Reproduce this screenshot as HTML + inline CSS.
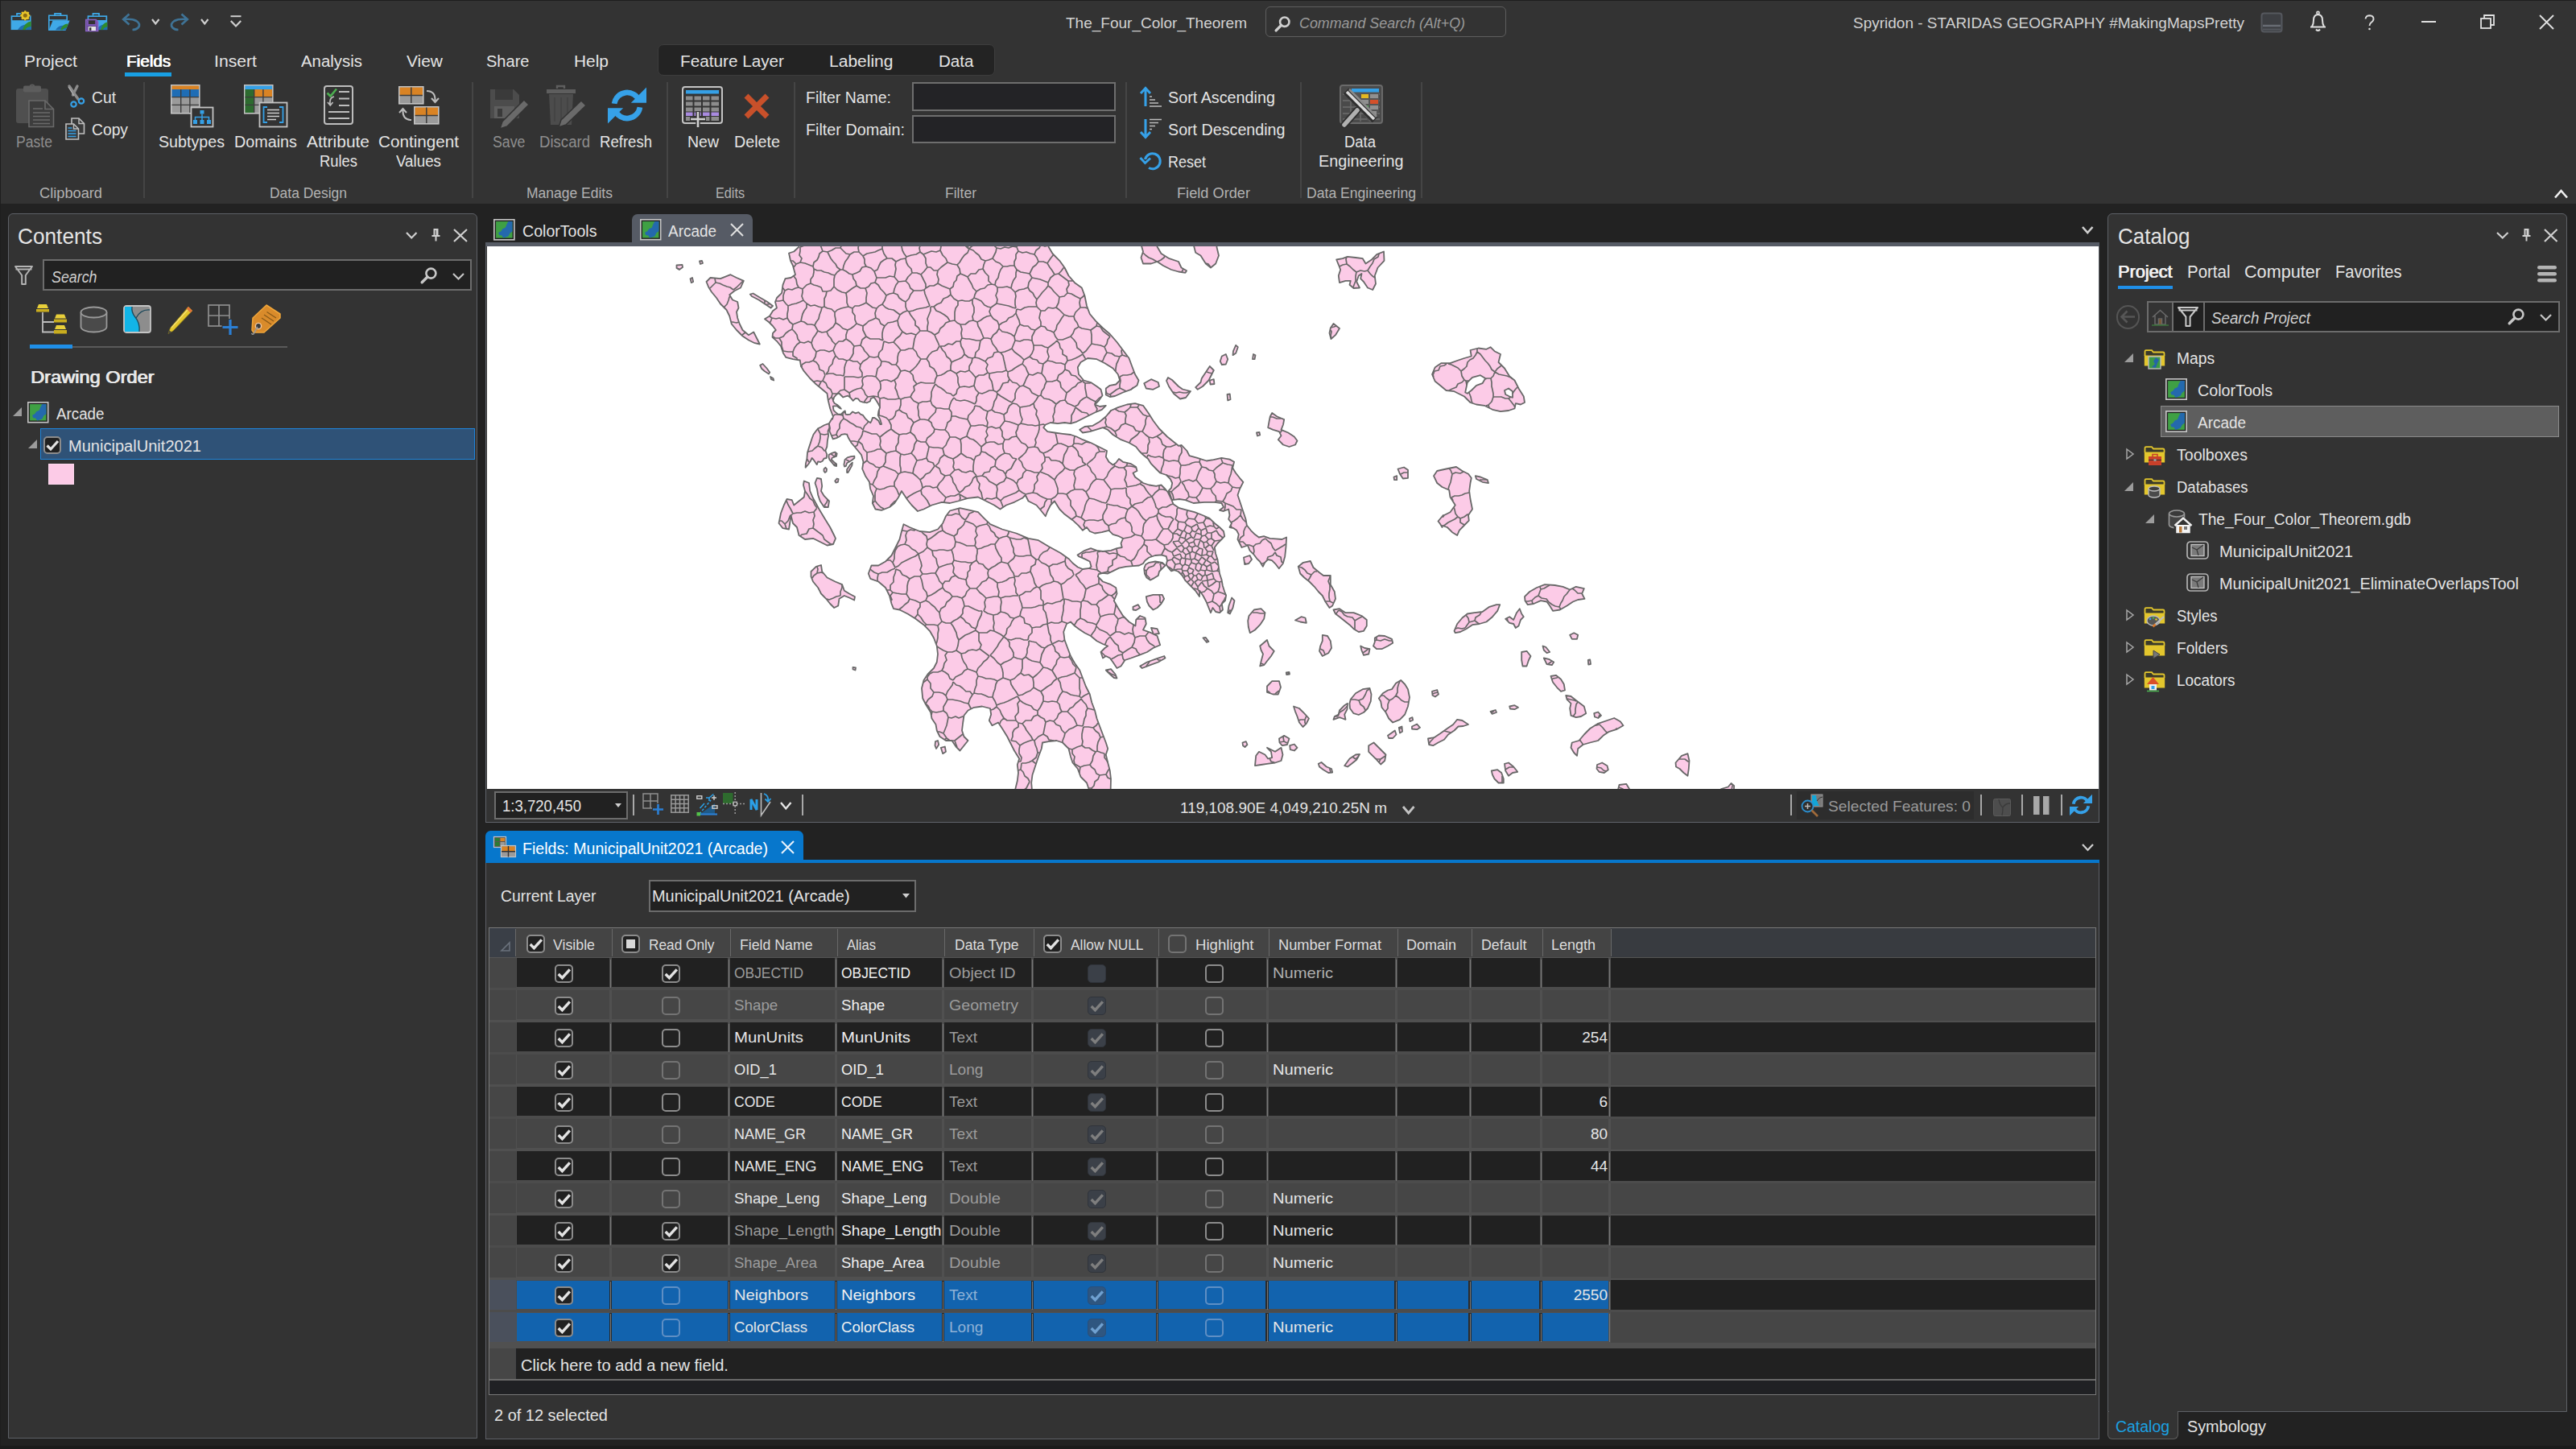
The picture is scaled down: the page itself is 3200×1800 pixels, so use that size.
<!DOCTYPE html>
<html><head><meta charset="utf-8"><title>The_Four_Color_Theorem</title>
<style>

html,body{margin:0;padding:0}
body{width:3200px;height:1800px;background:#222222;position:relative;overflow:hidden;font-family:'Liberation Sans',sans-serif}
body div{position:absolute;box-sizing:border-box}
svg{position:absolute;overflow:visible}
.cb{border:2px solid #8c8c8c;border-radius:5px;background:#212121}
.cbl{border:2px solid #737373;border-radius:5px;background:transparent}
.cbd{border:1px solid #30343a;border-radius:5px;background:#3b4048}
.cbs{border:2px solid #5f8fc4;border-radius:5px;background:transparent}
.cbds{border:1px solid #2a4f7a;border-radius:5px;background:#2f5680}
.pan{background:#333333;border:1.3px solid #5d6066}
.inp{background:#212121;border:2px solid #6c6c6c}

.t{position:absolute;white-space:nowrap;line-height:1;transform-origin:0 50%;font-family:'Liberation Sans', sans-serif}
</style></head>
<body>
<div style="left:0px;top:0px;width:3200px;height:252.5px;background:#333333"></div>
<div style="left:0px;top:0px;width:3200px;height:1px;background:#1e1e1e"></div>
<div style="left:0px;top:0px;width:1px;height:1800px;background:#1e1e1e"></div>
<div style="left:0px;top:1796px;width:3200px;height:4px;background:#1b1b1b"></div>
<div style="left:1572px;top:7.5px;width:299px;height:38.5px;border:1px solid #5e5e5e;border-radius:6px"></div>
<div style="left:817px;top:54.5px;width:419px;height:39.5px;background:#232323;border:1px solid #3d3d3d;border-radius:7px"></div>
<div style="left:155px;top:90px;width:58px;height:5px;background:#189fe3"></div>
<div style="left:178px;top:102px;width:2px;height:144px;background:#454545"></div>
<div style="left:586px;top:102px;width:2px;height:144px;background:#454545"></div>
<div style="left:828px;top:102px;width:2px;height:144px;background:#454545"></div>
<div style="left:986px;top:102px;width:2px;height:144px;background:#454545"></div>
<div style="left:1398px;top:102px;width:2px;height:144px;background:#454545"></div>
<div style="left:1614.5px;top:102px;width:2px;height:144px;background:#454545"></div>
<div style="left:1764.5px;top:102px;width:2px;height:144px;background:#454545"></div>
<div style="left:1133px;top:102px;width:253px;height:35.5px;background:#232326;border:2px solid #6e6e6e"></div>
<div style="left:1133px;top:142.5px;width:253px;height:35.5px;background:#232326;border:2px solid #6e6e6e"></div>
<div class="pan" style="left:10px;top:265.3px;width:582.6px;height:1522.2px;border-radius:6px 6px 0 0"></div>
<div class="inp" style="left:53px;top:322px;width:533px;height:39px;"></div>
<div style="left:36.5px;top:427.5px;width:53.5px;height:5px;background:#1f8fe8"></div>
<div style="left:90px;top:430px;width:267px;height:2px;background:#5a5a5a"></div>
<div style="left:50px;top:532px;width:540px;height:39px;background:#2f5277;border:1px solid #1f86dd"></div>
<div class="cb" style="left:54px;top:542px;width:22px;height:22px;"><svg width="100%" height="100%" viewBox="0 0 22 22" style="left:-2px;top:-2px;width:22px;height:22px"><path d="M4.5 11.5 L9 16 L18 6" fill="none" stroke="#e2e2e2" stroke-width="3.2"/></svg></div>
<div style="left:60px;top:576px;width:32px;height:26px;background:#fccbe7;border:1px solid #fdd9ee"></div>
<div style="left:785px;top:265.5px;width:150px;height:36.5px;background:#565b65;border-radius:7px 7px 0 0"></div>
<div style="left:603.3px;top:301px;width:2004.9px;height:5.2px;background:#565b65"></div>
<div style="left:603.3px;top:306px;width:2004.9px;height:716px;background:#333333;border:1.3px solid #60636a;border-top:none"></div>
<div style="left:605px;top:306.2px;width:2002px;height:673.8px;background:#ffffff"></div>
<div class="inp" style="left:613.5px;top:982.5px;width:166.5px;height:35px;"></div>
<div style="left:786px;top:987px;width:2px;height:26px;background:#a8a8a8"></div>
<div style="left:996px;top:987px;width:2px;height:26px;background:#a8a8a8"></div>
<div style="left:2224px;top:987px;width:2px;height:26px;background:#a8a8a8"></div>
<div style="left:2460px;top:987px;width:2px;height:26px;background:#a8a8a8"></div>
<div style="left:2511px;top:987px;width:2px;height:26px;background:#a8a8a8"></div>
<div style="left:2559.7px;top:987px;width:2px;height:26px;background:#a8a8a8"></div>
<div style="left:2231.5px;top:983px;width:220.5px;height:35px;background:#2d2d2d"></div>
<div style="left:603.3px;top:1031.7px;width:395.2px;height:38.3px;background:#0777cc;border-radius:6.5px 6.5px 0 0"></div>
<div style="left:603.3px;top:1068px;width:2004.9px;height:4px;background:#0777cc"></div>
<div class="pan" style="left:603.3px;top:1072px;width:2004.9px;height:715.5px;border-top:none"></div>
<div class="inp" style="left:805.5px;top:1092.5px;width:332.5px;height:40px;"></div>
<div style="left:607px;top:1152px;width:1997px;height:581px;background:#202124;border:1px solid #787878"></div>
<div style="left:608px;top:1153px;width:1393px;height:36px;background:#444444"></div>
<div style="left:2001px;top:1153px;width:602px;height:36px;background:#383b40"></div>
<div style="left:608px;top:1153px;width:32.5px;height:36px;background:#3a3f47"></div>
<div style="left:608px;top:1188.5px;width:1995px;height:1.5px;background:#555"></div>
<div style="left:640px;top:1154px;width:1px;height:34px;background:#686868"></div>
<div style="left:760px;top:1154px;width:1px;height:34px;background:#686868"></div>
<div style="left:907px;top:1154px;width:1px;height:34px;background:#686868"></div>
<div style="left:1040px;top:1154px;width:1px;height:34px;background:#686868"></div>
<div style="left:1173px;top:1154px;width:1px;height:34px;background:#686868"></div>
<div style="left:1284px;top:1154px;width:1px;height:34px;background:#686868"></div>
<div style="left:1439px;top:1154px;width:1px;height:34px;background:#686868"></div>
<div style="left:1575.5px;top:1154px;width:1px;height:34px;background:#686868"></div>
<div style="left:1735.5px;top:1154px;width:1px;height:34px;background:#686868"></div>
<div style="left:1827.5px;top:1154px;width:1px;height:34px;background:#686868"></div>
<div style="left:1915.5px;top:1154px;width:1px;height:34px;background:#686868"></div>
<div style="left:2000.5px;top:1154px;width:1px;height:34px;background:#686868"></div>
<svg style="left:622px;top:1170px" width="12" height="12" viewBox="0 0 12 12"><path d="M1 11 L11 11 L11 1 Z" fill="none" stroke="#6a717c" stroke-width="1.6"/></svg>
<div style="left:608px;top:1190px;width:1995px;height:40px;background:#4c4c4c"></div>
<div style="left:608px;top:1190px;width:32.5px;height:37px;background:#464646"></div>
<div style="left:642px;top:1190px;width:115.1px;height:36px;background:#212121"></div>
<div style="left:760.1px;top:1190px;width:144px;height:36px;background:#212121"></div>
<div style="left:907.1px;top:1190px;width:130px;height:36px;background:#212121"></div>
<div style="left:1040.1px;top:1190px;width:130px;height:36px;background:#212121"></div>
<div style="left:1173.1px;top:1190px;width:108px;height:36px;background:#212121"></div>
<div style="left:1284.1px;top:1190px;width:152px;height:36px;background:#212121"></div>
<div style="left:1439.1px;top:1190px;width:133.5px;height:36px;background:#212121"></div>
<div style="left:1575.6px;top:1190px;width:157px;height:36px;background:#212121"></div>
<div style="left:1735.6px;top:1190px;width:89px;height:36px;background:#212121"></div>
<div style="left:1827.6px;top:1190px;width:85px;height:36px;background:#212121"></div>
<div style="left:1915.6px;top:1190px;width:82px;height:36px;background:#212121"></div>
<div style="left:2000.6px;top:1190px;width:602.4px;height:37px;background:#212121"></div>
<div style="left:758.1px;top:1192px;width:1px;height:35px;background:#777"></div>
<div style="left:905.1px;top:1192px;width:1px;height:35px;background:#777"></div>
<div style="left:1038.1px;top:1192px;width:1px;height:35px;background:#777"></div>
<div style="left:1171.1px;top:1192px;width:1px;height:35px;background:#777"></div>
<div style="left:1282.1px;top:1192px;width:1px;height:35px;background:#777"></div>
<div style="left:1437.1px;top:1192px;width:1px;height:35px;background:#777"></div>
<div style="left:1573.6px;top:1192px;width:1px;height:35px;background:#777"></div>
<div style="left:1733.6px;top:1192px;width:1px;height:35px;background:#777"></div>
<div style="left:1825.6px;top:1192px;width:1px;height:35px;background:#777"></div>
<div style="left:1913.6px;top:1192px;width:1px;height:35px;background:#777"></div>
<div style="left:1998.6px;top:1192px;width:1px;height:35px;background:#777"></div>
<div class="cb" style="left:689px;top:1198px;width:23px;height:23px;"><svg width="100%" height="100%" viewBox="0 0 22 22" style="left:-2px;top:-2px;width:23px;height:23px"><path d="M4.5 11.5 L9 16 L18 6" fill="none" stroke="#e2e2e2" stroke-width="3.2"/></svg></div>
<div class="cb" style="left:822px;top:1198px;width:23px;height:23px;"><svg width="100%" height="100%" viewBox="0 0 22 22" style="left:-2px;top:-2px;width:23px;height:23px"><path d="M4.5 11.5 L9 16 L18 6" fill="none" stroke="#e2e2e2" stroke-width="3.2"/></svg></div>
<div class="cbd" style="left:1351px;top:1198px;width:23px;height:23px;"></div>
<div class="cb" style="left:1497px;top:1198px;width:23px;height:23px;"></div>
<div style="left:608px;top:1230px;width:1995px;height:40px;background:#505050"></div>
<div style="left:608px;top:1230px;width:32.5px;height:37px;background:#464646"></div>
<div style="left:642px;top:1230px;width:115.1px;height:36px;background:#464646"></div>
<div style="left:760.1px;top:1230px;width:144px;height:36px;background:#464646"></div>
<div style="left:907.1px;top:1230px;width:130px;height:36px;background:#464646"></div>
<div style="left:1040.1px;top:1230px;width:130px;height:36px;background:#464646"></div>
<div style="left:1173.1px;top:1230px;width:108px;height:36px;background:#464646"></div>
<div style="left:1284.1px;top:1230px;width:152px;height:36px;background:#464646"></div>
<div style="left:1439.1px;top:1230px;width:133.5px;height:36px;background:#464646"></div>
<div style="left:1575.6px;top:1230px;width:157px;height:36px;background:#464646"></div>
<div style="left:1735.6px;top:1230px;width:89px;height:36px;background:#464646"></div>
<div style="left:1827.6px;top:1230px;width:85px;height:36px;background:#464646"></div>
<div style="left:1915.6px;top:1230px;width:82px;height:36px;background:#464646"></div>
<div style="left:2000.6px;top:1230px;width:602.4px;height:38px;background:#464646"></div>
<div class="cb" style="left:689px;top:1238px;width:23px;height:23px;"><svg width="100%" height="100%" viewBox="0 0 22 22" style="left:-2px;top:-2px;width:23px;height:23px"><path d="M4.5 11.5 L9 16 L18 6" fill="none" stroke="#e2e2e2" stroke-width="3.2"/></svg></div>
<div class="cbl" style="left:822px;top:1238px;width:23px;height:23px;"></div>
<div class="cbd" style="left:1351px;top:1238px;width:23px;height:23px;"><svg width="100%" height="100%" viewBox="0 0 22 22" style="left:-1px;top:-1px;width:23px;height:23px"><path d="M4.5 11.5 L9 16 L18 6" fill="none" stroke="#7e7e7e" stroke-width="3.2"/></svg></div>
<div class="cbl" style="left:1497px;top:1238px;width:23px;height:23px;"></div>
<div style="left:608px;top:1270px;width:1995px;height:40px;background:#4c4c4c"></div>
<div style="left:608px;top:1270px;width:32.5px;height:37px;background:#464646"></div>
<div style="left:642px;top:1270px;width:115.1px;height:36px;background:#212121"></div>
<div style="left:760.1px;top:1270px;width:144px;height:36px;background:#212121"></div>
<div style="left:907.1px;top:1270px;width:130px;height:36px;background:#212121"></div>
<div style="left:1040.1px;top:1270px;width:130px;height:36px;background:#212121"></div>
<div style="left:1173.1px;top:1270px;width:108px;height:36px;background:#212121"></div>
<div style="left:1284.1px;top:1270px;width:152px;height:36px;background:#212121"></div>
<div style="left:1439.1px;top:1270px;width:133.5px;height:36px;background:#212121"></div>
<div style="left:1575.6px;top:1270px;width:157px;height:36px;background:#212121"></div>
<div style="left:1735.6px;top:1270px;width:89px;height:36px;background:#212121"></div>
<div style="left:1827.6px;top:1270px;width:85px;height:36px;background:#212121"></div>
<div style="left:1915.6px;top:1270px;width:82px;height:36px;background:#212121"></div>
<div style="left:2000.6px;top:1270px;width:602.4px;height:37px;background:#212121"></div>
<div style="left:758.1px;top:1272px;width:1px;height:35px;background:#777"></div>
<div style="left:905.1px;top:1272px;width:1px;height:35px;background:#777"></div>
<div style="left:1038.1px;top:1272px;width:1px;height:35px;background:#777"></div>
<div style="left:1171.1px;top:1272px;width:1px;height:35px;background:#777"></div>
<div style="left:1282.1px;top:1272px;width:1px;height:35px;background:#777"></div>
<div style="left:1437.1px;top:1272px;width:1px;height:35px;background:#777"></div>
<div style="left:1573.6px;top:1272px;width:1px;height:35px;background:#777"></div>
<div style="left:1733.6px;top:1272px;width:1px;height:35px;background:#777"></div>
<div style="left:1825.6px;top:1272px;width:1px;height:35px;background:#777"></div>
<div style="left:1913.6px;top:1272px;width:1px;height:35px;background:#777"></div>
<div style="left:1998.6px;top:1272px;width:1px;height:35px;background:#777"></div>
<div class="cb" style="left:689px;top:1278px;width:23px;height:23px;"><svg width="100%" height="100%" viewBox="0 0 22 22" style="left:-2px;top:-2px;width:23px;height:23px"><path d="M4.5 11.5 L9 16 L18 6" fill="none" stroke="#e2e2e2" stroke-width="3.2"/></svg></div>
<div class="cb" style="left:822px;top:1278px;width:23px;height:23px;"></div>
<div class="cbd" style="left:1351px;top:1278px;width:23px;height:23px;"><svg width="100%" height="100%" viewBox="0 0 22 22" style="left:-1px;top:-1px;width:23px;height:23px"><path d="M4.5 11.5 L9 16 L18 6" fill="none" stroke="#7e7e7e" stroke-width="3.2"/></svg></div>
<div class="cb" style="left:1497px;top:1278px;width:23px;height:23px;"></div>
<div style="left:608px;top:1310px;width:1995px;height:40px;background:#505050"></div>
<div style="left:608px;top:1310px;width:32.5px;height:37px;background:#464646"></div>
<div style="left:642px;top:1310px;width:115.1px;height:36px;background:#464646"></div>
<div style="left:760.1px;top:1310px;width:144px;height:36px;background:#464646"></div>
<div style="left:907.1px;top:1310px;width:130px;height:36px;background:#464646"></div>
<div style="left:1040.1px;top:1310px;width:130px;height:36px;background:#464646"></div>
<div style="left:1173.1px;top:1310px;width:108px;height:36px;background:#464646"></div>
<div style="left:1284.1px;top:1310px;width:152px;height:36px;background:#464646"></div>
<div style="left:1439.1px;top:1310px;width:133.5px;height:36px;background:#464646"></div>
<div style="left:1575.6px;top:1310px;width:157px;height:36px;background:#464646"></div>
<div style="left:1735.6px;top:1310px;width:89px;height:36px;background:#464646"></div>
<div style="left:1827.6px;top:1310px;width:85px;height:36px;background:#464646"></div>
<div style="left:1915.6px;top:1310px;width:82px;height:36px;background:#464646"></div>
<div style="left:2000.6px;top:1310px;width:602.4px;height:38px;background:#464646"></div>
<div class="cb" style="left:689px;top:1318px;width:23px;height:23px;"><svg width="100%" height="100%" viewBox="0 0 22 22" style="left:-2px;top:-2px;width:23px;height:23px"><path d="M4.5 11.5 L9 16 L18 6" fill="none" stroke="#e2e2e2" stroke-width="3.2"/></svg></div>
<div class="cbl" style="left:822px;top:1318px;width:23px;height:23px;"></div>
<div class="cbd" style="left:1351px;top:1318px;width:23px;height:23px;"><svg width="100%" height="100%" viewBox="0 0 22 22" style="left:-1px;top:-1px;width:23px;height:23px"><path d="M4.5 11.5 L9 16 L18 6" fill="none" stroke="#7e7e7e" stroke-width="3.2"/></svg></div>
<div class="cbl" style="left:1497px;top:1318px;width:23px;height:23px;"></div>
<div style="left:608px;top:1350px;width:1995px;height:40px;background:#4c4c4c"></div>
<div style="left:608px;top:1350px;width:32.5px;height:37px;background:#464646"></div>
<div style="left:642px;top:1350px;width:115.1px;height:36px;background:#212121"></div>
<div style="left:760.1px;top:1350px;width:144px;height:36px;background:#212121"></div>
<div style="left:907.1px;top:1350px;width:130px;height:36px;background:#212121"></div>
<div style="left:1040.1px;top:1350px;width:130px;height:36px;background:#212121"></div>
<div style="left:1173.1px;top:1350px;width:108px;height:36px;background:#212121"></div>
<div style="left:1284.1px;top:1350px;width:152px;height:36px;background:#212121"></div>
<div style="left:1439.1px;top:1350px;width:133.5px;height:36px;background:#212121"></div>
<div style="left:1575.6px;top:1350px;width:157px;height:36px;background:#212121"></div>
<div style="left:1735.6px;top:1350px;width:89px;height:36px;background:#212121"></div>
<div style="left:1827.6px;top:1350px;width:85px;height:36px;background:#212121"></div>
<div style="left:1915.6px;top:1350px;width:82px;height:36px;background:#212121"></div>
<div style="left:2000.6px;top:1350px;width:602.4px;height:37px;background:#212121"></div>
<div style="left:758.1px;top:1352px;width:1px;height:35px;background:#777"></div>
<div style="left:905.1px;top:1352px;width:1px;height:35px;background:#777"></div>
<div style="left:1038.1px;top:1352px;width:1px;height:35px;background:#777"></div>
<div style="left:1171.1px;top:1352px;width:1px;height:35px;background:#777"></div>
<div style="left:1282.1px;top:1352px;width:1px;height:35px;background:#777"></div>
<div style="left:1437.1px;top:1352px;width:1px;height:35px;background:#777"></div>
<div style="left:1573.6px;top:1352px;width:1px;height:35px;background:#777"></div>
<div style="left:1733.6px;top:1352px;width:1px;height:35px;background:#777"></div>
<div style="left:1825.6px;top:1352px;width:1px;height:35px;background:#777"></div>
<div style="left:1913.6px;top:1352px;width:1px;height:35px;background:#777"></div>
<div style="left:1998.6px;top:1352px;width:1px;height:35px;background:#777"></div>
<div class="cb" style="left:689px;top:1358px;width:23px;height:23px;"><svg width="100%" height="100%" viewBox="0 0 22 22" style="left:-2px;top:-2px;width:23px;height:23px"><path d="M4.5 11.5 L9 16 L18 6" fill="none" stroke="#e2e2e2" stroke-width="3.2"/></svg></div>
<div class="cb" style="left:822px;top:1358px;width:23px;height:23px;"></div>
<div class="cbd" style="left:1351px;top:1358px;width:23px;height:23px;"><svg width="100%" height="100%" viewBox="0 0 22 22" style="left:-1px;top:-1px;width:23px;height:23px"><path d="M4.5 11.5 L9 16 L18 6" fill="none" stroke="#7e7e7e" stroke-width="3.2"/></svg></div>
<div class="cb" style="left:1497px;top:1358px;width:23px;height:23px;"></div>
<div style="left:608px;top:1390px;width:1995px;height:40px;background:#505050"></div>
<div style="left:608px;top:1390px;width:32.5px;height:37px;background:#464646"></div>
<div style="left:642px;top:1390px;width:115.1px;height:36px;background:#464646"></div>
<div style="left:760.1px;top:1390px;width:144px;height:36px;background:#464646"></div>
<div style="left:907.1px;top:1390px;width:130px;height:36px;background:#464646"></div>
<div style="left:1040.1px;top:1390px;width:130px;height:36px;background:#464646"></div>
<div style="left:1173.1px;top:1390px;width:108px;height:36px;background:#464646"></div>
<div style="left:1284.1px;top:1390px;width:152px;height:36px;background:#464646"></div>
<div style="left:1439.1px;top:1390px;width:133.5px;height:36px;background:#464646"></div>
<div style="left:1575.6px;top:1390px;width:157px;height:36px;background:#464646"></div>
<div style="left:1735.6px;top:1390px;width:89px;height:36px;background:#464646"></div>
<div style="left:1827.6px;top:1390px;width:85px;height:36px;background:#464646"></div>
<div style="left:1915.6px;top:1390px;width:82px;height:36px;background:#464646"></div>
<div style="left:2000.6px;top:1390px;width:602.4px;height:38px;background:#464646"></div>
<div class="cb" style="left:689px;top:1398px;width:23px;height:23px;"><svg width="100%" height="100%" viewBox="0 0 22 22" style="left:-2px;top:-2px;width:23px;height:23px"><path d="M4.5 11.5 L9 16 L18 6" fill="none" stroke="#e2e2e2" stroke-width="3.2"/></svg></div>
<div class="cbl" style="left:822px;top:1398px;width:23px;height:23px;"></div>
<div class="cbd" style="left:1351px;top:1398px;width:23px;height:23px;"><svg width="100%" height="100%" viewBox="0 0 22 22" style="left:-1px;top:-1px;width:23px;height:23px"><path d="M4.5 11.5 L9 16 L18 6" fill="none" stroke="#7e7e7e" stroke-width="3.2"/></svg></div>
<div class="cbl" style="left:1497px;top:1398px;width:23px;height:23px;"></div>
<div style="left:608px;top:1430px;width:1995px;height:40px;background:#4c4c4c"></div>
<div style="left:608px;top:1430px;width:32.5px;height:37px;background:#464646"></div>
<div style="left:642px;top:1430px;width:115.1px;height:36px;background:#212121"></div>
<div style="left:760.1px;top:1430px;width:144px;height:36px;background:#212121"></div>
<div style="left:907.1px;top:1430px;width:130px;height:36px;background:#212121"></div>
<div style="left:1040.1px;top:1430px;width:130px;height:36px;background:#212121"></div>
<div style="left:1173.1px;top:1430px;width:108px;height:36px;background:#212121"></div>
<div style="left:1284.1px;top:1430px;width:152px;height:36px;background:#212121"></div>
<div style="left:1439.1px;top:1430px;width:133.5px;height:36px;background:#212121"></div>
<div style="left:1575.6px;top:1430px;width:157px;height:36px;background:#212121"></div>
<div style="left:1735.6px;top:1430px;width:89px;height:36px;background:#212121"></div>
<div style="left:1827.6px;top:1430px;width:85px;height:36px;background:#212121"></div>
<div style="left:1915.6px;top:1430px;width:82px;height:36px;background:#212121"></div>
<div style="left:2000.6px;top:1430px;width:602.4px;height:37px;background:#212121"></div>
<div style="left:758.1px;top:1432px;width:1px;height:35px;background:#777"></div>
<div style="left:905.1px;top:1432px;width:1px;height:35px;background:#777"></div>
<div style="left:1038.1px;top:1432px;width:1px;height:35px;background:#777"></div>
<div style="left:1171.1px;top:1432px;width:1px;height:35px;background:#777"></div>
<div style="left:1282.1px;top:1432px;width:1px;height:35px;background:#777"></div>
<div style="left:1437.1px;top:1432px;width:1px;height:35px;background:#777"></div>
<div style="left:1573.6px;top:1432px;width:1px;height:35px;background:#777"></div>
<div style="left:1733.6px;top:1432px;width:1px;height:35px;background:#777"></div>
<div style="left:1825.6px;top:1432px;width:1px;height:35px;background:#777"></div>
<div style="left:1913.6px;top:1432px;width:1px;height:35px;background:#777"></div>
<div style="left:1998.6px;top:1432px;width:1px;height:35px;background:#777"></div>
<div class="cb" style="left:689px;top:1438px;width:23px;height:23px;"><svg width="100%" height="100%" viewBox="0 0 22 22" style="left:-2px;top:-2px;width:23px;height:23px"><path d="M4.5 11.5 L9 16 L18 6" fill="none" stroke="#e2e2e2" stroke-width="3.2"/></svg></div>
<div class="cb" style="left:822px;top:1438px;width:23px;height:23px;"></div>
<div class="cbd" style="left:1351px;top:1438px;width:23px;height:23px;"><svg width="100%" height="100%" viewBox="0 0 22 22" style="left:-1px;top:-1px;width:23px;height:23px"><path d="M4.5 11.5 L9 16 L18 6" fill="none" stroke="#7e7e7e" stroke-width="3.2"/></svg></div>
<div class="cb" style="left:1497px;top:1438px;width:23px;height:23px;"></div>
<div style="left:608px;top:1470px;width:1995px;height:40px;background:#505050"></div>
<div style="left:608px;top:1470px;width:32.5px;height:37px;background:#464646"></div>
<div style="left:642px;top:1470px;width:115.1px;height:36px;background:#464646"></div>
<div style="left:760.1px;top:1470px;width:144px;height:36px;background:#464646"></div>
<div style="left:907.1px;top:1470px;width:130px;height:36px;background:#464646"></div>
<div style="left:1040.1px;top:1470px;width:130px;height:36px;background:#464646"></div>
<div style="left:1173.1px;top:1470px;width:108px;height:36px;background:#464646"></div>
<div style="left:1284.1px;top:1470px;width:152px;height:36px;background:#464646"></div>
<div style="left:1439.1px;top:1470px;width:133.5px;height:36px;background:#464646"></div>
<div style="left:1575.6px;top:1470px;width:157px;height:36px;background:#464646"></div>
<div style="left:1735.6px;top:1470px;width:89px;height:36px;background:#464646"></div>
<div style="left:1827.6px;top:1470px;width:85px;height:36px;background:#464646"></div>
<div style="left:1915.6px;top:1470px;width:82px;height:36px;background:#464646"></div>
<div style="left:2000.6px;top:1470px;width:602.4px;height:38px;background:#464646"></div>
<div class="cb" style="left:689px;top:1478px;width:23px;height:23px;"><svg width="100%" height="100%" viewBox="0 0 22 22" style="left:-2px;top:-2px;width:23px;height:23px"><path d="M4.5 11.5 L9 16 L18 6" fill="none" stroke="#e2e2e2" stroke-width="3.2"/></svg></div>
<div class="cbl" style="left:822px;top:1478px;width:23px;height:23px;"></div>
<div class="cbd" style="left:1351px;top:1478px;width:23px;height:23px;"><svg width="100%" height="100%" viewBox="0 0 22 22" style="left:-1px;top:-1px;width:23px;height:23px"><path d="M4.5 11.5 L9 16 L18 6" fill="none" stroke="#7e7e7e" stroke-width="3.2"/></svg></div>
<div class="cbl" style="left:1497px;top:1478px;width:23px;height:23px;"></div>
<div style="left:608px;top:1510px;width:1995px;height:40px;background:#4c4c4c"></div>
<div style="left:608px;top:1510px;width:32.5px;height:37px;background:#464646"></div>
<div style="left:642px;top:1510px;width:115.1px;height:36px;background:#212121"></div>
<div style="left:760.1px;top:1510px;width:144px;height:36px;background:#212121"></div>
<div style="left:907.1px;top:1510px;width:130px;height:36px;background:#212121"></div>
<div style="left:1040.1px;top:1510px;width:130px;height:36px;background:#212121"></div>
<div style="left:1173.1px;top:1510px;width:108px;height:36px;background:#212121"></div>
<div style="left:1284.1px;top:1510px;width:152px;height:36px;background:#212121"></div>
<div style="left:1439.1px;top:1510px;width:133.5px;height:36px;background:#212121"></div>
<div style="left:1575.6px;top:1510px;width:157px;height:36px;background:#212121"></div>
<div style="left:1735.6px;top:1510px;width:89px;height:36px;background:#212121"></div>
<div style="left:1827.6px;top:1510px;width:85px;height:36px;background:#212121"></div>
<div style="left:1915.6px;top:1510px;width:82px;height:36px;background:#212121"></div>
<div style="left:2000.6px;top:1510px;width:602.4px;height:37px;background:#212121"></div>
<div style="left:758.1px;top:1512px;width:1px;height:35px;background:#777"></div>
<div style="left:905.1px;top:1512px;width:1px;height:35px;background:#777"></div>
<div style="left:1038.1px;top:1512px;width:1px;height:35px;background:#777"></div>
<div style="left:1171.1px;top:1512px;width:1px;height:35px;background:#777"></div>
<div style="left:1282.1px;top:1512px;width:1px;height:35px;background:#777"></div>
<div style="left:1437.1px;top:1512px;width:1px;height:35px;background:#777"></div>
<div style="left:1573.6px;top:1512px;width:1px;height:35px;background:#777"></div>
<div style="left:1733.6px;top:1512px;width:1px;height:35px;background:#777"></div>
<div style="left:1825.6px;top:1512px;width:1px;height:35px;background:#777"></div>
<div style="left:1913.6px;top:1512px;width:1px;height:35px;background:#777"></div>
<div style="left:1998.6px;top:1512px;width:1px;height:35px;background:#777"></div>
<div class="cb" style="left:689px;top:1518px;width:23px;height:23px;"><svg width="100%" height="100%" viewBox="0 0 22 22" style="left:-2px;top:-2px;width:23px;height:23px"><path d="M4.5 11.5 L9 16 L18 6" fill="none" stroke="#e2e2e2" stroke-width="3.2"/></svg></div>
<div class="cb" style="left:822px;top:1518px;width:23px;height:23px;"><svg width="100%" height="100%" viewBox="0 0 22 22" style="left:-2px;top:-2px;width:23px;height:23px"><path d="M4.5 11.5 L9 16 L18 6" fill="none" stroke="#e2e2e2" stroke-width="3.2"/></svg></div>
<div class="cbd" style="left:1351px;top:1518px;width:23px;height:23px;"><svg width="100%" height="100%" viewBox="0 0 22 22" style="left:-1px;top:-1px;width:23px;height:23px"><path d="M4.5 11.5 L9 16 L18 6" fill="none" stroke="#7e7e7e" stroke-width="3.2"/></svg></div>
<div class="cb" style="left:1497px;top:1518px;width:23px;height:23px;"></div>
<div style="left:608px;top:1550px;width:1995px;height:40px;background:#505050"></div>
<div style="left:608px;top:1550px;width:32.5px;height:37px;background:#464646"></div>
<div style="left:642px;top:1550px;width:115.1px;height:36px;background:#464646"></div>
<div style="left:760.1px;top:1550px;width:144px;height:36px;background:#464646"></div>
<div style="left:907.1px;top:1550px;width:130px;height:36px;background:#464646"></div>
<div style="left:1040.1px;top:1550px;width:130px;height:36px;background:#464646"></div>
<div style="left:1173.1px;top:1550px;width:108px;height:36px;background:#464646"></div>
<div style="left:1284.1px;top:1550px;width:152px;height:36px;background:#464646"></div>
<div style="left:1439.1px;top:1550px;width:133.5px;height:36px;background:#464646"></div>
<div style="left:1575.6px;top:1550px;width:157px;height:36px;background:#464646"></div>
<div style="left:1735.6px;top:1550px;width:89px;height:36px;background:#464646"></div>
<div style="left:1827.6px;top:1550px;width:85px;height:36px;background:#464646"></div>
<div style="left:1915.6px;top:1550px;width:82px;height:36px;background:#464646"></div>
<div style="left:2000.6px;top:1550px;width:602.4px;height:38px;background:#464646"></div>
<div class="cb" style="left:689px;top:1558px;width:23px;height:23px;"><svg width="100%" height="100%" viewBox="0 0 22 22" style="left:-2px;top:-2px;width:23px;height:23px"><path d="M4.5 11.5 L9 16 L18 6" fill="none" stroke="#e2e2e2" stroke-width="3.2"/></svg></div>
<div class="cb" style="left:822px;top:1558px;width:23px;height:23px;"><svg width="100%" height="100%" viewBox="0 0 22 22" style="left:-2px;top:-2px;width:23px;height:23px"><path d="M4.5 11.5 L9 16 L18 6" fill="none" stroke="#e2e2e2" stroke-width="3.2"/></svg></div>
<div class="cbd" style="left:1351px;top:1558px;width:23px;height:23px;"><svg width="100%" height="100%" viewBox="0 0 22 22" style="left:-1px;top:-1px;width:23px;height:23px"><path d="M4.5 11.5 L9 16 L18 6" fill="none" stroke="#7e7e7e" stroke-width="3.2"/></svg></div>
<div class="cbl" style="left:1497px;top:1558px;width:23px;height:23px;"></div>
<div style="left:608px;top:1590px;width:1995px;height:40px;background:#4c4c4c"></div>
<div style="left:608px;top:1590px;width:32.5px;height:37px;background:#4a505c"></div>
<div style="left:642px;top:1591px;width:115.1px;height:35px;background:#1263ae"></div>
<div style="left:756.6px;top:1591px;width:3.5px;height:35px;background:#2a2a2a"></div>
<div style="left:760.1px;top:1591px;width:144px;height:35px;background:#1263ae"></div>
<div style="left:903.6px;top:1591px;width:3.5px;height:35px;background:#2a2a2a"></div>
<div style="left:907.1px;top:1591px;width:130px;height:35px;background:#1263ae"></div>
<div style="left:1036.6px;top:1591px;width:3.5px;height:35px;background:#2a2a2a"></div>
<div style="left:1040.1px;top:1591px;width:130px;height:35px;background:#1263ae"></div>
<div style="left:1169.6px;top:1591px;width:3.5px;height:35px;background:#2a2a2a"></div>
<div style="left:1173.1px;top:1591px;width:108px;height:35px;background:#1263ae"></div>
<div style="left:1280.6px;top:1591px;width:3.5px;height:35px;background:#2a2a2a"></div>
<div style="left:1284.1px;top:1591px;width:152px;height:35px;background:#1263ae"></div>
<div style="left:1435.6px;top:1591px;width:3.5px;height:35px;background:#2a2a2a"></div>
<div style="left:1439.1px;top:1591px;width:133.5px;height:35px;background:#1263ae"></div>
<div style="left:1572.1px;top:1591px;width:3.5px;height:35px;background:#2a2a2a"></div>
<div style="left:1575.6px;top:1591px;width:157px;height:35px;background:#1263ae"></div>
<div style="left:1732.1px;top:1591px;width:3.5px;height:35px;background:#2a2a2a"></div>
<div style="left:1735.6px;top:1591px;width:89px;height:35px;background:#1263ae"></div>
<div style="left:1824.1px;top:1591px;width:3.5px;height:35px;background:#2a2a2a"></div>
<div style="left:1827.6px;top:1591px;width:85px;height:35px;background:#1263ae"></div>
<div style="left:1912.1px;top:1591px;width:3.5px;height:35px;background:#2a2a2a"></div>
<div style="left:1915.6px;top:1591px;width:82px;height:35px;background:#1263ae"></div>
<div style="left:2000.6px;top:1590px;width:602.4px;height:37px;background:#212121"></div>
<div style="left:758.1px;top:1592px;width:1px;height:35px;background:#777"></div>
<div style="left:905.1px;top:1592px;width:1px;height:35px;background:#777"></div>
<div style="left:1038.1px;top:1592px;width:1px;height:35px;background:#777"></div>
<div style="left:1171.1px;top:1592px;width:1px;height:35px;background:#777"></div>
<div style="left:1282.1px;top:1592px;width:1px;height:35px;background:#777"></div>
<div style="left:1437.1px;top:1592px;width:1px;height:35px;background:#777"></div>
<div style="left:1573.6px;top:1592px;width:1px;height:35px;background:#777"></div>
<div style="left:1733.6px;top:1592px;width:1px;height:35px;background:#777"></div>
<div style="left:1825.6px;top:1592px;width:1px;height:35px;background:#777"></div>
<div style="left:1913.6px;top:1592px;width:1px;height:35px;background:#777"></div>
<div style="left:1998.6px;top:1592px;width:1px;height:35px;background:#777"></div>
<div class="cb" style="left:689px;top:1598px;width:23px;height:23px;"><svg width="100%" height="100%" viewBox="0 0 22 22" style="left:-2px;top:-2px;width:23px;height:23px"><path d="M4.5 11.5 L9 16 L18 6" fill="none" stroke="#e2e2e2" stroke-width="3.2"/></svg></div>
<div class="cbs" style="left:822px;top:1598px;width:23px;height:23px;"></div>
<div class="cbds" style="left:1351px;top:1598px;width:23px;height:23px;"><svg width="100%" height="100%" viewBox="0 0 22 22" style="left:-1px;top:-1px;width:23px;height:23px"><path d="M4.5 11.5 L9 16 L18 6" fill="none" stroke="#6fa0d0" stroke-width="3.2"/></svg></div>
<div class="cbs" style="left:1497px;top:1598px;width:23px;height:23px;"></div>
<div style="left:608px;top:1630px;width:1995px;height:40px;background:#505050"></div>
<div style="left:608px;top:1630px;width:32.5px;height:37px;background:#4a505c"></div>
<div style="left:642px;top:1631px;width:115.1px;height:35px;background:#1263ae"></div>
<div style="left:756.6px;top:1631px;width:3.5px;height:35px;background:#2a2a2a"></div>
<div style="left:760.1px;top:1631px;width:144px;height:35px;background:#1263ae"></div>
<div style="left:903.6px;top:1631px;width:3.5px;height:35px;background:#2a2a2a"></div>
<div style="left:907.1px;top:1631px;width:130px;height:35px;background:#1263ae"></div>
<div style="left:1036.6px;top:1631px;width:3.5px;height:35px;background:#2a2a2a"></div>
<div style="left:1040.1px;top:1631px;width:130px;height:35px;background:#1263ae"></div>
<div style="left:1169.6px;top:1631px;width:3.5px;height:35px;background:#2a2a2a"></div>
<div style="left:1173.1px;top:1631px;width:108px;height:35px;background:#1263ae"></div>
<div style="left:1280.6px;top:1631px;width:3.5px;height:35px;background:#2a2a2a"></div>
<div style="left:1284.1px;top:1631px;width:152px;height:35px;background:#1263ae"></div>
<div style="left:1435.6px;top:1631px;width:3.5px;height:35px;background:#2a2a2a"></div>
<div style="left:1439.1px;top:1631px;width:133.5px;height:35px;background:#1263ae"></div>
<div style="left:1572.1px;top:1631px;width:3.5px;height:35px;background:#2a2a2a"></div>
<div style="left:1575.6px;top:1631px;width:157px;height:35px;background:#1263ae"></div>
<div style="left:1732.1px;top:1631px;width:3.5px;height:35px;background:#2a2a2a"></div>
<div style="left:1735.6px;top:1631px;width:89px;height:35px;background:#1263ae"></div>
<div style="left:1824.1px;top:1631px;width:3.5px;height:35px;background:#2a2a2a"></div>
<div style="left:1827.6px;top:1631px;width:85px;height:35px;background:#1263ae"></div>
<div style="left:1912.1px;top:1631px;width:3.5px;height:35px;background:#2a2a2a"></div>
<div style="left:1915.6px;top:1631px;width:82px;height:35px;background:#1263ae"></div>
<div style="left:2000.6px;top:1630px;width:602.4px;height:38px;background:#464646"></div>
<div style="left:758.1px;top:1632px;width:1px;height:35px;background:#777"></div>
<div style="left:905.1px;top:1632px;width:1px;height:35px;background:#777"></div>
<div style="left:1038.1px;top:1632px;width:1px;height:35px;background:#777"></div>
<div style="left:1171.1px;top:1632px;width:1px;height:35px;background:#777"></div>
<div style="left:1282.1px;top:1632px;width:1px;height:35px;background:#777"></div>
<div style="left:1437.1px;top:1632px;width:1px;height:35px;background:#777"></div>
<div style="left:1573.6px;top:1632px;width:1px;height:35px;background:#777"></div>
<div style="left:1733.6px;top:1632px;width:1px;height:35px;background:#777"></div>
<div style="left:1825.6px;top:1632px;width:1px;height:35px;background:#777"></div>
<div style="left:1913.6px;top:1632px;width:1px;height:35px;background:#777"></div>
<div style="left:1998.6px;top:1632px;width:1px;height:35px;background:#777"></div>
<div class="cb" style="left:689px;top:1638px;width:23px;height:23px;"><svg width="100%" height="100%" viewBox="0 0 22 22" style="left:-2px;top:-2px;width:23px;height:23px"><path d="M4.5 11.5 L9 16 L18 6" fill="none" stroke="#e2e2e2" stroke-width="3.2"/></svg></div>
<div class="cbs" style="left:822px;top:1638px;width:23px;height:23px;"></div>
<div class="cbds" style="left:1351px;top:1638px;width:23px;height:23px;"><svg width="100%" height="100%" viewBox="0 0 22 22" style="left:-1px;top:-1px;width:23px;height:23px"><path d="M4.5 11.5 L9 16 L18 6" fill="none" stroke="#6fa0d0" stroke-width="3.2"/></svg></div>
<div class="cbs" style="left:1497px;top:1638px;width:23px;height:23px;"></div>
<div class="cb" style="left:653.5px;top:1160.5px;width:23px;height:23px;"><svg width="100%" height="100%" viewBox="0 0 22 22" style="left:-2px;top:-2px;width:23px;height:23px"><path d="M4.5 11.5 L9 16 L18 6" fill="none" stroke="#e2e2e2" stroke-width="3.2"/></svg></div>
<div class="cb" style="left:772px;top:1160.5px;width:23px;height:23px;"></div>
<div style="left:778px;top:1166.5px;width:11px;height:11px;background:#d8d8d8"></div>
<div class="cb" style="left:1296px;top:1160.5px;width:23px;height:23px;"><svg width="100%" height="100%" viewBox="0 0 22 22" style="left:-2px;top:-2px;width:23px;height:23px"><path d="M4.5 11.5 L9 16 L18 6" fill="none" stroke="#e2e2e2" stroke-width="3.2"/></svg></div>
<div class="cbl" style="left:1451px;top:1160.5px;width:23px;height:23px;"></div>
<div style="left:608px;top:1670px;width:1995px;height:5px;background:#505050"></div>
<div style="left:608px;top:1675px;width:32.5px;height:38px;background:#464646"></div>
<div style="left:642px;top:1675px;width:1961px;height:38px;background:#212121"></div>
<div style="left:608px;top:1713px;width:1995px;height:2px;background:#6a6a6a"></div>
<div class="pan" style="left:2618.3px;top:265.3px;width:571.2px;height:1489.2px;border-radius:6px 6px 0 0"></div>
<div style="left:2618.3px;top:1753.5px;width:87.7px;height:34px;background:#333333;border:1px solid #5c5c5c;border-top:none;border-radius:0 0 6px 6px"></div>
<div style="left:2619.6px;top:1752.5px;width:85.1px;height:3.5px;background:#333333"></div>
<div style="left:2630.5px;top:355px;width:68.5px;height:3.5px;background:#1f8fe8"></div>
<div style="left:2628.5px;top:379px;width:29.5px;height:29.5px;border:2px solid #555;border-radius:50%"></div>
<div class="inp" style="left:2667px;top:374px;width:513px;height:39px;"></div>
<div style="left:2669px;top:376px;width:29px;height:35px;background:#333333"></div>
<div style="left:2697.5px;top:376px;width:2px;height:35px;background:#6c6c6c"></div>
<div style="left:2737px;top:376px;width:2px;height:35px;background:#6c6c6c"></div>
<div style="left:2683.5px;top:504px;width:495px;height:39px;background:#5e5e5e;border:1px solid #8a8a8a"></div>
<svg style="left:605px;top:306px;overflow:hidden" width="2002" height="674" viewBox="605 306 2002 674"><path d="M873.0,327.0 872.0,324.0 869.0,324.5 870.0,328.0ZM840.5,333.0 843.8,335.0 848.0,332.0 847.5,328.8 840.5,329.5ZM860.0,345.0 857.5,346.2 858.8,351.2 861.2,350.0ZM942.5,372.5 957.5,382.5 960.0,380.0 952.5,374.5 943.8,369.5 935.5,364.5 931.8,365.5 933.8,368.0ZM937.5,426.2 943.8,427.5 940.0,420.0 936.2,412.5 930.0,416.2 922.5,410.0 918.8,402.5 916.2,395.0 915.0,387.5 917.5,382.5 916.2,375.0 910.0,372.5 906.2,366.2 912.5,361.2 920.0,357.5 923.8,348.8 915.0,345.0 907.5,341.2 895.0,346.2 882.5,345.0 877.5,350.0 880.0,356.2 883.8,362.5 890.0,370.0 895.0,377.5 902.5,385.0 906.2,392.5 908.8,402.5 915.0,410.0 922.5,417.5 930.0,422.5ZM956.2,462.5 952.5,457.5 947.5,452.0 944.2,453.8 946.2,458.0 950.0,461.2 955.0,464.5ZM961.2,472.5 960.5,470.0 957.0,468.0 958.0,471.2ZM1430.0,471.2 1421.2,476.2 1423.8,482.5 1432.5,483.8 1440.0,480.0 1438.8,475.0ZM965.0,370.0 963.0,375.0 965.0,382.5 960.0,386.2 956.2,392.5 950.0,396.2 955.0,400.0 960.0,405.0 963.8,410.0 960.0,413.8 959.5,418.8 965.0,423.8 970.0,430.0 973.0,438.8 976.2,443.8 985.0,446.2 993.8,447.5 995.0,455.0 998.8,461.2 1006.2,470.0 1012.5,476.2 1020.0,482.5 1027.5,488.8 1028.8,497.5 1031.2,507.5 1035.0,517.5 1034.0,520.6 1033.5,520.0 1029.8,526.2 1031.0,531.8 1030.4,535.5 1032.9,541.1 1034.7,545.4 1039.1,544.2 1042.8,542.3 1045.3,539.8 1049.6,539.2 1052.1,539.8 1052.1,539.4 1053.8,543.8 1057.5,550.0 1063.8,557.5 1070.0,565.0 1072.5,573.8 1071.2,582.5 1075.0,591.2 1080.0,598.8 1081.2,607.5 1085.0,616.2 1083.8,625.0 1087.5,632.5 1095.0,633.8 1105.0,630.0 1111.2,625.0 1116.2,617.5 1120.0,610.0 1127.5,621.2 1132.5,627.5 1140.0,635.0 1147.5,632.5 1157.5,627.5 1170.0,623.8 1180.0,625.0 1190.0,622.5 1202.5,618.8 1215.0,617.5 1225.0,622.5 1235.0,627.5 1242.5,632.5 1250.0,627.5 1260.0,623.8 1270.0,618.8 1273.8,615.0 1277.5,622.5 1287.5,627.5 1293.8,635.0 1298.8,641.2 1301.2,635.0 1305.0,627.5 1310.0,622.5 1316.2,632.5 1322.5,638.8 1332.5,646.2 1340.0,653.1 1345.0,658.8 1350.0,655.0 1353.8,660.0 1360.0,662.5 1368.8,661.2 1377.5,658.8 1382.5,663.8 1390.0,666.2 1395.0,668.8 1392.5,675.0 1393.8,680.0 1387.5,681.2 1380.0,683.8 1370.0,685.0 1362.5,683.8 1355.0,681.2 1347.5,683.8 1340.0,688.5 1338.5,689.5 1340.0,691.2 1347.5,694.4 1353.8,697.5 1355.6,704.0 1353.5,705.8 1345.0,707.0 1338.8,704.5 1332.5,699.5 1328.0,694.5 1317.5,687.0 1302.5,678.8 1290.0,671.2 1277.5,668.8 1262.5,662.5 1245.0,657.5 1230.0,651.2 1222.5,643.8 1215.0,636.2 1205.0,633.8 1192.5,631.2 1180.0,634.5 1175.0,641.2 1171.2,650.0 1165.0,657.5 1155.0,661.2 1142.5,660.0 1130.0,655.0 1122.5,651.2 1120.0,660.0 1117.5,670.0 1112.5,680.0 1107.5,690.0 1100.0,697.5 1091.2,702.5 1082.5,702.5 1078.8,712.5 1081.2,718.8 1091.2,722.5 1100.0,730.0 1105.0,740.0 1107.5,750.0 1110.0,756.2 1117.5,757.5 1127.5,762.5 1137.5,768.8 1147.5,776.2 1155.0,783.8 1160.0,792.5 1163.8,802.5 1165.0,812.5 1163.8,822.5 1160.0,830.0 1152.5,837.5 1147.5,845.0 1145.0,855.0 1146.2,867.5 1150.0,875.0 1156.2,885.0 1157.5,892.5 1162.5,900.0 1163.8,907.5 1167.5,915.0 1175.0,920.0 1182.5,920.0 1187.5,927.5 1192.5,932.5 1197.5,926.2 1202.5,920.0 1197.5,915.0 1195.0,907.5 1196.2,897.5 1197.5,888.8 1202.5,882.5 1210.0,878.8 1220.0,877.5 1230.0,880.0 1231.2,887.5 1228.8,895.0 1232.5,901.2 1240.0,897.5 1245.0,905.0 1251.2,915.0 1256.2,925.0 1260.0,932.5 1266.2,942.5 1263.8,950.0 1265.0,960.0 1263.8,970.0 1260.6,983.0 1282.1,983.0 1281.2,972.5 1282.5,962.5 1285.0,955.0 1287.5,947.5 1290.0,940.0 1293.8,930.0 1295.0,922.5 1302.5,921.2 1312.5,920.0 1320.0,922.5 1327.5,930.0 1330.0,940.0 1332.5,947.5 1338.8,955.0 1342.5,965.0 1350.0,972.5 1353.5,983.0 1379.6,983.0 1380.0,967.5 1378.8,957.5 1376.2,947.5 1373.8,937.5 1376.2,930.0 1373.8,922.5 1370.0,912.5 1366.2,902.5 1362.5,892.5 1360.0,882.5 1356.2,872.5 1353.8,862.5 1348.8,852.5 1345.0,842.5 1341.2,832.5 1335.0,823.8 1330.0,815.0 1326.2,805.0 1322.5,795.0 1321.2,785.0 1325.0,775.0 1330.0,772.5 1335.0,777.5 1340.0,781.2 1347.5,786.2 1355.0,790.0 1362.5,796.2 1370.0,800.0 1376.2,802.5 1372.5,805.0 1367.5,810.0 1370.0,817.5 1373.8,815.0 1378.8,817.5 1382.5,822.5 1387.5,830.0 1392.5,827.5 1397.5,820.0 1405.0,817.5 1415.0,813.8 1425.0,810.0 1432.5,805.0 1441.2,801.2 1437.5,790.0 1433.4,787.9 1440.0,787.0 1437.5,781.2 1430.0,780.0 1432.9,787.7 1430.0,786.2 1420.0,782.5 1423.8,775.0 1422.5,767.5 1416.2,765.0 1411.2,770.0 1410.5,777.5 1402.5,772.5 1395.0,765.0 1388.8,755.0 1383.8,746.2 1387.5,737.5 1386.2,730.0 1380.0,726.2 1370.0,722.5 1363.8,716.2 1364.9,713.0 1365.0,713.1 1370.0,711.9 1376.2,712.5 1382.5,709.4 1390.0,705.6 1398.8,703.8 1407.5,703.1 1415.0,702.5 1420.0,700.0 1422.5,696.2 1427.5,692.5 1435.0,690.0 1442.5,689.4 1448.8,691.2 1450.0,696.2 1448.8,701.2 1451.2,705.0 1455.0,709.4 1458.8,708.1 1463.8,710.0 1468.8,715.0 1472.5,721.2 1478.8,727.5 1485.0,733.8 1490.0,741.0 1490.2,733.8 1494.5,740.0 1498.5,747.5 1501.5,755.0 1504.0,761.2 1506.5,755.0 1510.2,760.0 1515.2,761.2 1519.0,757.5 1517.8,750.0 1522.0,746.2 1523.1,739.6 1521.2,735.0 1518.8,727.5 1517.5,720.0 1515.0,712.5 1513.8,703.8 1512.5,695.0 1510.0,687.5 1508.8,680.0 1512.5,675.0 1517.5,670.0 1521.2,666.2 1520.0,660.0 1515.0,655.0 1508.8,650.0 1502.5,643.8 1493.8,640.0 1483.8,636.2 1475.0,633.8 1465.0,631.2 1457.5,626.2 1455.0,620.0 1450.6,611.2 1447.5,607.5 1442.5,602.5 1436.2,603.8 1427.5,602.5 1420.0,600.0 1415.0,596.2 1410.0,592.5 1407.5,587.5 1412.5,585.0 1411.2,580.0 1405.0,576.2 1395.0,573.8 1390.0,570.0 1386.2,575.0 1382.5,577.5 1377.5,573.8 1373.8,567.5 1375.0,560.0 1365.0,555.0 1355.0,550.0 1345.0,546.2 1337.5,542.5 1330.0,540.0 1320.0,538.8 1310.0,537.5 1301.2,536.2 1296.2,531.2 1298.8,527.5 1305.0,525.0 1313.8,526.2 1322.5,525.0 1330.0,526.2 1337.5,523.8 1345.0,520.0 1352.5,516.2 1360.0,512.5 1368.8,508.8 1373.8,503.8 1366.2,505.0 1360.0,502.5 1365.0,497.5 1369.5,491.2 1367.5,483.8 1362.5,480.0 1355.0,475.0 1346.2,472.5 1340.0,465.0 1338.8,456.2 1342.5,450.0 1351.2,445.0 1362.5,446.2 1372.5,451.2 1382.5,457.5 1388.8,465.0 1391.2,472.5 1386.2,477.5 1378.8,478.8 1373.8,482.5 1373.8,490.5 1378.8,493.0 1385.0,492.0 1395.0,487.5 1405.0,483.8 1412.5,478.8 1414.5,472.5 1410.0,465.0 1406.2,455.0 1402.5,445.0 1395.0,435.0 1387.5,425.0 1378.8,415.0 1370.0,407.5 1361.2,398.8 1353.8,390.0 1350.0,380.0 1347.5,367.5 1343.8,357.5 1335.0,351.2 1327.5,342.5 1322.5,332.5 1316.2,323.8 1307.5,315.0 1302.5,306.5 1302.5,303.0 992.5,303.0 992.5,306.5 986.2,312.5 980.0,314.5 982.0,323.8 985.0,330.0 988.0,341.2 982.5,345.0 975.5,346.2 972.5,353.8 971.2,363.8ZM1044.8,491.0 1047.3,493.5 1050.4,492.3 1053.5,491.6 1057.2,494.8 1059.7,497.9 1062.8,494.8 1065.9,495.4 1068.4,498.5 1072.1,499.7 1077.1,500.3 1080.8,498.5 1082.0,494.8 1085.8,493.5 1088.3,497.2 1090.7,501.0 1093.2,505.9 1091.4,510.9 1090.7,515.9 1093.2,520.8 1095.1,527.0 1093.2,527.0 1091.4,522.7 1088.9,520.8 1086.4,519.0 1083.9,519.0 1082.7,522.7 1081.4,525.2 1077.7,522.7 1074.6,519.6 1072.1,515.9 1069.0,514.6 1066.5,512.1 1062.8,513.4 1059.1,511.5 1056.0,514.6 1052.9,515.2 1050.4,514.6 1049.8,510.3 1047.3,512.1 1044.8,514.6 1041.1,514.6 1038.0,512.1 1035.5,509.7 1034.8,504.7 1039.2,504.1 1043.5,507.2 1044.8,507.8 1043.5,505.9 1039.8,502.8 1036.7,501.0 1034.8,497.9 1036.1,493.5 1039.2,489.8 1042.3,488.5ZM1006.8,572.8 1008.6,569.0 1010.5,570.9 1013.0,574.6 1014.8,577.1 1016.1,573.4 1019.2,574.0 1021.7,572.8 1023.5,569.7 1026.6,569.0 1027.3,564.7 1025.4,559.7 1027.3,554.8 1027.9,547.3 1029.1,541.1 1028.5,535.5 1030.4,531.1 1029.8,526.2 1024.2,528.0 1019.8,530.5 1016.1,532.4 1013.6,535.5 1010.5,539.8 1008.6,544.8 1006.8,550.4 1004.9,556.0 1003.0,562.2 1002.4,569.7 1000.9,575.9 1000.6,580.8 1004.3,576.5ZM1039.1,566.6 1039.7,563.4 1037.2,561.6 1033.5,562.8 1029.8,564.7 1029.4,567.8 1030.4,570.9 1033.5,574.6 1036.6,578.4 1039.1,579.0 1039.1,576.5 1036.0,574.0 1032.9,570.9 1033.5,569.0 1036.0,567.8ZM1052.7,568.4 1049.6,570.9 1048.4,577.1 1049.0,579.6 1050.9,579.0 1052.1,575.2 1055.2,573.4 1058.3,571.5 1061.4,569.0 1061.4,566.6 1057.1,567.2ZM1058.3,578.4 1058.9,574.6 1055.8,577.7 1052.1,583.3 1052.1,587.0 1053.4,587.0 1055.8,582.7ZM1025.4,580.8 1023.5,582.7 1023.5,585.2 1024.8,587.0 1026.6,585.8 1027.0,582.7ZM1037.2,597.6 1038.4,599.5 1040.9,598.9 1041.6,595.1 1039.7,594.5ZM1020.0,595.0 1015.0,593.8 1012.5,600.0 1015.0,607.5 1016.2,615.0 1018.8,622.5 1023.8,630.0 1028.8,630.0 1030.0,622.5 1023.8,616.2 1020.0,610.0 1021.2,603.8ZM972.5,656.2 980.0,657.5 981.2,650.0 982.5,640.0 985.0,650.0 990.0,655.0 992.5,665.0 1000.0,670.0 1010.0,668.8 1020.0,673.8 1027.5,677.5 1035.0,676.2 1038.0,668.8 1036.2,665.0 1031.2,655.0 1025.0,645.0 1017.5,632.5 1010.0,618.8 1006.2,610.0 1005.0,600.0 998.8,597.5 998.0,602.5 1000.0,610.0 998.8,617.5 992.5,622.5 986.2,627.5 983.8,621.2 977.5,620.0 973.8,627.5 970.0,637.5 967.5,650.0ZM1048.8,740.0 1055.0,742.5 1061.2,745.5 1062.0,741.2 1055.0,737.5 1048.8,733.8 1046.2,726.2 1037.5,722.5 1027.5,717.5 1021.2,710.0 1020.0,702.0 1013.8,703.8 1007.5,710.0 1007.5,716.2 1010.0,722.5 1016.2,730.0 1020.0,737.5 1026.2,743.8 1031.2,750.0 1036.2,755.0 1041.2,752.5 1042.5,743.8ZM1407.5,757.5 1411.2,758.0 1416.2,755.0 1413.8,751.2 1407.5,753.8ZM1062.5,832.5 1063.0,829.5 1059.5,828.8 1059.5,831.5ZM1380.0,831.2 1373.8,832.5 1378.8,837.5 1383.8,842.0 1387.5,842.5 1385.5,837.5ZM1161.5,926.2 1163.0,930.0 1166.2,925.0 1165.0,920.0 1162.0,921.2ZM1175.0,933.8 1173.8,927.5 1168.8,928.8 1171.2,936.2ZM1491.5,317.5 1497.8,327.5 1504.0,332.5 1510.2,327.5 1514.0,317.5 1511.5,307.0 1511.5,303.0 1482.4,303.0 1485.2,313.8ZM1467.5,332.5 1464.0,325.0 1452.5,321.2 1442.5,315.0 1437.5,306.5 1437.5,303.0 1417.3,303.0 1420.0,312.5 1417.5,320.0 1420.0,327.5 1430.0,327.5 1437.5,325.0 1445.0,330.0 1455.0,335.0 1464.0,337.5 1472.5,338.8 1474.0,336.2ZM1535.2,428.8 1532.0,436.2 1531.5,441.2 1535.2,438.8 1537.8,431.2ZM1559.5,441.2 1557.0,440.0 1556.0,446.2 1558.5,446.2ZM1522.8,440.0 1517.8,442.5 1515.8,448.8 1517.8,453.0 1522.8,452.5 1525.2,446.2ZM1497.8,462.5 1492.8,470.0 1491.5,475.0 1485.2,481.2 1487.8,483.8 1494.0,480.0 1501.5,472.5 1507.8,460.0 1502.8,455.0ZM1507.8,471.2 1502.8,472.5 1503.5,477.5 1508.5,477.0ZM1449.0,473.0 1452.0,480.0 1458.0,489.0 1466.0,495.5 1473.0,494.0 1479.0,486.0 1469.0,483.5 1464.0,480.0 1456.0,472.0 1451.0,469.0ZM1528.5,496.2 1527.8,489.5 1524.5,490.0 1525.2,497.5ZM1611.5,547.5 1607.8,542.5 1600.2,537.5 1591.5,533.8 1594.0,527.5 1595.2,521.2 1586.5,517.5 1580.2,513.0 1577.8,517.5 1576.5,523.8 1575.2,531.2 1581.5,533.8 1589.0,536.2 1591.5,541.2 1587.8,546.2 1594.0,552.5 1601.5,555.0 1609.0,552.5ZM1564.5,537.0 1561.0,537.5 1562.0,541.5 1565.2,540.5ZM1415.0,560.0 1420.0,565.0 1426.2,570.0 1430.0,576.2 1436.2,582.5 1441.2,587.5 1448.8,590.0 1453.8,595.0 1456.2,600.0 1455.0,606.2 1451.9,609.4 1455.0,618.8 1456.2,621.2 1465.0,620.0 1472.5,621.2 1482.5,625.0 1496.2,623.8 1508.8,623.8 1517.5,625.0 1520.0,630.0 1515.0,633.8 1520.0,635.0 1526.2,632.5 1527.5,640.0 1526.2,645.0 1530.0,650.0 1527.5,655.0 1532.5,656.2 1536.2,658.8 1538.8,663.8 1537.5,670.0 1540.0,675.0 1542.5,680.0 1550.0,677.5 1552.5,683.8 1557.5,688.8 1561.2,693.8 1565.0,697.5 1568.8,703.8 1571.2,698.8 1575.0,695.0 1580.0,696.2 1585.0,701.2 1588.8,706.2 1593.8,700.0 1596.2,691.2 1597.5,678.8 1598.1,667.5 1592.5,670.0 1585.0,669.4 1577.5,668.8 1570.0,666.2 1563.8,667.5 1558.8,663.8 1553.8,658.8 1548.8,652.5 1547.5,645.0 1545.0,637.5 1542.5,630.0 1540.0,622.5 1537.5,615.0 1540.0,607.5 1544.4,598.8 1540.0,593.8 1535.0,587.5 1531.2,581.2 1533.1,573.8 1527.5,570.6 1517.5,568.8 1507.5,571.2 1498.8,572.5 1487.5,568.8 1477.5,566.2 1474.4,560.0 1467.8,553.0 1464.0,553.8 1450.0,542.5 1440.0,532.5 1432.5,522.5 1426.2,512.5 1420.0,503.8 1410.0,501.2 1400.0,502.5 1388.8,506.2 1380.0,510.0 1373.8,517.5 1366.2,523.8 1357.5,528.8 1347.5,530.0 1341.2,533.8 1345.0,537.5 1353.8,536.2 1361.2,533.8 1370.0,531.2 1376.2,533.8 1382.5,540.0 1392.5,546.2 1402.5,550.0 1411.2,555.0ZM1546.2,701.2 1551.2,700.0 1555.0,695.0 1552.5,690.0 1545.0,692.5ZM1435.0,697.5 1427.5,698.8 1423.1,701.2 1421.2,706.2 1421.9,712.5 1424.4,717.5 1428.8,720.6 1433.8,718.1 1438.8,715.0 1440.0,710.0 1443.8,706.2 1447.5,702.5 1443.8,698.8ZM1425.0,747.5 1427.5,752.5 1432.5,757.5 1437.5,755.0 1442.5,750.0 1446.2,743.8 1443.8,738.8 1432.5,738.8 1423.8,741.2ZM1533.5,746.2 1530.2,742.5 1526.5,752.5 1525.2,761.2 1527.8,762.5 1531.5,755.0ZM1550.2,771.2 1550.8,778.8 1552.8,786.2 1559.0,782.5 1565.2,776.2 1570.2,768.8 1571.5,761.2 1566.5,756.2 1557.8,757.5 1551.5,765.0ZM1497.8,792.0 1494.5,792.5 1499.0,798.0 1501.5,797.0ZM1565.2,802.5 1566.5,807.5 1569.0,812.5 1567.0,820.0 1565.2,827.5 1570.2,826.2 1574.0,821.2 1579.0,815.0 1582.8,808.8 1576.5,802.5 1574.0,795.0ZM1438.8,822.5 1447.5,817.5 1446.2,815.0 1435.0,818.8 1425.0,822.5 1416.2,827.5 1418.8,830.0 1428.8,826.2ZM1591.0,853.8 1589.0,846.2 1580.2,846.2 1574.0,852.5 1574.0,860.0 1581.5,862.5 1587.8,862.5ZM1595.2,913.8 1589.0,917.5 1589.5,922.5 1592.8,926.2 1599.0,925.0 1601.5,917.5ZM1544.0,926.2 1546.5,928.0 1549.5,925.0 1547.8,921.2 1543.5,922.5ZM1574.0,928.8 1579.0,933.8 1580.2,941.2 1575.2,942.5 1571.5,937.5 1564.0,933.8 1560.2,938.8 1559.0,951.2 1566.5,950.0 1574.0,948.8 1584.0,947.5 1591.5,945.0 1593.5,937.5 1591.5,928.8 1584.0,933.8 1579.0,931.2ZM1687.8,342.5 1691.5,340.0 1690.2,346.2 1694.0,350.0 1699.0,357.5 1705.2,360.0 1709.0,352.5 1707.8,342.5 1711.5,332.5 1719.5,323.8 1719.0,312.5 1710.2,316.2 1704.0,322.5 1696.5,327.5 1692.8,321.2 1684.0,320.0 1674.0,318.8 1667.8,321.2 1660.2,322.5 1662.8,328.8 1665.2,335.0 1662.8,342.5 1664.0,351.2 1671.5,348.8 1677.8,348.8 1676.5,353.8 1681.5,358.0 1689.0,357.5 1685.2,350.0ZM1664.0,408.0 1656.5,402.0 1652.8,407.5 1651.5,413.8 1653.5,421.2 1659.0,416.2ZM1749.0,583.8 1744.0,580.5 1736.5,582.5 1739.0,588.8 1742.8,594.5 1749.0,593.8ZM1735.2,591.2 1731.5,592.5 1732.0,596.2 1735.2,596.2ZM1657.8,735.0 1652.8,726.2 1652.8,715.0 1644.0,715.0 1639.0,711.2 1631.5,705.0 1627.8,697.0 1619.0,698.8 1612.8,703.8 1615.2,712.5 1620.2,717.5 1626.5,722.5 1632.8,728.8 1637.8,735.0 1642.8,740.0 1646.5,747.5 1651.5,755.0 1655.2,752.5 1659.0,743.8ZM1609.0,770.5 1615.2,772.5 1622.8,773.8 1621.5,767.5 1616.5,766.2ZM1681.5,761.2 1671.5,761.2 1664.0,756.2 1656.5,757.5 1659.0,762.5 1664.0,766.2 1670.2,771.2 1676.5,776.2 1681.5,781.2 1687.8,785.0 1694.0,783.8 1697.8,777.5 1697.8,770.0 1691.5,765.0ZM1707.8,797.5 1706.0,802.5 1710.2,806.2 1716.5,806.2 1724.0,802.5 1730.2,798.8 1729.0,793.8 1720.2,790.0 1712.8,789.5 1707.8,792.5ZM1642.8,796.2 1640.2,802.5 1639.0,808.8 1642.8,815.0 1650.2,811.2 1654.0,805.0 1652.8,796.2 1649.0,790.0 1642.8,788.8ZM1695.2,805.0 1690.2,802.5 1691.5,808.0 1694.0,813.8 1700.2,812.5 1701.5,806.2ZM1601.5,835.0 1597.8,835.5 1598.2,838.0 1602.0,837.5ZM1779.0,858.8 1779.5,863.8 1782.8,865.5 1787.0,862.5 1785.2,857.0ZM1749.0,877.5 1751.0,866.2 1749.0,856.2 1745.2,850.0 1740.2,845.0 1734.0,848.8 1729.0,856.2 1724.0,857.5 1717.8,861.2 1712.8,867.5 1715.2,871.2 1716.5,878.8 1721.5,885.0 1725.2,892.5 1730.2,897.5 1739.0,893.8 1745.2,887.5ZM1684.0,861.2 1677.8,868.8 1676.5,873.8 1677.0,880.0 1681.5,886.2 1687.8,888.0 1694.0,885.0 1699.0,880.0 1702.8,871.2 1703.5,862.5 1701.5,855.0 1692.8,856.2ZM1670.2,876.2 1664.0,882.5 1662.8,887.5 1657.8,890.0 1656.5,893.8 1664.0,891.2 1667.8,892.5 1671.5,893.8 1670.2,887.5 1673.5,881.2 1674.0,873.8ZM1611.5,890.0 1614.0,897.5 1618.5,903.0 1622.8,898.8 1626.0,892.5 1620.2,886.2 1614.0,880.0 1607.0,877.5 1609.0,883.8ZM1754.5,891.2 1751.0,892.5 1751.5,896.2 1755.2,894.5ZM1754.0,902.5 1754.0,905.5 1760.2,906.2 1764.0,903.8 1760.2,899.5ZM1741.5,902.5 1737.8,903.8 1739.0,910.5 1742.0,908.8ZM1810.2,893.8 1805.2,900.0 1797.8,905.0 1789.0,911.2 1781.5,916.2 1774.0,917.5 1775.2,925.0 1780.2,926.2 1786.5,922.5 1794.0,918.8 1799.0,912.5 1806.5,907.5 1811.5,902.5 1817.8,902.0 1824.0,900.0 1816.5,895.0ZM1724.0,913.8 1725.2,917.0 1730.2,917.0 1734.5,912.5 1732.8,907.5ZM1602.8,931.2 1607.8,932.5 1611.5,928.8 1607.8,924.5 1602.2,926.2ZM1700.2,933.8 1705.2,938.8 1710.2,943.8 1715.2,949.5 1720.2,945.0 1721.5,937.5 1716.5,932.5 1711.5,927.5 1706.5,922.5 1700.2,926.2ZM1685.2,943.8 1689.0,937.0 1684.0,937.5 1676.5,942.5 1670.2,951.2 1674.0,952.5 1679.0,948.8ZM1650.2,960.0 1655.2,959.5 1654.0,955.0 1647.8,952.5 1641.5,947.0 1637.8,948.8 1639.0,952.5 1644.0,956.2ZM1864.0,511.2 1874.0,510.0 1881.5,507.5 1882.8,501.2 1889.0,502.5 1894.0,500.0 1892.8,492.5 1886.5,482.5 1881.5,472.5 1875.2,467.5 1869.0,457.5 1861.5,450.0 1864.0,440.0 1856.5,436.2 1851.5,431.2 1846.5,433.8 1836.5,432.5 1826.5,435.0 1827.8,442.5 1819.0,445.0 1811.5,447.5 1801.5,451.2 1790.2,451.2 1782.8,456.2 1779.0,465.0 1782.8,473.8 1789.0,478.8 1796.5,485.0 1806.5,486.2 1814.0,490.0 1819.0,492.5 1826.5,500.0 1834.0,502.5 1844.0,503.8 1854.0,508.8ZM1839.0,466.2 1845.2,470.0 1841.5,476.2 1834.0,478.8 1827.8,485.0 1822.8,488.8 1820.2,487.5 1822.8,475.0 1829.0,468.8ZM1879.0,486.2 1879.0,493.8 1875.2,492.5 1870.2,490.0 1869.0,485.0 1874.0,482.5ZM1847.8,596.2 1839.0,592.5 1832.8,591.2 1834.0,595.0 1841.5,598.8 1849.0,600.0ZM1789.0,650.8 1791.5,655.0 1791.7,653.0 1797.8,655.0 1804.0,661.2 1810.2,665.0 1812.8,658.8 1819.0,652.5 1824.8,646.7 1824.0,640.0 1829.0,632.5 1826.5,620.0 1825.2,610.0 1826.5,600.0 1827.8,593.8 1824.0,588.8 1816.5,585.0 1809.0,580.0 1796.5,582.5 1785.2,585.0 1781.0,591.2 1785.2,600.0 1791.5,605.0 1800.2,608.8 1801.5,617.5 1807.8,627.5 1801.5,636.2 1794.0,640.0 1792.6,642.0 1792.8,640.0 1786.5,647.5ZM1960.2,745.0 1968.5,743.8 1965.2,737.5 1967.8,731.2 1957.8,728.8 1950.2,732.5 1941.5,728.8 1931.5,727.0 1919.0,726.2 1909.0,730.0 1900.2,735.0 1894.0,741.2 1894.5,746.2 1897.8,751.2 1905.2,750.0 1914.0,746.2 1921.5,747.5 1925.2,752.5 1929.0,758.8 1937.8,757.5 1946.5,752.5 1954.0,747.5ZM1880.2,770.0 1875.2,766.2 1870.2,768.8 1875.2,773.8 1880.2,775.0 1882.8,780.0 1886.5,777.5 1889.0,770.0 1892.8,766.2 1890.2,762.5 1887.8,756.2 1884.0,761.2ZM1850.2,753.8 1841.5,760.0 1831.5,761.2 1822.8,762.5 1816.5,767.5 1810.2,775.0 1806.5,783.8 1807.8,786.2 1814.0,785.0 1821.5,781.2 1829.0,776.2 1837.8,775.0 1846.5,772.5 1854.0,766.2 1860.2,758.8 1863.2,751.2 1859.0,751.2ZM1952.8,793.8 1959.0,793.8 1960.2,788.8 1955.2,786.2 1950.2,788.8ZM1916.5,802.5 1917.8,807.5 1921.5,811.2 1925.2,810.0 1920.2,803.8ZM1899.0,820.0 1901.5,815.0 1896.5,808.8 1890.2,810.0 1890.2,820.0 1891.5,827.5 1896.5,827.5ZM1921.5,825.0 1927.8,826.2 1930.2,822.5 1924.0,818.8 1917.8,817.5ZM1976.0,825.0 1975.2,819.5 1972.8,820.0 1973.2,825.5ZM1939.0,858.8 1944.0,857.5 1942.8,850.0 1939.0,843.8 1932.8,838.8 1926.5,840.0 1929.0,847.5 1934.0,853.8ZM1951.5,865.0 1945.2,863.8 1946.5,868.8 1951.5,873.8 1950.2,880.0 1951.5,888.8 1957.8,891.2 1964.0,890.0 1970.2,886.2 1967.8,877.5 1962.8,873.8 1957.8,870.0ZM1875.2,877.5 1876.0,880.5 1881.5,881.2 1886.0,878.8 1881.5,876.2ZM1857.8,882.0 1851.5,883.8 1853.5,886.8 1859.0,885.0ZM1981.0,890.5 1985.2,892.0 1989.0,888.8 1985.2,884.5 1980.2,886.2ZM2007.8,906.2 2016.5,901.2 2012.8,896.2 2005.2,892.0 1996.5,895.0 1985.2,898.8 1975.2,905.0 1967.8,912.5 1961.5,920.0 1952.8,922.5 1951.5,928.8 1955.2,935.0 1959.0,938.8 1960.2,930.0 1966.5,925.0 1975.2,922.5 1985.2,920.0 1991.5,913.8 1999.0,908.8ZM2086.5,955.0 2091.5,960.0 2096.5,963.8 2097.8,955.0 2098.5,945.0 2096.5,936.2 2089.0,938.8 2081.5,947.5 2082.0,952.5ZM1997.8,956.2 1996.5,951.2 1990.2,947.5 1984.0,950.0 1983.5,955.0 1986.5,958.8 1992.8,960.0ZM1885.2,958.8 1880.2,952.5 1874.0,947.5 1869.0,948.8 1870.2,957.5 1874.0,963.8 1879.0,960.0ZM1861.5,972.5 1867.8,972.5 1867.8,967.5 1865.2,960.0 1860.2,956.2 1852.8,957.5 1854.0,962.5 1856.5,967.5ZM2138.0,980.0 2138.0,983.0 2153.8,983.0 2154.2,976.2 2150.5,973.0 2146.8,977.5ZM2011.5,975.0 2010.2,980.0 2010.2,983.0 2024.0,983.0 2024.0,980.0 2020.2,973.8Z" fill="#fccbe7" fill-rule="evenodd" stroke="none"/><path d="M1499,462 1502,463 1506,464M1716,864 1719,864 1722,867 1726,870M1701,856 1698,858 1696,863 1693,868 1688,870M1726,870 1724,875 1724,880 1721,884M1688,870 1690,875 1694,878 1696,882 1697,882M1688,870 1683,869 1678,869M1662,890 1664,885 1669,882 1673,878 1673,877M1739,589 1740,589 1744,587 1749,587M2153,975 2152,976 2151,982 2151,983M1709,942 1710,943 1715,943M1715,943 1721,939M1808,781 1811,780 1816,781 1820,780M1739,846 1739,846 1737,851 1736,855 1736,860 1734,864M1734,864 1738,867 1741,870 1745,872 1750,872M1786,860 1782,861 1780,862M1726,870 1730,868 1734,864M1741,905 1741,905 1738,905M1710,795 1710,792M1710,795 1715,796 1720,794 1726,796 1729,796M1601,835 1600,836 1601,837M1820,780 1825,773M1821,764 1824,768 1825,773M1692,766 1688,768 1683,771M1663,758 1667,760 1670,764 1674,766 1680,767 1683,771M968,647 971,647 975,651M975,651 977,657M975,651 979,647 981,642 982,640M983,640 985,638M985,638 982,632 979,627 977,622M1381,510 1380,510 1377,514M1380,492 1379,490M1361,499 1365,495 1368,493M1361,499 1360,502M1360,503 1360,503 1363,508 1362,511M1379,490 1375,489M1016,554 1018,549 1019,544 1019,539M1016,554 1012,557 1009,560 1004,561 1004,562M1016,533 1019,539M1037,578 1037,576M1005,574 1003,571 1003,570M1036,567 1034,565 1032,564M1025,560 1024,560 1021,556 1016,554M1093,495 1098,494 1103,496 1107,496 1112,496 1117,495M1093,495 1093,500 1093,505M1092,510 1092,511 1092,516M1092,516 1096,517 1101,519 1104,522M1104,522 1109,520 1112,516 1113,511 1117,509M1117,509 1119,503 1119,496M1119,496 1117,495M1051,571 1055,573M1652,747 1656,749M1652,747 1651,742 1651,737 1652,732 1652,727 1650,722 1652,717 1652,715M1531,578 1525,577 1519,575M1519,575 1517,570 1517,569M1531,578 1530,584 1529,589 1527,594 1526,600M1526,600 1531,605M1540,606 1536,606 1531,605M1498,327 1501,328 1504,332M1470,334 1468,338M1397,512 1399,516 1398,521 1398,526M1397,512 1401,509 1404,506M1404,506 1413,506M1413,506 1416,510 1420,515 1425,517M1398,526 1403,528 1408,530 1411,535 1416,536M1416,536 1419,536M1425,517 1423,522 1423,527 1421,532 1419,536M1415,503 1413,506M1425,517 1428,517M1171,730 1166,733 1162,736 1157,739 1152,741M1171,730 1174,734 1180,737 1183,741M1150,746 1152,741M1150,746 1154,748 1157,751 1161,754 1164,758 1167,761M1167,761 1169,756 1174,753 1176,748 1180,745 1183,741M1205,731 1213,731M1205,731 1201,735 1199,740 1195,743M1222,759 1224,754 1223,748 1225,743M1220,759 1216,759 1211,757 1207,755 1203,753 1198,753M1198,753 1197,748 1195,743M1225,743 1221,739 1217,736 1213,731M1684,943 1680,940M1653,959 1652,956 1652,954M1713,947 1715,943M1687,940 1684,943M1856,883 1853,885 1853,886M1947,868 1951,869 1956,870 1958,871M1954,890 1957,886 1957,881 1958,875 1960,872M1832,771 1825,773M1832,771 1833,767 1838,764 1840,761M1622,899 1621,898 1621,894M1621,894 1623,889M1662,890 1658,890M1652,747 1647,747M1663,758 1660,762 1660,763M1640,806 1644,808 1646,813M1928,844 1929,843 1934,842 1935,841M1020,474 1018,478 1017,480M1020,474 1015,473 1011,474M922,416 922,416 926,413M1404,506 1405,502M1405,484 1408,481 1408,481M1385,508 1390,511 1397,512M1379,490 1383,487 1387,484 1391,482M1399,486 1395,484 1391,482M1361,499 1355,496 1350,493M1375,489 1374,486M1350,493 1349,487 1348,482 1348,476M1355,475 1354,476 1348,476M1478,486 1474,488 1470,488 1465,487 1461,488 1457,487M1673,319 1672,322 1673,328M1699,336 1695,337 1690,336 1685,338M1699,336 1702,331 1705,327 1707,322 1712,319 1713,315M1673,328 1677,331 1681,335 1685,338M1037,567 1038,564 1038,563M1019,539 1024,540 1029,539M1033,541 1034,541 1039,540M1039,540 1041,543M1062,555 1065,553 1066,549M1057,548 1061,548 1066,549M1095,558 1090,558 1086,560 1082,561 1077,562M1095,558 1093,553 1094,548 1093,543M1093,543 1089,539 1083,539 1078,537 1072,535M1077,562 1073,558 1071,552 1066,548M1072,535 1071,540 1069,544 1066,548M1077,562 1077,567 1077,572M1077,572 1072,576M1117,540 1122,539 1126,539 1131,537M1117,540 1112,537 1107,533M1107,533 1107,528 1104,522M1117,509 1121,512 1126,514 1128,519 1132,521 1135,525M1135,525 1132,531 1131,537M1024,628 1026,630M1015,631 1011,636M1011,636 1012,641 1010,646 1011,651 1010,656M1010,656 1014,659 1018,662 1022,665 1024,670 1028,673 1032,676M1035,676 1032,676M1028,621 1027,624 1024,628M1000,610 1003,614 1006,619 1010,622 1012,627 1015,631M985,638 990,637 995,637 1000,635 1005,637 1011,636M994,666 996,664 1002,663 1005,657 1010,656M1850,507 1849,503M1846,504 1849,503M1636,710 1633,710 1629,714M1625,721 1627,718 1629,714M1571,762 1566,762 1561,761 1556,761 1556,761M1526,761 1528,758 1529,759M1531,605 1529,610 1524,613 1522,618 1519,623M1519,623 1522,625M1522,625 1527,627 1532,629 1536,633 1542,633M1699,336 1702,340 1705,343 1708,345M1685,338 1684,343 1684,349 1682,354 1681,357M1386,840 1385,839 1380,837 1377,835M1397,821 1395,818 1394,813M1394,813 1389,814 1384,817 1380,819M1376,832 1376,834M1353,861 1353,861 1347,864 1343,867M1343,868 1346,872 1349,875 1351,880M1351,880 1356,881 1359,882M1338,901 1336,896 1334,892 1330,888 1326,884M1338,901 1333,904 1328,906 1323,911M1323,911 1319,907 1317,902 1312,900 1309,896M1309,896 1313,892 1315,887 1319,884M1319,884 1326,884M1343,868 1340,871 1336,874 1333,878 1329,880 1326,884M1345,902 1346,898 1347,893 1349,889 1349,884 1351,880M1345,902 1338,901M1296,871 1296,865 1293,859M1296,871 1302,872 1307,871 1313,872M1293,859 1297,856 1301,853 1306,850 1309,846 1313,843M1313,872 1315,867 1317,863 1320,859M1320,859 1318,854 1317,848 1314,843M1341,865 1343,867M1341,865 1335,864 1330,863 1325,860 1320,859M1319,884 1317,880 1316,875 1313,872M1172,883 1168,884 1163,885 1158,884M1172,883 1176,886 1178,891M1165,909 1167,909 1172,911M1172,911 1174,906 1176,901 1177,896 1178,891M1157,888 1158,884M1158,884 1155,881 1153,877 1150,874M1023,712 1020,711 1015,712M1015,712 1016,707 1015,704M1015,712 1011,715 1009,718M1113,707 1112,712 1110,717 1110,723 1106,727 1106,733M1113,707 1118,709 1121,714 1126,716 1130,719M1130,719 1128,723 1127,728 1127,733 1126,738M1126,738 1120,738 1114,737 1109,736M1106,733 1109,736M1150,746 1143,749M1152,741 1151,736 1147,731 1146,726 1145,721 1143,716M1143,716 1136,716 1130,719M1143,749 1137,746 1130,744M1130,744 1126,738M1234,764 1234,769 1235,774 1234,779 1235,784M1234,764 1239,763 1243,760M1235,784 1239,786 1243,788 1247,791M1243,760 1248,761 1252,763 1255,767 1260,768M1260,768 1257,772 1255,777 1251,781 1250,787 1247,791M1130,744 1128,748 1124,751 1121,754 1117,757 1117,757M1109,736 1106,740 1108,745 1107,746M1500,795 1498,797M2086,943 2088,943 2093,943 2097,946 2098,946M1953,731 1956,733 1960,737 1965,737M1937,754 1939,749 1941,746 1943,741 1946,738 1949,734 1950,733M1937,754 1939,757M1937,754 1932,753 1928,751 1924,748 1921,744 1915,743 1911,740M1925,727 1923,728 1918,731 1914,732M1911,740 1914,732M1914,732 1913,729M1923,825 1927,822 1927,821M1832,771 1836,774 1838,775M1700,806 1696,809 1693,811M1683,771 1683,776 1683,782M1710,795 1708,796M1391,482 1391,478 1392,473 1391,468M1272,447 1270,452M1272,447 1279,443M1294,464 1295,458 1296,452M1294,464 1289,463 1283,466 1278,465M1279,443 1283,446 1288,447 1291,451 1296,452M1278,465 1276,461 1274,456 1270,452M1313,472 1315,466 1320,463 1323,459M1313,472 1317,475 1318,481 1321,484 1325,488M1323,459 1328,461 1331,466 1336,467 1340,471 1344,474M1325,488 1329,485 1332,482 1336,480 1339,476 1344,474M1323,453 1318,451 1312,451 1307,449 1301,448M1323,453 1323,459M1300,474 1307,474 1313,472M1300,474 1298,469 1294,464M1301,448 1296,452M1272,447 1268,443 1264,440 1260,437 1257,433M1270,452 1266,454 1261,457 1257,460 1252,462M1252,462 1250,460M1250,460 1249,456 1248,451 1247,447 1246,442 1243,438M1257,433 1253,435 1248,437 1243,438M1653,410 1654,412 1653,417 1654,420M1653,407 1657,406 1660,405M1673,328 1668,329 1664,331M1107,533 1102,536 1098,539 1093,543M1078,524 1078,525 1074,529 1072,534M1039,540 1040,536 1043,532 1043,527 1045,523 1048,520M1072,534 1069,531 1064,530 1060,527 1056,525 1052,522 1048,520M1035,517 1037,515 1042,515 1047,516M1048,520 1047,516M1029,497 1030,496 1033,493M1033,493 1035,497M1047,516 1047,513M1209,586 1213,591M1209,586 1205,585 1200,587 1195,586 1191,583 1186,584M1213,591 1209,594 1207,599 1204,603 1199,605 1196,609 1192,612M1192,612 1189,608 1187,603 1184,599 1183,594 1180,590M1186,584 1180,590M1164,605 1167,600 1171,596 1174,591M1164,605 1167,610 1171,614 1175,618M1175,618 1181,616 1186,616 1192,613M1174,591 1180,590M1236,579 1231,581 1229,586 1223,587 1220,591M1236,579 1237,572M1220,591 1213,592M1209,586 1209,579 1210,572M1237,572 1233,568 1228,565 1224,562 1219,561M1210,572 1212,567 1217,565 1219,561M1237,572 1240,568 1244,565 1248,563M1248,563 1246,557 1246,551M1246,551 1240,552 1235,549 1230,549 1225,550M1225,550 1219,555M1219,555 1219,561M1143,521 1148,521 1153,522M1143,521 1141,516 1141,511 1140,506 1141,501M1153,522 1156,518 1159,515 1162,512 1163,507M1141,501 1146,499 1151,499 1156,498M1163,507 1158,503 1156,498M1161,533 1160,537 1156,541 1152,544 1150,549M1161,533 1158,529 1157,525 1153,522M1135,525 1143,521M1131,537 1136,541 1139,547M1139,547 1144,549 1150,549M1119,496 1124,494 1131,493M1131,493 1135,498 1141,501M1394,813 1395,811M1395,811 1390,808 1389,802 1385,799 1382,795 1379,791M1373,815 1370,812 1368,810M1372,801 1373,800 1375,795 1379,791M1293,491 1297,495 1303,496 1307,498 1312,502M1293,491 1294,486 1297,482 1298,478 1300,474M1325,488 1323,497M1312,502 1317,498 1323,497M1350,493 1346,495 1342,498 1339,503 1335,505M1348,476 1345,474M1323,497 1326,501 1331,503 1335,505M1353,516 1350,513 1344,512 1340,509 1336,506M1121,658 1121,659 1127,660M1115,679 1119,677 1124,676M1124,676 1126,671 1125,665 1127,660M1127,660 1131,658 1136,659 1137,658M1291,528 1291,533 1290,537 1288,542 1286,546 1287,550 1285,555M1285,555 1277,556M1277,556 1274,552 1269,550 1266,546 1263,542M1291,528 1286,529 1282,528 1277,528 1273,527 1268,526M1268,526 1265,528M1263,542 1262,537 1264,533 1265,528M1020,474 1022,473M1033,493 1034,489M1034,489 1032,484 1028,481 1026,476 1022,473M1047,513 1050,512M1049,484 1044,485 1040,489 1034,489M1049,484 1055,488M1055,488 1056,493M1052,448 1050,453 1049,457 1049,462 1048,467M1052,448 1047,446 1042,446 1038,442M1048,467 1044,466 1039,466 1035,464 1030,464 1026,465M1038,442 1035,447 1034,452 1030,456 1029,461 1026,465M1049,484 1049,479 1049,473 1049,468M1022,473 1025,466M996,456 996,453M1025,466 1023,461 1018,459 1017,454 1014,450 1010,448M996,453 1001,450 1005,450 1010,448M1038,442 1035,435M1035,435 1030,437 1024,435 1019,435 1014,437M1010,448 1013,443 1014,437M1061,430 1060,434 1060,439 1058,443 1055,447M1061,430 1057,425 1051,421M1052,448 1055,447M1035,435 1038,428M1051,421 1047,424 1042,424 1038,428M1475,634 1474,639 1476,644M1476,644 1484,645M1488,638 1484,645M1477,617 1482,618 1486,618M1477,617 1474,620 1473,621M1486,618 1490,624M1507,585 1502,584 1498,581 1493,580M1507,585 1509,589 1509,593 1511,598M1493,580 1490,585 1488,590 1486,596M1486,596 1490,601 1494,606M1511,598 1508,603 1504,607M1504,607 1499,607 1494,606M1519,575 1515,578 1511,581 1507,585M1491,570 1490,574M1490,574 1493,580M1526,600 1521,599 1516,600 1511,598M1468,599 1473,597 1477,596 1482,598 1486,596M1468,599 1471,603 1473,608 1476,612 1477,617M1486,618 1490,614 1492,610 1494,606M1519,623 1511,622M1511,622 1510,616 1506,612 1504,607M1511,622 1509,624M1464,573 1467,578M1464,573 1458,572 1452,573 1446,571M1467,578 1466,583 1466,588 1465,593M1465,593 1460,594 1456,592 1451,591 1449,590M1446,571 1445,577 1443,582 1442,588M1490,574 1485,574 1481,575 1477,577 1472,578 1467,578M1467,598 1465,593M1578,518 1581,518 1586,520 1591,520M1590,538 1592,535 1593,535M1797,452 1794,454 1789,455 1787,460 1782,461M1815,461 1811,457 1807,455 1803,453 1799,452M1815,461 1819,458 1822,455 1823,450 1826,447 1830,445 1833,441 1835,437M1835,433 1835,437M1781,468 1780,466 1782,461M1829,501 1828,498 1827,493 1825,488 1825,487M1822,478 1821,473M1800,485 1800,485 1804,483 1809,481 1811,477 1816,475 1819,472M1819,472 1821,473M1815,461 1816,467 1819,472M1855,493 1855,489 1854,484 1853,480 1853,475 1852,470M1855,493 1860,493 1865,493 1870,495 1874,495M1874,495 1877,493M1879,489 1880,487 1883,483 1885,481M1879,471 1877,469 1872,467 1867,466 1862,465 1857,462M1852,470 1855,467 1857,462M1849,503 1853,499 1855,493M1821,473 1824,473M1845,471 1847,470 1852,470M1882,506 1881,504 1878,500 1874,495M1865,454 1864,455 1860,458 1857,462M1835,437 1839,440 1842,444 1845,448 1848,451 1851,455 1853,459 1857,462M1447,318 1446,320 1442,323 1438,325M1437,325 1432,322 1427,320 1423,317 1420,314M1419,536 1423,540 1427,543M1427,543 1432,544 1437,542M1437,542 1442,539 1444,537M1437,542 1442,546 1444,552 1449,555M1449,555 1454,555 1459,553 1461,552M1464,573 1465,567 1468,562 1468,556M1445,569 1445,564 1446,559 1449,555M1445,569 1446,571M1468,556 1466,554M1341,865 1342,860 1341,855 1341,851 1341,846 1341,842M1345,842 1341,842M1314,843 1319,841 1325,840 1330,838 1335,836M1341,842 1335,836M1284,854 1289,857 1293,859M1284,854 1280,858 1275,860 1270,863 1265,864M1264,865 1267,870M1296,871 1294,875 1292,879 1289,883M1289,883 1284,881 1281,877 1275,875 1271,873 1267,870M1299,897 1297,893 1293,891 1289,888M1299,897 1304,895 1309,896M1289,883 1289,888M1270,819 1274,816M1270,819 1270,824 1270,830 1268,836M1274,816 1278,819 1282,821 1287,822 1292,823M1268,836 1272,839 1278,838 1283,842M1283,842 1288,838 1292,834 1296,829M1296,829 1292,823M1255,845 1256,850 1259,855 1262,859 1265,864M1255,845 1260,843 1264,839 1268,836M1284,854 1284,848 1283,842M1313,843 1310,838 1307,833M1307,833 1301,830 1296,829M1274,816 1276,811 1276,806 1278,801 1278,796M1292,823 1293,818 1294,813 1296,809 1298,805M1298,805 1294,804 1290,801 1287,798 1282,797 1278,796M1251,794 1254,798 1254,803 1257,807 1259,811 1259,816M1251,794 1256,795 1262,793 1267,793 1272,795 1277,795M1259,816 1264,818 1270,819M1323,911 1322,915 1320,920 1320,922M1327,929 1328,930 1332,931M1332,931 1338,928 1344,926M1344,926 1345,921 1344,917 1344,912 1345,907 1346,903M1371,915 1367,916M1364,898 1362,901 1358,904M1367,916 1365,911 1361,908 1358,904M1346,903 1352,903 1358,904M1238,878 1242,882 1244,887 1247,892M1238,878 1238,876M1238,876 1243,874 1247,873 1252,871 1256,869 1260,867 1264,865M1267,870 1264,874 1265,880 1265,885 1261,890 1262,895M1262,895 1256,895 1251,895 1247,892M1176,917 1180,920M1183,920 1186,920M1176,917 1173,919M1186,920 1188,926 1189,928M1172,911 1176,917M1115,679 1112,684 1111,689 1111,694 1109,699M1102,696 1106,696 1109,699M1027,744 1030,745 1035,743 1039,741 1044,740M1046,726 1046,730 1044,735 1044,740M1171,730 1171,726M1205,731 1201,726 1200,720M1183,741 1189,741 1195,743M1200,720 1195,719 1191,718 1187,715M1171,726 1174,722 1179,722 1182,717 1187,715M1177,869 1175,864M1177,869 1183,869 1188,870 1193,871 1198,873 1203,874M1175,864 1177,859 1180,855 1183,851 1184,847M1184,847 1188,851 1192,852 1196,855 1200,859 1205,859 1208,863M1203,874 1205,868 1208,863M1172,883 1172,878 1175,873 1177,869M1150,874 1153,869 1158,865 1160,860M1160,860 1166,860 1171,861 1175,864M1229,815 1226,819 1222,822 1219,826 1215,830 1213,835M1230,814 1235,818 1239,823 1243,826M1213,835 1215,840M1215,840 1220,841 1225,843 1230,843 1235,844 1239,846M1243,826 1245,831 1246,836 1246,842M1246,842 1239,846M1235,784 1230,783 1226,786 1221,786 1216,786M1247,791 1244,795 1241,799 1239,803 1236,807 1233,811 1230,814M1217,806 1219,801 1216,796 1216,791 1216,786M1217,806 1221,809 1225,812 1229,815M1247,791 1251,794M1259,816 1256,819 1252,821 1247,823 1243,826M1233,866 1234,861 1236,856 1237,850 1239,846M1233,866 1228,866 1224,864 1219,862 1215,862 1210,861M1210,861 1211,856 1213,851 1213,845 1215,840M1255,845 1246,842M1238,876 1236,871 1233,866M1143,749 1143,754 1140,758 1140,763M1140,763 1137,767 1136,767M1802,910 1798,909 1794,908M1781,917 1780,918 1777,921 1775,924M1866,972 1866,971 1866,966 1866,964M2016,983 2016,980 2011,978M1800,582 1802,584 1804,589M1804,589 1803,594 1802,599 1800,604 1799,608M1804,589 1808,587 1814,588 1818,586M1847,596 1845,596 1840,596 1838,596M1903,746 1898,747 1895,747M1903,746 1904,750M1872,768 1873,771M1911,740 1907,742 1903,746M1589,858 1589,858 1585,861 1584,862M908,400 910,400 915,401 918,400M956,401 957,400 959,395M956,393 959,395M952,378 955,378 956,377M964,374 968,374 973,373M959,395 964,396 968,395 973,397 978,395M973,373 976,377 979,380M979,380 979,385 978,390 978,395M1088,395 1084,397 1079,399 1076,402 1072,405M1088,395 1092,397 1094,402 1099,405M1076,418 1081,421 1087,421 1092,421 1097,423M1076,418 1074,414 1072,410 1072,405M1099,405 1097,409 1096,414 1096,419 1097,423M1088,395 1087,389 1089,383M1089,383 1092,380 1096,378M1118,391 1114,388 1110,385 1104,384 1100,382 1096,378M1118,391 1115,398M1099,405 1103,401 1109,400 1115,398M1391,468 1395,466 1400,466 1405,465 1409,462M1345,474 1345,472M1326,448 1323,453M1326,448 1331,447 1336,445 1340,443 1345,440M1349,446 1348,445 1345,440M1252,462 1252,467 1254,471M1234,485 1233,479 1232,474 1229,469 1229,464M1234,485 1238,487M1250,460 1245,462 1239,462 1234,463 1229,464M1254,471 1252,475 1246,476 1244,480 1242,484 1238,487M900,382 900,381 903,378 905,373 906,369 907,368M923,349 919,353 915,357 911,360M950,373 950,374 950,377M1155,628 1154,626 1152,622 1149,618 1145,614 1144,609M1126,619 1130,616 1135,613 1139,611 1144,609M1164,605 1159,606 1155,604 1150,604 1146,606M1161,579 1158,583 1155,587 1150,589 1147,593 1143,596M1162,579 1167,582 1169,588 1174,591M1143,596 1145,601 1146,606M1172,624 1173,623 1175,618M1146,606 1144,609M1171,557 1173,565M1171,557 1175,553 1177,548 1180,543M1173,565 1178,568 1184,570M1180,543 1187,543 1193,546M1193,546 1194,552 1194,558 1194,563M1184,570 1189,567 1194,563M1154,555 1160,556 1165,556 1171,557M1154,555 1153,560 1152,564 1151,569M1151,569 1153,573 1159,575 1161,579M1162,579 1166,575 1168,569 1173,565M1154,555 1150,549M1174,534 1178,538 1180,543M1174,534 1168,534 1161,533M1186,584 1184,580 1185,575 1184,570M1201,542 1196,544 1193,546M1201,542 1205,545 1209,546 1213,549 1216,552 1219,555M1210,572 1206,569 1201,568 1198,566 1194,563M1131,493 1133,489 1136,485 1135,480 1139,477M1156,498 1157,492 1157,487 1159,482 1162,477M1161,476 1156,476 1150,476 1144,475 1139,477M1174,534 1176,529 1177,525 1181,522 1182,517M1206,529 1202,521M1206,529 1204,533 1202,538 1201,542M1202,521 1197,520 1192,519 1187,517 1182,517M1163,507 1168,507 1173,508 1179,508M1179,508 1182,512 1182,517M1213,696 1208,699M1213,696 1216,700 1221,701 1224,705 1228,708M1213,731 1217,727 1220,723 1225,721 1228,717M1200,720 1202,716 1202,711 1205,708 1205,703 1208,699M1228,708 1227,712 1228,717M1213,696 1213,691 1214,687 1214,682M1214,682 1219,681 1223,679 1227,678 1231,676 1236,676M1236,676 1237,681 1239,685 1241,689 1244,693 1244,698M1228,708 1232,705 1236,703 1240,700 1244,698M1236,676 1241,669M1241,669 1246,667 1251,666M1261,690 1259,694 1255,697 1252,700M1261,690 1259,686 1259,681 1257,677 1256,673 1254,668M1254,668 1251,666M1244,698 1252,700M1435,804 1433,802 1428,799 1425,795 1423,790M1423,790 1427,785 1427,785M1398,526 1393,528 1390,533 1385,536M1416,536 1413,540 1409,543 1405,546 1403,550M1386,542 1387,541 1385,536M1373,519 1374,521 1373,525 1375,530M1385,536 1380,532 1375,530M1375,530 1371,531M1351,530 1355,534 1356,535M1241,669 1237,666 1235,662 1231,659 1229,654 1226,651M1251,666 1253,662 1253,660M1227,648 1226,651M1223,621 1226,619 1232,620 1238,618M1246,630 1245,627 1243,622M1238,618 1243,622M1221,620 1220,617 1219,612 1216,607 1217,601 1214,597 1213,592M1220,591 1225,593 1229,598 1233,600 1238,603M1238,618 1238,613 1239,608 1238,603M1427,543 1428,549 1426,553 1426,558 1425,563M1419,563 1420,563 1425,563M1445,569 1440,567 1435,568 1430,567 1426,565M1361,553 1364,556 1366,561M1373,561 1366,561M1261,690 1266,691 1271,691 1276,690 1281,690M1254,668 1259,669 1263,670 1268,670 1272,668 1277,670M1277,670 1278,675 1279,680 1280,685 1281,690M1260,716 1259,712 1256,708 1254,704 1252,700M1260,716 1265,716 1269,712 1275,712 1280,710M1280,710 1281,704 1286,701 1287,695M1281,690 1287,695M1303,704 1304,709 1305,714 1308,718 1309,722M1303,704 1299,701 1294,699 1290,695M1280,710 1282,714 1284,719 1285,724 1288,729M1309,722 1305,724 1300,725 1295,727 1291,730M1291,730 1288,729M1290,695 1287,695M1296,752 1296,747 1293,744 1293,739 1293,734 1291,730M1296,752 1301,749 1307,750 1312,748 1317,747 1321,744M1309,722 1314,723 1318,726M1321,744 1320,738 1319,732 1318,726M1303,704 1308,701 1313,701 1318,699 1323,697M1323,697 1324,702 1327,706 1332,709 1334,714M1318,726 1322,724 1326,720 1330,718 1334,714M1260,768 1267,765M1277,795 1278,790 1282,786 1282,780M1267,765 1272,768 1273,774 1279,776 1282,780M1266,740 1267,745 1269,750 1270,755M1266,740 1270,738 1274,735 1280,735 1284,731 1288,729M1270,755 1276,755 1281,755 1286,754 1291,752 1296,752M1248,546 1253,546 1257,543 1263,542M1248,546 1245,542 1245,536 1242,531M1265,528 1260,526 1254,524 1248,523M1248,523 1245,527 1242,531M1206,529 1211,529 1216,528 1221,528 1226,530M1211,504 1210,508 1207,512 1203,516 1202,521M1211,504 1217,505 1222,509 1227,511M1227,511 1226,515 1225,520 1227,525 1226,530M1246,551 1248,546M1225,550 1224,545 1227,541 1225,536 1227,531M1242,531 1237,532 1232,530 1227,531M1227,531 1226,530M1055,447 1060,449 1065,449 1069,453M1049,468 1055,468 1060,468 1066,469 1071,468M1071,468 1071,463 1068,458 1069,453M1061,430 1069,429M1069,429 1072,432 1074,436 1077,439 1080,443M1069,453 1072,449 1077,446 1080,443M1069,429 1071,422 1076,418M1098,424 1097,429 1096,434 1092,438 1091,443M1080,443 1086,444 1091,443M1455,611 1452,610M1448,609 1445,608 1440,608M1455,611 1457,615 1458,620 1458,621M1457,626 1454,627 1449,630 1444,630 1439,633M1439,633 1436,630 1435,626 1433,621 1431,617M1440,608 1435,612 1431,617M1440,603 1440,608M1467,598 1464,603 1459,607 1455,611M1542,633 1541,640M1541,640 1544,645 1547,648 1548,648M1492,664 1486,662M1492,664 1492,659M1489,656 1485,661M1489,656 1492,659M1394,434 1393,436 1394,441M1379,418 1376,422 1375,427 1372,431M1391,443 1394,441M1391,443 1385,442 1381,439 1375,438M1375,438 1372,431M1367,406 1370,411 1375,415 1379,418M1400,443 1394,441M1355,410 1356,416 1356,422 1356,427M1355,410 1362,405M1362,405 1367,406M1356,427 1361,428 1367,429 1372,431M1386,461 1386,458 1387,452 1389,448 1391,443M1368,449 1370,448 1372,443 1375,438M1356,427 1352,432 1349,436 1345,439M1332,348 1332,349 1327,349M1327,349 1323,346 1319,343 1315,340M1322,332 1321,333 1318,337 1315,340M1362,405 1363,401M1355,410 1350,409 1344,408 1340,406M1345,439 1342,435 1338,432 1337,426 1334,422 1330,418M1330,418 1333,414 1335,409 1340,406M1327,349 1328,354 1325,359 1326,364M1347,366 1346,368 1342,371M1326,364 1331,365 1336,368 1342,371M1351,383 1348,382 1342,382M1340,406 1338,401 1335,397 1334,393M1334,393 1336,388 1339,385 1342,382M1342,382 1341,376 1342,371M1329,813 1328,816M1328,816 1331,820 1333,825 1337,829M1379,790 1375,786 1371,784 1366,782 1362,778M1362,778 1360,783 1357,787 1355,790M1335,836 1337,829M1307,833 1309,829 1312,825 1313,820 1317,816M1317,816 1322,817 1328,816M1309,920 1309,920 1303,919 1301,915 1296,912M1291,935 1289,935M1289,935 1288,930 1286,925 1285,920M1285,920 1290,915 1296,912M1299,897 1298,902 1297,907 1296,912M1358,983 1356,979M1356,979 1353,979M1283,919 1281,915 1278,911 1275,907 1273,903 1270,899M1283,919 1277,921 1272,923 1267,926M1267,926 1262,921 1256,920M1256,920 1258,915 1258,910 1260,906 1265,903 1265,898M1270,899 1265,898M1289,888 1284,890 1281,895 1274,895 1270,899M1285,920 1283,919M1268,946 1269,941 1266,936 1266,931 1267,926M1289,935 1287,941 1282,945M1269,948 1274,948 1278,947 1282,945M1268,946 1265,946M1262,895 1265,898M1247,892 1243,896 1242,899M1147,848 1148,847 1152,844M1152,841 1152,844M1160,860 1156,855 1156,849 1152,844M1081,707 1082,708 1086,711 1091,713M1091,713 1090,718 1090,722M1109,699 1112,705M1112,706 1107,708 1102,711 1096,711 1091,713M1106,733 1102,733M1192,614 1197,617 1201,619M1145,661 1147,663 1151,666 1152,671M1152,671 1157,668 1161,665 1166,661 1171,659M1171,659 1170,654 1170,652M1192,614 1193,619 1192,621M1191,632 1191,634 1192,639M1177,640 1177,640 1182,640 1187,638 1192,639M1209,635 1209,636 1204,638 1202,642 1199,646M1192,639 1195,643 1199,646M1143,716 1146,713M1171,726 1167,722 1165,717 1162,712M1146,713 1151,713 1157,712 1162,712M1112,705 1116,703 1120,699 1124,697 1128,695 1132,693 1137,691 1141,688M1146,713 1143,708 1145,703 1144,698 1142,693 1141,688M1124,676 1129,678 1133,682 1137,684 1141,688M1152,671 1151,676 1152,680M1152,680 1147,685 1141,688M1185,696 1183,700M1185,696 1184,689 1182,683M1183,700 1177,701 1171,703 1166,705M1182,683 1177,684 1172,683 1167,683 1163,684 1158,684M1158,684 1159,690 1163,694 1164,700 1166,705M1208,699 1203,699 1199,698 1194,698 1189,697 1185,696M1187,715 1184,711 1185,705 1183,700M1162,712 1166,705M1152,680 1158,684M1193,766 1189,769 1185,771 1181,774M1193,766 1197,769 1200,773 1204,775 1207,779 1212,781M1181,774 1184,778 1186,782 1188,786 1189,791 1191,795M1191,795 1195,792 1199,789 1204,787 1208,785 1212,783M1212,781 1212,783M1198,753 1196,757 1196,762 1193,766M1167,761 1168,767 1170,772M1170,772 1175,774 1181,774M1220,759 1219,764 1217,768 1215,772 1214,777 1212,781M1234,764 1227,762 1222,759M1216,786 1212,783M1140,763 1144,767 1147,772 1151,776M1151,776 1149,777M1170,772 1165,777M1151,776 1155,776 1160,776 1165,777M1210,861 1208,863M1213,835 1208,833 1202,831M1202,831 1198,833 1195,837 1191,839 1187,841 1184,845M1217,806 1213,808 1208,807 1203,808 1199,811 1194,812M1202,831 1200,826 1197,822 1195,817 1194,812M1191,795 1190,802 1188,808M1194,812 1188,808M1621,894 1616,894 1613,895M1599,923 1595,921M1595,921 1594,916 1595,914M1515,754 1518,750M1518,749 1521,745 1522,742M1515,754 1511,750 1506,747M1506,747 1507,743 1508,738M1508,738 1513,735M1513,735 1519,737 1523,739M1516,760 1516,760 1515,754M1506,747 1500,749M1870,956 1870,956 1875,953 1880,953 1880,953M1995,958 1992,957 1989,954 1984,953 1984,953M1966,925 1966,924 1963,920 1963,919M1803,618 1807,616 1812,616 1816,615 1820,613 1825,612M1803,618 1805,622M1806,630 1807,633 1808,638 1811,642M1814,644 1811,642M1814,644 1819,642 1823,639 1824,639M1793,653 1795,652 1799,649 1803,647 1807,645 1811,642M1819,652 1819,652 1814,649 1814,644M1000,303 999,305 994,307M1056,316 1053,321 1050,325 1048,330 1047,335M1056,316 1051,315 1048,312 1044,308M1028,313 1033,311 1038,308 1044,308M1028,313 1030,317 1032,321 1035,325 1038,328 1040,332 1044,335M1044,335 1047,335M1046,303 1046,303 1044,308M1022,312 1019,304M1022,312 1028,313M1067,303 1066,308 1067,313M1072,318 1067,313M1072,318 1077,315 1082,314 1087,313 1091,311 1096,309M1096,303 1096,305M1096,309 1096,305M1056,316 1061,313 1067,313M1047,335 1051,337 1055,340 1059,341M1076,331 1071,332 1068,337 1064,339 1059,341M1076,331 1074,327 1074,322 1072,318M1102,321 1098,315 1096,309M1102,321 1098,323 1094,326 1092,330 1090,335 1086,337M1076,331 1082,333 1086,337M1103,303 1101,305 1096,305M973,373 973,367 975,361M972,357 975,361M1014,437 1010,432 1008,426M1038,428 1034,424 1032,420 1029,417 1027,412M1027,412 1021,413 1016,411M1008,426 1010,420 1013,416 1016,411M1110,364 1105,365 1101,367M1110,364 1111,359 1113,354 1116,350M1101,367 1098,363 1094,359 1091,354 1087,351M1111,344 1105,343 1100,345 1094,345 1089,345M1111,344 1116,350M1089,345 1087,351M1125,375 1121,373 1117,370 1115,366 1110,364M1125,375 1125,381 1127,386M1118,391 1122,388 1127,386M1096,378 1099,373 1101,367M1125,375 1129,371 1131,366 1135,361M1135,361 1131,358 1129,353 1125,349M1125,349 1116,350M1102,321 1108,321 1113,325M1113,325 1112,329 1113,334 1112,339 1111,344M1086,337 1089,345M1143,313 1138,316 1132,317 1126,319M1143,313 1147,316M1147,316 1150,321 1150,327 1152,332M1125,321 1126,319M1125,321 1126,326 1128,330 1132,334 1133,339M1152,332 1148,337 1144,341M1133,339 1139,339 1144,341M1144,303 1142,308 1143,313M1120,303 1120,306 1121,311 1123,315 1126,319M1113,325 1119,322 1125,321M1125,349 1128,344 1133,339M1165,352 1160,355 1155,355 1150,358M1165,352 1166,347 1164,341 1165,336M1165,336 1160,336 1156,332 1152,332M1150,358 1150,353 1148,349 1146,345 1144,341M1135,361 1139,361 1144,361 1148,360M1148,360 1150,358M1115,398 1116,404 1118,408 1121,412M1098,424 1104,426 1110,425M1121,412 1118,417 1113,421 1110,425M1204,309 1202,314 1198,317 1195,321 1192,326 1189,329M1203,309 1199,305 1194,305 1192,303M1171,303 1169,306 1168,311M1168,311 1171,317 1175,321 1177,326M1177,326 1183,328 1189,329M1202,303 1202,304 1203,309M1214,303 1211,304 1207,306 1204,309M1147,316 1152,314 1157,312 1163,313 1168,311M1165,336 1169,332 1173,329 1177,326M1165,352 1170,355 1175,357 1180,359M1180,359 1184,356 1185,351 1188,348 1189,343 1193,340M1193,340 1192,334 1189,329M1235,303 1235,305 1238,308M1264,303 1263,307M1238,308 1243,309 1248,307 1253,308 1258,306 1263,307M1291,528 1291,524 1289,519 1287,515 1288,510 1285,506 1284,501M1268,526 1270,521 1268,516 1267,511 1267,506M1267,506 1273,505 1279,504 1284,501M1293,491 1290,492M1291,528 1296,527 1298,528M1308,525 1309,522 1308,517 1310,512 1310,507 1312,502M1290,492 1287,497 1284,501M1278,465 1275,470 1273,475 1271,479M1290,492 1286,490 1282,488 1279,483 1275,481 1271,479M1254,471 1258,475 1263,476 1267,480M1271,479 1267,480M889,351 885,355 882,358M889,351 888,346 888,346M911,360 907,357 903,356 898,354 894,352 889,351M1081,601 1084,602M1077,572 1080,575 1085,577 1088,580 1093,581M1084,602 1086,597 1089,592 1090,586 1093,581M1192,481 1189,484 1188,489 1184,492M1192,481 1198,480 1204,481 1210,479M1211,502 1207,500 1202,498 1198,497 1193,498 1188,497 1185,494M1211,502 1213,498 1213,493 1216,488M1216,488 1212,484 1210,479M1179,508 1180,503 1182,498 1185,494M1162,477 1165,480 1169,482 1173,485 1176,488 1181,489 1184,492M1234,485 1229,485 1225,487 1220,489 1216,488M1212,469 1211,474 1210,479M1212,469 1216,466 1222,466 1227,463M1227,463 1229,464M1265,740 1259,740 1254,741 1249,741 1243,743M1265,740 1262,736 1262,731 1260,726 1261,721 1260,717M1260,717 1254,718 1250,721 1245,723 1239,724M1239,724 1239,729 1241,735 1240,741M1240,741 1243,743M1243,760 1243,754 1244,748 1243,743M1267,765 1268,760 1270,755M1228,717 1234,720 1239,724M1225,743 1230,742 1235,741 1240,741M1354,550 1354,550 1349,549 1344,552 1339,551 1334,551M1334,551 1334,547 1335,542M1336,506 1334,511 1331,516 1331,522 1330,526M1236,579 1240,583 1246,585 1249,589M1238,603 1242,600 1247,598 1250,593M1249,589 1250,593M1248,563 1254,564 1258,569 1263,570M1249,589 1251,585 1256,582 1258,578 1260,574 1263,570M1277,556 1274,562 1270,566 1265,570M1285,555 1289,556 1292,561 1296,563M1311,538 1312,541 1313,546 1314,551M1296,563 1301,561 1306,558 1309,554 1314,551M1400,605 1405,604 1411,603 1416,601M1400,605 1399,600 1397,596 1399,590 1399,585 1396,581M1396,581 1399,579M1399,579 1404,579 1409,580 1411,581M1416,601 1418,599M1401,575 1399,579M1385,579 1384,577M1385,579 1390,581 1396,581M1426,565 1425,568M1431,617 1427,613 1424,609 1421,604 1416,601M1385,579 1380,583 1377,587 1375,592 1371,596M1366,561 1362,563 1360,568 1357,571 1353,574 1350,577M1371,596 1362,595M1350,577 1354,581 1356,586 1360,590 1362,595M1371,596 1374,600 1377,604 1380,608M1399,606 1394,607 1390,607 1385,607 1380,608M1336,714 1339,718 1342,723 1346,727 1349,732M1349,732 1348,737 1347,742 1345,746M1345,746 1343,748M1322,744 1327,745 1332,747 1338,747 1343,748M1367,766 1365,771 1362,776M1367,766 1365,761 1365,755 1362,751M1362,776 1357,774 1351,773 1347,770 1342,768M1345,746 1351,747 1356,751 1362,751M1343,748 1343,753 1342,758 1342,763 1342,768M1232,509 1236,512 1242,513 1247,515M1232,509 1234,504 1235,499 1238,494 1239,489M1247,515 1251,512 1252,508 1254,504 1258,501M1239,489 1243,492 1248,495 1253,498 1257,500M1248,523 1247,515M1227,511 1232,509M1238,487 1239,489M1267,506 1263,502 1258,501M1267,480 1263,484 1261,489 1261,495 1257,500M1055,488 1060,485 1065,483 1070,482M1072,469 1071,473 1072,478 1070,482M1073,500 1075,497 1078,493M1070,482 1073,485 1075,490 1078,493M1093,495 1091,493M1091,493 1085,492 1078,493M1095,449 1094,454 1090,458 1089,463 1088,468M1095,449 1099,449 1104,450 1108,453 1113,453M1111,472 1107,474 1102,472 1098,472 1093,474M1111,472 1115,469 1117,465 1119,461M1093,474 1088,468M1119,461 1116,456 1113,453M1091,443 1095,449M1072,469 1077,467 1083,467 1088,468M1119,435 1115,430 1110,425M1119,435 1116,439 1115,444 1115,449 1113,453M1117,495 1115,490 1114,486 1112,482 1113,477 1111,472M1091,493 1091,488 1094,483 1094,478 1093,474M1130,462 1134,466 1135,472 1139,477M1130,462 1124,460 1119,461M973,436 979,437 985,437M973,436 971,430 971,425 968,420M985,437 987,432 990,428 994,425M994,425 991,421 990,416 987,412 984,409M968,420 973,418 976,414 980,411 984,409M990,447 990,445 985,442 985,437M960,418 963,420 968,420M1008,426 1004,424 999,426 994,425M978,395 981,400 985,403M985,403 984,409M1002,377 1002,382 999,386 997,390 996,394 995,399M1002,377 1007,380 1012,379 1017,381 1021,382M1021,382 1020,386 1018,391 1017,396 1014,400 1012,404M995,399 999,400 1003,403 1008,403 1012,404M998,373 1002,377M998,373 994,375 989,377 984,378 979,380M985,403 990,401 995,399M1016,411 1012,404M1439,633 1439,637M1431,617 1426,618 1422,621 1419,624 1414,625 1410,626 1406,629M1439,637 1437,640M1437,640 1433,642 1428,643 1424,647M1424,647 1420,644 1417,640 1414,635 1411,632 1406,629M1399,606 1399,611 1400,616 1404,620 1404,625 1406,629M1539,673 1544,673 1548,677 1552,677 1557,679M1557,679 1558,685 1557,688M1546,699 1547,700 1548,700M1567,700 1569,700M1513,735 1515,729 1515,723M1515,723 1518,722M1539,673 1541,668 1545,665 1545,660 1547,655 1549,653M1541,640 1537,644 1533,647 1529,649M1530,655 1530,655 1529,653M1474,652 1471,659M1474,652 1480,655M1480,655 1481,659M1481,659 1478,663M1478,663 1474,662M1474,662 1471,659M1476,644 1472,649M1487,651 1480,655M1488,650 1484,645M1472,649 1474,652M1487,651 1489,656M1485,661 1481,659M1486,662 1483,669M1483,669 1480,667M1480,667 1478,663M1509,672 1505,678M1509,672 1505,669M1505,669 1501,670M1502,677 1505,678M1502,677 1499,673M1499,673 1501,670M1496,681 1495,674M1495,674 1499,673M1497,681 1502,677M1516,671 1509,672M1505,678 1508,684M1330,418 1325,420 1320,422 1314,422M1322,391 1328,393 1334,393M1322,391 1319,395 1316,400 1313,404 1312,409 1309,413M1309,413 1311,418 1314,422M1279,443 1282,439 1284,434 1284,429M1301,448 1303,443 1301,437 1302,432M1302,432 1298,431 1294,429 1289,429 1284,429M1326,448 1325,443 1320,440 1320,435 1317,432 1316,427 1313,423M1302,432 1306,429 1310,426 1313,423M1257,433 1259,428 1261,423M1261,423 1267,424 1272,422 1277,422 1282,423M1284,429 1282,423M1266,983 1265,982 1261,981M1270,983 1271,982 1275,979 1277,975 1279,971M1279,971 1277,967 1273,964 1271,959 1268,956M1265,957 1268,956M1269,948 1268,956M1282,945 1286,948 1287,949M1335,949 1342,953M1342,953 1341,958 1341,960M1332,931 1332,936 1335,940 1334,945 1335,949M1354,950 1356,953 1360,956 1362,961 1366,963M1354,950 1357,945 1358,939 1361,934M1372,936 1372,941 1375,945 1376,947M1372,936 1368,935 1363,933M1378,955 1376,958 1374,962M1363,933 1361,934M1374,962 1366,963M1342,953 1347,951 1354,950M1356,979 1359,976 1360,971 1364,968 1366,963M1344,926 1348,929 1353,929 1357,932 1361,934M1367,916 1364,922 1363,927 1363,933M1380,968 1376,966 1374,962M1238,878 1234,881 1231,882M1186,920 1191,916 1196,912M1178,891 1182,892 1187,890 1191,892 1196,890 1197,891M1203,874 1206,880 1206,881M1213,655 1209,651 1204,649 1199,647M1213,655 1212,660 1214,665 1211,669 1212,674 1211,678M1199,647 1197,652 1194,655 1190,658 1189,663 1185,666M1211,678 1206,678 1201,678 1197,676 1192,674 1187,673M1187,673 1185,666M1226,651 1221,652 1217,653 1213,655M1214,682 1211,678M1171,659 1175,662 1180,664 1185,666M1182,683 1186,679 1187,673M1177,810 1174,814 1176,820 1173,824 1172,829 1170,833M1177,810 1172,808 1167,805 1164,803M1155,837 1159,835 1165,835 1170,833M1184,845 1180,843 1178,838 1174,835 1170,833M1188,808 1183,810 1177,810M1165,777 1166,782 1165,787 1165,792 1164,797 1163,800M1152,841 1155,837M1595,921 1590,922 1590,922M1583,947 1579,946 1577,942M1987,900 1991,904 1995,909M1986,891 1986,891 1987,888M1995,909 1997,910M2007,906 2008,905 2009,905M1982,901 1983,901 1987,900M1566,824 1569,825 1570,826M1578,861 1577,860 1574,858M997,359 1002,354 1007,352M997,359 992,357M992,357 990,353 989,347 986,343 985,343M1007,352 1007,347 1010,343 1011,338 1011,334M1011,334 1010,331M1010,331 1005,329 1000,327 994,326M986,332 989,328M989,328 994,326M998,373 996,368 997,363 997,359M1024,381 1024,376 1024,371 1026,367 1027,362M1024,381 1021,382M1027,362 1022,362 1020,357 1015,355 1011,354 1007,352M975,361 979,359 984,360 988,358 992,357M1037,342 1036,347 1036,352 1036,356M1037,342 1033,341 1029,339 1024,338 1020,336 1015,336 1011,334M1036,356 1032,361 1027,362M1037,342 1040,338 1044,335M1022,312 1018,315 1017,319 1015,323 1011,326 1010,331M994,307 994,312 993,317 996,321 994,326M982,324 985,324 989,328M1212,469 1208,464 1204,460M1192,481 1190,475 1190,469 1188,464M1204,460 1199,462 1193,461 1188,464M1240,437 1237,432 1233,427 1231,421M1240,437 1235,438 1233,443 1227,445 1224,449M1224,449 1220,447 1216,445 1211,444M1211,444 1212,438 1216,434 1217,428 1218,423M1231,421 1227,420 1222,420M1222,420 1218,423M1227,463 1225,458 1227,453 1224,449M1243,438 1240,437M1204,460 1204,455 1207,450 1208,445M1208,445 1211,444M1127,386 1129,387M1148,360 1149,365 1151,370 1153,375 1155,380M1129,387 1134,386 1139,384 1144,383 1150,382 1155,380M1195,420 1193,424M1195,420 1200,421 1204,421 1209,422 1213,423 1218,423M1208,445 1203,444 1198,440M1193,424 1194,430 1197,435 1198,440M1193,424 1188,424 1183,428 1178,427 1173,430 1168,430M1198,440 1195,444 1191,446 1186,448 1182,450M1168,430 1171,435 1174,438 1176,443 1180,446 1182,450M1161,476 1162,471 1164,467M1188,464 1181,460M1164,467 1169,466 1173,464 1177,461 1181,460M1181,460 1181,455 1182,450M1309,413 1305,411 1301,410 1298,406 1293,405M1282,423 1282,418 1284,414 1286,410M1293,405 1286,410M1193,340 1198,342 1202,344M1202,344 1206,340 1212,340 1216,335 1221,334M1204,309 1209,311 1212,314 1216,317 1219,322 1224,324M1224,324 1222,329 1221,334M1238,308 1237,313 1235,317 1233,321M1224,324 1228,323 1233,321M1213,362 1209,358 1207,353 1204,348 1202,344M1213,362 1218,359 1223,358 1227,354 1232,353M1221,334 1224,339 1228,343 1228,349 1232,353M844,334 843,334 841,333M1087,622 1090,626 1094,630 1098,632M1087,622 1087,617 1087,612 1089,607M1089,607 1093,608 1098,607 1102,605 1106,604 1111,604M1106,629 1107,627 1111,623 1113,622M1117,615 1116,613 1114,608 1111,604M1084,625 1087,622M1084,602 1089,607M1093,581 1097,579M1111,604 1111,599 1114,594 1116,589M1097,579 1102,581 1107,583 1112,585 1116,589M1095,558 1101,563M1097,579 1100,574 1100,568 1101,563M1117,540 1116,545 1116,550 1113,555 1113,560M1101,563 1107,561 1113,560M1408,776 1408,777 1407,782 1408,788M1397,767 1394,767 1389,769M1408,788 1402,786 1397,788 1391,785 1386,785M1386,785 1386,779 1388,774 1389,769M1410,792 1408,788M1410,792 1416,790 1423,790M1422,769 1421,769 1417,769 1413,769M1406,804 1401,807 1395,811M1406,804 1409,798 1410,792M1379,790 1386,785M1367,766 1373,764 1378,763 1384,763M1362,778 1362,776M1384,763 1389,769M1334,551 1332,554M1314,551 1318,551 1323,553 1327,555M1332,554 1327,555M1332,554 1336,557 1339,561 1340,566 1344,569 1345,574 1349,577M1296,563 1298,568M1298,568 1303,568 1306,572 1311,572 1316,573 1320,576M1327,555 1325,560 1322,565 1321,570 1320,576M1275,584 1271,588 1270,593 1265,596 1263,601M1275,584 1280,585 1285,587 1291,587M1291,587 1288,592 1289,597 1285,602 1285,607 1283,612M1266,609 1263,601M1266,609 1270,612 1274,614M1274,614 1278,613 1283,612M1250,593 1255,595 1259,597 1263,601M1265,570 1269,574 1271,580 1275,584M1298,568 1298,573 1294,577 1295,582 1292,586M1292,586 1291,587M1243,622 1247,618 1252,616 1257,614 1262,612 1266,609M1301,620 1298,624 1297,629 1293,632 1293,633M1301,620 1296,618 1292,616 1288,613 1283,612M1323,697 1324,692M1344,693 1344,692 1344,688M1345,707 1341,711 1336,714M1290,695 1292,690 1296,686 1301,684 1304,680M1301,620 1306,620M1306,620 1306,625 1307,625M1322,795 1320,797 1315,796 1311,798 1307,800M1325,775 1325,774 1319,772M1319,772 1315,774 1310,774 1306,773 1301,775M1307,800 1305,795 1305,790 1303,786 1302,780 1301,775M1342,768 1338,771 1335,776 1334,776M1317,816 1315,812 1311,809 1310,804 1307,800M1322,744 1322,749 1321,753 1321,758 1320,763 1319,767 1319,772M1296,752 1296,757 1299,761 1300,766 1301,770 1301,775M1298,805 1302,802 1307,800M1282,780 1287,779 1292,779 1296,776 1301,775M1059,341 1060,346 1063,350 1064,355M1036,356 1040,360 1046,363 1051,364M1051,364 1055,361 1059,358 1064,355M1089,383 1084,382 1080,379 1076,376M1087,351 1082,352 1079,356 1075,358M1076,376 1076,370 1077,364 1075,358M1064,355 1069,358 1075,358M1038,401 1038,397 1037,392 1037,388M1038,401 1043,404 1047,408 1053,410M1037,388 1040,385 1045,383 1049,382 1054,381M1064,402 1062,397 1062,392 1059,388 1059,383M1064,402 1061,405 1057,408 1053,410M1059,383 1054,381M1027,412 1031,409 1035,406 1038,401M1024,381 1028,383 1033,384 1037,388M1051,421 1051,416 1053,410M1051,364 1052,370 1052,376 1054,381M1072,405 1064,402M1076,376 1072,378 1067,380 1062,380 1059,383M1349,732 1354,729 1360,727 1365,725M1362,751 1365,747 1369,745 1373,742 1377,739M1377,739 1373,736 1370,732 1369,728 1365,725M1442,820 1439,820 1437,818M1424,828 1425,826 1428,822M1406,804 1411,806 1413,810 1416,813M1557,679 1560,676 1565,675 1568,671 1572,669M1522,625 1522,630 1521,634M1508,738 1505,734 1500,731M1492,736 1496,735 1500,731M1475,723 1479,720M1480,720 1483,723M1483,723 1480,728M1490,735 1488,732M1488,732 1483,731 1483,731M1492,664 1493,666M1493,666 1491,670M1484,670 1491,670M1493,666 1497,665M1495,674 1491,671M1497,665 1501,670M1490,681 1494,682M1490,681 1488,679M1491,671 1488,679M1497,681 1500,685M1500,685 1507,685M1494,682 1493,690M1493,690 1499,689M1500,685 1499,689M1293,304 1291,308 1287,311 1285,316M1293,304 1298,306 1302,305M1309,316 1305,321 1301,327M1301,327 1296,325 1290,325M1285,316 1288,320 1290,325M1263,307 1265,312M1265,312 1270,314 1275,313 1280,315 1285,316M1315,340 1310,341M1310,341 1307,336 1304,332 1301,327M1326,364 1322,368 1316,369M1322,391 1319,388 1316,385 1312,382M1316,369 1315,376 1312,382M1293,405 1293,400 1291,395 1292,390 1293,386M1312,382 1308,383 1302,382 1298,386 1293,386M1260,418 1262,413 1264,407 1267,403M1260,418 1256,415 1251,413 1245,412 1241,408M1241,408 1241,404M1241,404 1245,401 1250,399 1253,395 1258,393 1262,389M1267,403 1266,398 1264,394 1262,389M1261,423 1260,418M1286,410 1281,409 1277,405 1272,405 1267,403M1231,421 1234,416 1238,413 1241,408M1263,384 1262,389M1263,384 1268,385 1273,382 1278,381 1283,381 1288,381M1293,386 1288,381M1214,400 1209,398M1214,400 1218,398 1222,395 1226,393 1231,392M1209,398 1208,393 1210,388 1210,382 1208,377 1208,372M1231,382 1229,387 1231,392M1231,382 1227,381 1223,379 1219,374 1215,372 1210,370M1210,370 1208,372M1195,420 1194,414 1195,409 1193,403M1222,420 1220,415 1218,410 1215,405 1214,400M1193,403 1199,403 1204,399 1209,398M1241,404 1239,399 1234,396 1231,392M1193,403 1189,401 1186,398M1186,398 1186,393 1186,388 1187,383 1190,379 1190,374M1190,374 1195,373 1199,374 1204,374 1208,372M1213,362 1211,366 1210,370M1180,359 1181,366M1181,366 1185,371 1190,374M1130,462 1134,459 1138,455 1141,451 1144,446M1164,467 1163,463 1160,458 1155,455 1154,450 1151,446M1144,446 1151,446M1119,435 1124,435 1129,433 1134,433M1144,446 1140,442 1138,437 1134,433M1151,446 1154,441 1158,437 1164,435 1167,430M1121,412 1126,415 1132,414 1138,416M1134,433 1135,427 1136,421 1138,416M1129,387 1131,391 1134,395 1137,399 1137,404 1141,407 1143,411M1138,416 1143,411M1134,588 1129,587 1124,586 1119,587M1134,588 1135,582 1137,577 1139,572M1119,587 1119,582 1118,578 1118,573 1118,569 1119,564M1139,572 1136,567 1132,563M1132,563 1128,564 1123,565 1119,564M1143,596 1139,592 1134,588M1116,589 1119,587M1151,569 1145,571 1139,572M1113,560 1119,564M1139,547 1136,552 1135,558 1132,563M1477,705 1483,708M1477,705 1475,709M1481,712 1483,708M1481,712 1477,713M1475,709 1477,713M1479,720 1476,715M1480,720 1483,715M1481,712 1483,715M1477,713 1476,715M1323,581 1329,584 1335,584M1323,581 1320,585 1316,588 1313,591 1310,596M1335,584 1334,589 1336,594 1335,599 1334,603 1335,608M1310,596 1312,601 1314,607 1314,613M1335,608 1330,610 1325,614M1314,613 1320,613 1325,614M1349,577 1344,579 1339,581 1335,584M1320,576 1323,581M1292,586 1297,588 1302,590 1306,593 1310,596M1362,595 1358,598 1355,602 1353,607 1349,611M1349,611 1345,608 1340,608 1335,608M1306,620 1311,617 1314,613M1337,641 1336,636 1333,632 1330,628 1330,622 1327,618 1325,614M1337,641 1333,644 1331,645M1348,647 1353,646 1359,646 1364,647 1370,645M1348,647 1343,643M1343,643 1345,638 1347,633 1348,628 1350,623 1353,619M1370,645 1370,640 1372,636 1375,631 1375,626M1353,619 1359,620 1364,622 1369,624 1374,625M1337,641 1343,643M1348,656 1346,652 1348,647M1349,611 1351,615 1353,619M1401,633 1399,638 1398,643M1401,633 1397,631 1392,630 1388,628 1384,628 1379,627 1375,626M1377,653 1381,651 1386,650 1389,646 1393,644 1398,643M1377,653 1373,650 1370,645M1380,608 1379,614 1377,620 1374,625M1401,633 1406,629M1439,637 1443,640 1448,642 1454,642 1458,645M1437,640 1438,645 1440,649 1442,653 1445,657M1445,657 1451,657M1451,657 1453,653 1455,649 1458,645M1463,631 1462,633 1462,639 1460,645M1472,649 1464,648M1464,648 1460,645M1377,653 1378,659M1344,688 1349,686 1353,686 1358,685 1362,684M1384,763 1385,758 1386,753 1386,751M1377,739 1381,740M1384,744 1381,740M1398,643 1399,647 1404,650 1406,655 1406,660 1410,664M1395,669 1400,668 1405,667 1410,664M1424,647 1421,651 1420,656 1420,661 1418,666M1410,664 1418,666M1584,686 1586,690 1591,692 1592,698 1594,699M1584,684 1589,681 1594,678 1597,676M1569,700 1571,699M1574,695 1575,692 1581,690 1584,686M1572,669 1575,672 1579,675 1581,680 1584,684M1629,714 1624,712 1621,708 1617,705 1613,704M1514,710 1512,709M1514,705 1512,709M1499,704 1499,708M1499,704 1504,701M1499,708 1506,710M1504,701 1505,706 1506,710M1519,668 1514,664 1511,659M1514,655 1511,657M1505,669 1505,662M1511,659 1505,662M1497,665 1500,662M1505,662 1500,662M1492,659 1498,656M1500,662 1498,656M1515,723 1511,722M1511,722 1506,726 1501,729M1485,707 1489,710M1483,715 1486,715M1489,712 1486,715M1483,673 1485,678M1483,673 1477,675M1477,678 1477,675M1477,678 1481,680M1481,680 1485,678M1484,670 1483,673M1488,679 1485,678M1491,708 1493,702M1491,708 1497,709M1497,709 1499,708M1499,704 1495,701M1495,701 1493,702M1477,705 1477,703M1477,703 1480,699M1485,707 1486,701M1486,701 1480,699M1491,708 1489,710M1493,702 1489,699M1486,701 1489,699M1498,696 1493,692M1498,696 1495,701M1493,692 1489,697M1489,699 1489,697M1485,687 1481,685M1486,687 1484,694M1481,685 1478,687M1484,694 1480,695M1478,687 1479,695M1490,681 1485,687M1493,691 1486,687M1481,680 1481,685M1489,697 1484,694M1474,681 1477,678M1474,681 1478,687M1480,699 1480,695M1277,357 1278,351 1282,345M1277,357 1279,361 1283,364 1285,368 1288,372M1282,345 1287,346 1292,347 1297,349 1302,351M1288,372 1292,367 1295,363 1299,359 1302,355M1302,351 1302,355M1310,341 1305,345 1302,351M1290,325 1287,329 1283,332 1281,336 1279,340M1279,340 1282,345M1316,369 1313,366 1309,362 1306,358 1302,355M1288,381 1287,376 1288,372M1233,321 1237,325 1242,327 1246,331M1232,353 1236,354M1236,354 1237,349 1240,345 1241,340 1243,335 1246,331M1265,312 1262,316 1262,321 1260,325 1260,330M1246,331 1251,331 1255,330 1260,330M1279,340 1274,339 1268,338 1263,335M1260,330 1263,335M1180,399 1177,394 1173,391 1168,388 1163,386 1160,381M1180,399 1175,401 1172,405 1168,408 1166,413 1161,416M1161,416 1157,413 1152,411M1152,411 1152,406 1153,401 1152,396 1154,391 1156,386 1156,381M1156,381 1160,381M1186,398 1180,399M1181,366 1177,369 1172,371 1169,376 1164,378 1160,381M1167,430 1165,425 1163,421 1161,416M1143,411 1152,411M1474,681 1471,681M1471,681 1469,685M1478,687 1473,689M1473,689 1469,685M1471,681 1468,677M1477,675 1473,671M1468,676 1473,671M1480,667 1473,671M1474,662 1472,669M1472,669 1473,671M1363,686 1367,685M1372,685 1373,685 1378,688 1383,687 1388,688M1363,686 1364,691 1363,697 1362,702 1363,708M1376,710 1368,712M1376,710 1377,705 1382,702 1382,696 1387,693 1388,688M1363,708 1368,712M1387,682 1387,682 1388,688M1352,706 1357,707 1363,708M1365,725 1365,718 1365,718M1381,740 1385,737 1387,734M1379,711 1376,710M1427,719 1428,718 1424,714 1424,709M1424,709 1422,708M1443,749 1441,748 1441,742 1440,739M1405,697 1400,695 1397,692 1392,691 1388,688M1405,697 1407,703M1505,700 1509,698M1505,700 1499,696M1499,696 1502,691M1509,696 1505,691M1502,691 1505,691M1513,702 1509,698M1512,709 1506,710M1499,689 1502,691M1512,694 1509,696M1507,685 1505,691M1507,649 1508,654M1504,645 1498,644M1508,654 1503,653 1498,655M1498,655 1495,649M1495,649 1498,644M1511,657 1508,654M1497,642 1498,644M1488,650 1495,649M1511,722 1508,719M1506,712 1508,719M1501,729 1500,721M1508,719 1500,721M1500,731 1496,728 1493,723M1488,732 1488,729M1493,723 1488,729M1486,715 1488,720M1488,720 1484,723M1484,723 1488,729M1238,377 1243,378 1248,379 1253,380 1258,382 1262,383M1238,377 1239,372 1237,367 1239,362 1239,357M1239,357 1245,357 1251,356 1256,358M1262,383 1261,378 1261,373 1262,368 1261,363M1261,363 1256,358M1231,382 1238,377M1236,354 1239,357M1263,335 1262,339 1262,344 1259,348 1257,353 1256,358M1277,357 1272,359 1266,360 1261,363M1468,676 1464,672M1472,669 1466,667M1464,672 1466,667M1468,677 1462,680M1462,680 1457,673M1464,672 1457,673M1500,721 1499,715M1500,721 1493,722M1492,721 1494,716M1494,716 1497,714M1497,714 1499,715M1506,712 1499,715M1488,720 1492,721M1489,712 1494,716M1497,709 1497,714M1457,663 1463,657M1457,663 1462,663 1466,666M1463,657 1469,660M1469,660 1466,666M1451,657 1457,663M1464,648 1463,652 1463,657M1455,672 1457,668 1457,663M1471,659 1469,660M1476,715 1472,716M1471,718 1472,716M1477,703 1472,701M1479,695 1473,694M1472,701 1473,694M1473,689 1472,694M1436,699 1440,699M1431,691 1428,688 1425,685 1425,679 1421,676M1443,689 1445,685 1447,681M1436,670 1441,674 1446,677M1436,670 1431,671 1427,671 1422,671M1446,677 1447,681M1422,671 1421,676M1405,697 1409,694 1412,689 1414,684 1418,680 1421,676M1424,709 1427,705 1433,703 1436,699M1445,657 1442,661 1439,666 1436,670M1455,672 1451,676 1446,677M1418,666 1422,671M1469,685 1467,686M1467,686 1462,681M1447,681 1451,684 1456,686M1462,681 1456,686M1442,708 1442,704 1441,700M1458,692 1466,696M1458,691 1466,688M1466,688 1468,693M1468,693 1466,696M1456,686 1458,691M1472,694 1468,693M1472,701 1469,703M1469,703 1466,700M1466,700 1466,696M1472,716 1469,711M1467,713 1469,711M1475,709 1469,709M1469,711 1469,709M1469,703 1468,707M1469,709 1468,707M1460,701 1458,708M1460,701 1456,695M1456,695 1452,696 1450,697M1444,700 1446,701M1451,704 1453,705 1457,708M1466,700 1460,701M1468,707 1463,707 1459,708M1458,692 1456,695M1441,700 1444,700" fill="none" stroke="#686868" stroke-width="1.7" stroke-linejoin="round"/><path d="M873.0,327.0 872.0,324.0 869.0,324.5 870.0,328.0ZM840.5,333.0 843.8,335.0 848.0,332.0 847.5,328.8 840.5,329.5ZM860.0,345.0 857.5,346.2 858.8,351.2 861.2,350.0ZM942.5,372.5 957.5,382.5 960.0,380.0 952.5,374.5 943.8,369.5 935.5,364.5 931.8,365.5 933.8,368.0ZM937.5,426.2 943.8,427.5 940.0,420.0 936.2,412.5 930.0,416.2 922.5,410.0 918.8,402.5 916.2,395.0 915.0,387.5 917.5,382.5 916.2,375.0 910.0,372.5 906.2,366.2 912.5,361.2 920.0,357.5 923.8,348.8 915.0,345.0 907.5,341.2 895.0,346.2 882.5,345.0 877.5,350.0 880.0,356.2 883.8,362.5 890.0,370.0 895.0,377.5 902.5,385.0 906.2,392.5 908.8,402.5 915.0,410.0 922.5,417.5 930.0,422.5ZM956.2,462.5 952.5,457.5 947.5,452.0 944.2,453.8 946.2,458.0 950.0,461.2 955.0,464.5ZM961.2,472.5 960.5,470.0 957.0,468.0 958.0,471.2ZM1430.0,471.2 1421.2,476.2 1423.8,482.5 1432.5,483.8 1440.0,480.0 1438.8,475.0ZM965.0,370.0 963.0,375.0 965.0,382.5 960.0,386.2 956.2,392.5 950.0,396.2 955.0,400.0 960.0,405.0 963.8,410.0 960.0,413.8 959.5,418.8 965.0,423.8 970.0,430.0 973.0,438.8 976.2,443.8 985.0,446.2 993.8,447.5 995.0,455.0 998.8,461.2 1006.2,470.0 1012.5,476.2 1020.0,482.5 1027.5,488.8 1028.8,497.5 1031.2,507.5 1035.0,517.5 1034.0,520.6 1033.5,520.0 1029.8,526.2 1031.0,531.8 1030.4,535.5 1032.9,541.1 1034.7,545.4 1039.1,544.2 1042.8,542.3 1045.3,539.8 1049.6,539.2 1052.1,539.8 1052.1,539.4 1053.8,543.8 1057.5,550.0 1063.8,557.5 1070.0,565.0 1072.5,573.8 1071.2,582.5 1075.0,591.2 1080.0,598.8 1081.2,607.5 1085.0,616.2 1083.8,625.0 1087.5,632.5 1095.0,633.8 1105.0,630.0 1111.2,625.0 1116.2,617.5 1120.0,610.0 1127.5,621.2 1132.5,627.5 1140.0,635.0 1147.5,632.5 1157.5,627.5 1170.0,623.8 1180.0,625.0 1190.0,622.5 1202.5,618.8 1215.0,617.5 1225.0,622.5 1235.0,627.5 1242.5,632.5 1250.0,627.5 1260.0,623.8 1270.0,618.8 1273.8,615.0 1277.5,622.5 1287.5,627.5 1293.8,635.0 1298.8,641.2 1301.2,635.0 1305.0,627.5 1310.0,622.5 1316.2,632.5 1322.5,638.8 1332.5,646.2 1340.0,653.1 1345.0,658.8 1350.0,655.0 1353.8,660.0 1360.0,662.5 1368.8,661.2 1377.5,658.8 1382.5,663.8 1390.0,666.2 1395.0,668.8 1392.5,675.0 1393.8,680.0 1387.5,681.2 1380.0,683.8 1370.0,685.0 1362.5,683.8 1355.0,681.2 1347.5,683.8 1340.0,688.5 1338.5,689.5 1340.0,691.2 1347.5,694.4 1353.8,697.5 1355.6,704.0 1353.5,705.8 1345.0,707.0 1338.8,704.5 1332.5,699.5 1328.0,694.5 1317.5,687.0 1302.5,678.8 1290.0,671.2 1277.5,668.8 1262.5,662.5 1245.0,657.5 1230.0,651.2 1222.5,643.8 1215.0,636.2 1205.0,633.8 1192.5,631.2 1180.0,634.5 1175.0,641.2 1171.2,650.0 1165.0,657.5 1155.0,661.2 1142.5,660.0 1130.0,655.0 1122.5,651.2 1120.0,660.0 1117.5,670.0 1112.5,680.0 1107.5,690.0 1100.0,697.5 1091.2,702.5 1082.5,702.5 1078.8,712.5 1081.2,718.8 1091.2,722.5 1100.0,730.0 1105.0,740.0 1107.5,750.0 1110.0,756.2 1117.5,757.5 1127.5,762.5 1137.5,768.8 1147.5,776.2 1155.0,783.8 1160.0,792.5 1163.8,802.5 1165.0,812.5 1163.8,822.5 1160.0,830.0 1152.5,837.5 1147.5,845.0 1145.0,855.0 1146.2,867.5 1150.0,875.0 1156.2,885.0 1157.5,892.5 1162.5,900.0 1163.8,907.5 1167.5,915.0 1175.0,920.0 1182.5,920.0 1187.5,927.5 1192.5,932.5 1197.5,926.2 1202.5,920.0 1197.5,915.0 1195.0,907.5 1196.2,897.5 1197.5,888.8 1202.5,882.5 1210.0,878.8 1220.0,877.5 1230.0,880.0 1231.2,887.5 1228.8,895.0 1232.5,901.2 1240.0,897.5 1245.0,905.0 1251.2,915.0 1256.2,925.0 1260.0,932.5 1266.2,942.5 1263.8,950.0 1265.0,960.0 1263.8,970.0 1260.6,983.0 1282.1,983.0 1281.2,972.5 1282.5,962.5 1285.0,955.0 1287.5,947.5 1290.0,940.0 1293.8,930.0 1295.0,922.5 1302.5,921.2 1312.5,920.0 1320.0,922.5 1327.5,930.0 1330.0,940.0 1332.5,947.5 1338.8,955.0 1342.5,965.0 1350.0,972.5 1353.5,983.0 1379.6,983.0 1380.0,967.5 1378.8,957.5 1376.2,947.5 1373.8,937.5 1376.2,930.0 1373.8,922.5 1370.0,912.5 1366.2,902.5 1362.5,892.5 1360.0,882.5 1356.2,872.5 1353.8,862.5 1348.8,852.5 1345.0,842.5 1341.2,832.5 1335.0,823.8 1330.0,815.0 1326.2,805.0 1322.5,795.0 1321.2,785.0 1325.0,775.0 1330.0,772.5 1335.0,777.5 1340.0,781.2 1347.5,786.2 1355.0,790.0 1362.5,796.2 1370.0,800.0 1376.2,802.5 1372.5,805.0 1367.5,810.0 1370.0,817.5 1373.8,815.0 1378.8,817.5 1382.5,822.5 1387.5,830.0 1392.5,827.5 1397.5,820.0 1405.0,817.5 1415.0,813.8 1425.0,810.0 1432.5,805.0 1441.2,801.2 1437.5,790.0 1433.4,787.9 1440.0,787.0 1437.5,781.2 1430.0,780.0 1432.9,787.7 1430.0,786.2 1420.0,782.5 1423.8,775.0 1422.5,767.5 1416.2,765.0 1411.2,770.0 1410.5,777.5 1402.5,772.5 1395.0,765.0 1388.8,755.0 1383.8,746.2 1387.5,737.5 1386.2,730.0 1380.0,726.2 1370.0,722.5 1363.8,716.2 1364.9,713.0 1365.0,713.1 1370.0,711.9 1376.2,712.5 1382.5,709.4 1390.0,705.6 1398.8,703.8 1407.5,703.1 1415.0,702.5 1420.0,700.0 1422.5,696.2 1427.5,692.5 1435.0,690.0 1442.5,689.4 1448.8,691.2 1450.0,696.2 1448.8,701.2 1451.2,705.0 1455.0,709.4 1458.8,708.1 1463.8,710.0 1468.8,715.0 1472.5,721.2 1478.8,727.5 1485.0,733.8 1490.0,741.0 1490.2,733.8 1494.5,740.0 1498.5,747.5 1501.5,755.0 1504.0,761.2 1506.5,755.0 1510.2,760.0 1515.2,761.2 1519.0,757.5 1517.8,750.0 1522.0,746.2 1523.1,739.6 1521.2,735.0 1518.8,727.5 1517.5,720.0 1515.0,712.5 1513.8,703.8 1512.5,695.0 1510.0,687.5 1508.8,680.0 1512.5,675.0 1517.5,670.0 1521.2,666.2 1520.0,660.0 1515.0,655.0 1508.8,650.0 1502.5,643.8 1493.8,640.0 1483.8,636.2 1475.0,633.8 1465.0,631.2 1457.5,626.2 1455.0,620.0 1450.6,611.2 1447.5,607.5 1442.5,602.5 1436.2,603.8 1427.5,602.5 1420.0,600.0 1415.0,596.2 1410.0,592.5 1407.5,587.5 1412.5,585.0 1411.2,580.0 1405.0,576.2 1395.0,573.8 1390.0,570.0 1386.2,575.0 1382.5,577.5 1377.5,573.8 1373.8,567.5 1375.0,560.0 1365.0,555.0 1355.0,550.0 1345.0,546.2 1337.5,542.5 1330.0,540.0 1320.0,538.8 1310.0,537.5 1301.2,536.2 1296.2,531.2 1298.8,527.5 1305.0,525.0 1313.8,526.2 1322.5,525.0 1330.0,526.2 1337.5,523.8 1345.0,520.0 1352.5,516.2 1360.0,512.5 1368.8,508.8 1373.8,503.8 1366.2,505.0 1360.0,502.5 1365.0,497.5 1369.5,491.2 1367.5,483.8 1362.5,480.0 1355.0,475.0 1346.2,472.5 1340.0,465.0 1338.8,456.2 1342.5,450.0 1351.2,445.0 1362.5,446.2 1372.5,451.2 1382.5,457.5 1388.8,465.0 1391.2,472.5 1386.2,477.5 1378.8,478.8 1373.8,482.5 1373.8,490.5 1378.8,493.0 1385.0,492.0 1395.0,487.5 1405.0,483.8 1412.5,478.8 1414.5,472.5 1410.0,465.0 1406.2,455.0 1402.5,445.0 1395.0,435.0 1387.5,425.0 1378.8,415.0 1370.0,407.5 1361.2,398.8 1353.8,390.0 1350.0,380.0 1347.5,367.5 1343.8,357.5 1335.0,351.2 1327.5,342.5 1322.5,332.5 1316.2,323.8 1307.5,315.0 1302.5,306.5 1302.5,303.0 992.5,303.0 992.5,306.5 986.2,312.5 980.0,314.5 982.0,323.8 985.0,330.0 988.0,341.2 982.5,345.0 975.5,346.2 972.5,353.8 971.2,363.8ZM1044.8,491.0 1047.3,493.5 1050.4,492.3 1053.5,491.6 1057.2,494.8 1059.7,497.9 1062.8,494.8 1065.9,495.4 1068.4,498.5 1072.1,499.7 1077.1,500.3 1080.8,498.5 1082.0,494.8 1085.8,493.5 1088.3,497.2 1090.7,501.0 1093.2,505.9 1091.4,510.9 1090.7,515.9 1093.2,520.8 1095.1,527.0 1093.2,527.0 1091.4,522.7 1088.9,520.8 1086.4,519.0 1083.9,519.0 1082.7,522.7 1081.4,525.2 1077.7,522.7 1074.6,519.6 1072.1,515.9 1069.0,514.6 1066.5,512.1 1062.8,513.4 1059.1,511.5 1056.0,514.6 1052.9,515.2 1050.4,514.6 1049.8,510.3 1047.3,512.1 1044.8,514.6 1041.1,514.6 1038.0,512.1 1035.5,509.7 1034.8,504.7 1039.2,504.1 1043.5,507.2 1044.8,507.8 1043.5,505.9 1039.8,502.8 1036.7,501.0 1034.8,497.9 1036.1,493.5 1039.2,489.8 1042.3,488.5ZM1006.8,572.8 1008.6,569.0 1010.5,570.9 1013.0,574.6 1014.8,577.1 1016.1,573.4 1019.2,574.0 1021.7,572.8 1023.5,569.7 1026.6,569.0 1027.3,564.7 1025.4,559.7 1027.3,554.8 1027.9,547.3 1029.1,541.1 1028.5,535.5 1030.4,531.1 1029.8,526.2 1024.2,528.0 1019.8,530.5 1016.1,532.4 1013.6,535.5 1010.5,539.8 1008.6,544.8 1006.8,550.4 1004.9,556.0 1003.0,562.2 1002.4,569.7 1000.9,575.9 1000.6,580.8 1004.3,576.5ZM1039.1,566.6 1039.7,563.4 1037.2,561.6 1033.5,562.8 1029.8,564.7 1029.4,567.8 1030.4,570.9 1033.5,574.6 1036.6,578.4 1039.1,579.0 1039.1,576.5 1036.0,574.0 1032.9,570.9 1033.5,569.0 1036.0,567.8ZM1052.7,568.4 1049.6,570.9 1048.4,577.1 1049.0,579.6 1050.9,579.0 1052.1,575.2 1055.2,573.4 1058.3,571.5 1061.4,569.0 1061.4,566.6 1057.1,567.2ZM1058.3,578.4 1058.9,574.6 1055.8,577.7 1052.1,583.3 1052.1,587.0 1053.4,587.0 1055.8,582.7ZM1025.4,580.8 1023.5,582.7 1023.5,585.2 1024.8,587.0 1026.6,585.8 1027.0,582.7ZM1037.2,597.6 1038.4,599.5 1040.9,598.9 1041.6,595.1 1039.7,594.5ZM1020.0,595.0 1015.0,593.8 1012.5,600.0 1015.0,607.5 1016.2,615.0 1018.8,622.5 1023.8,630.0 1028.8,630.0 1030.0,622.5 1023.8,616.2 1020.0,610.0 1021.2,603.8ZM972.5,656.2 980.0,657.5 981.2,650.0 982.5,640.0 985.0,650.0 990.0,655.0 992.5,665.0 1000.0,670.0 1010.0,668.8 1020.0,673.8 1027.5,677.5 1035.0,676.2 1038.0,668.8 1036.2,665.0 1031.2,655.0 1025.0,645.0 1017.5,632.5 1010.0,618.8 1006.2,610.0 1005.0,600.0 998.8,597.5 998.0,602.5 1000.0,610.0 998.8,617.5 992.5,622.5 986.2,627.5 983.8,621.2 977.5,620.0 973.8,627.5 970.0,637.5 967.5,650.0ZM1048.8,740.0 1055.0,742.5 1061.2,745.5 1062.0,741.2 1055.0,737.5 1048.8,733.8 1046.2,726.2 1037.5,722.5 1027.5,717.5 1021.2,710.0 1020.0,702.0 1013.8,703.8 1007.5,710.0 1007.5,716.2 1010.0,722.5 1016.2,730.0 1020.0,737.5 1026.2,743.8 1031.2,750.0 1036.2,755.0 1041.2,752.5 1042.5,743.8ZM1407.5,757.5 1411.2,758.0 1416.2,755.0 1413.8,751.2 1407.5,753.8ZM1062.5,832.5 1063.0,829.5 1059.5,828.8 1059.5,831.5ZM1380.0,831.2 1373.8,832.5 1378.8,837.5 1383.8,842.0 1387.5,842.5 1385.5,837.5ZM1161.5,926.2 1163.0,930.0 1166.2,925.0 1165.0,920.0 1162.0,921.2ZM1175.0,933.8 1173.8,927.5 1168.8,928.8 1171.2,936.2ZM1491.5,317.5 1497.8,327.5 1504.0,332.5 1510.2,327.5 1514.0,317.5 1511.5,307.0 1511.5,303.0 1482.4,303.0 1485.2,313.8ZM1467.5,332.5 1464.0,325.0 1452.5,321.2 1442.5,315.0 1437.5,306.5 1437.5,303.0 1417.3,303.0 1420.0,312.5 1417.5,320.0 1420.0,327.5 1430.0,327.5 1437.5,325.0 1445.0,330.0 1455.0,335.0 1464.0,337.5 1472.5,338.8 1474.0,336.2ZM1535.2,428.8 1532.0,436.2 1531.5,441.2 1535.2,438.8 1537.8,431.2ZM1559.5,441.2 1557.0,440.0 1556.0,446.2 1558.5,446.2ZM1522.8,440.0 1517.8,442.5 1515.8,448.8 1517.8,453.0 1522.8,452.5 1525.2,446.2ZM1497.8,462.5 1492.8,470.0 1491.5,475.0 1485.2,481.2 1487.8,483.8 1494.0,480.0 1501.5,472.5 1507.8,460.0 1502.8,455.0ZM1507.8,471.2 1502.8,472.5 1503.5,477.5 1508.5,477.0ZM1449.0,473.0 1452.0,480.0 1458.0,489.0 1466.0,495.5 1473.0,494.0 1479.0,486.0 1469.0,483.5 1464.0,480.0 1456.0,472.0 1451.0,469.0ZM1528.5,496.2 1527.8,489.5 1524.5,490.0 1525.2,497.5ZM1611.5,547.5 1607.8,542.5 1600.2,537.5 1591.5,533.8 1594.0,527.5 1595.2,521.2 1586.5,517.5 1580.2,513.0 1577.8,517.5 1576.5,523.8 1575.2,531.2 1581.5,533.8 1589.0,536.2 1591.5,541.2 1587.8,546.2 1594.0,552.5 1601.5,555.0 1609.0,552.5ZM1564.5,537.0 1561.0,537.5 1562.0,541.5 1565.2,540.5ZM1415.0,560.0 1420.0,565.0 1426.2,570.0 1430.0,576.2 1436.2,582.5 1441.2,587.5 1448.8,590.0 1453.8,595.0 1456.2,600.0 1455.0,606.2 1451.9,609.4 1455.0,618.8 1456.2,621.2 1465.0,620.0 1472.5,621.2 1482.5,625.0 1496.2,623.8 1508.8,623.8 1517.5,625.0 1520.0,630.0 1515.0,633.8 1520.0,635.0 1526.2,632.5 1527.5,640.0 1526.2,645.0 1530.0,650.0 1527.5,655.0 1532.5,656.2 1536.2,658.8 1538.8,663.8 1537.5,670.0 1540.0,675.0 1542.5,680.0 1550.0,677.5 1552.5,683.8 1557.5,688.8 1561.2,693.8 1565.0,697.5 1568.8,703.8 1571.2,698.8 1575.0,695.0 1580.0,696.2 1585.0,701.2 1588.8,706.2 1593.8,700.0 1596.2,691.2 1597.5,678.8 1598.1,667.5 1592.5,670.0 1585.0,669.4 1577.5,668.8 1570.0,666.2 1563.8,667.5 1558.8,663.8 1553.8,658.8 1548.8,652.5 1547.5,645.0 1545.0,637.5 1542.5,630.0 1540.0,622.5 1537.5,615.0 1540.0,607.5 1544.4,598.8 1540.0,593.8 1535.0,587.5 1531.2,581.2 1533.1,573.8 1527.5,570.6 1517.5,568.8 1507.5,571.2 1498.8,572.5 1487.5,568.8 1477.5,566.2 1474.4,560.0 1467.8,553.0 1464.0,553.8 1450.0,542.5 1440.0,532.5 1432.5,522.5 1426.2,512.5 1420.0,503.8 1410.0,501.2 1400.0,502.5 1388.8,506.2 1380.0,510.0 1373.8,517.5 1366.2,523.8 1357.5,528.8 1347.5,530.0 1341.2,533.8 1345.0,537.5 1353.8,536.2 1361.2,533.8 1370.0,531.2 1376.2,533.8 1382.5,540.0 1392.5,546.2 1402.5,550.0 1411.2,555.0ZM1546.2,701.2 1551.2,700.0 1555.0,695.0 1552.5,690.0 1545.0,692.5ZM1435.0,697.5 1427.5,698.8 1423.1,701.2 1421.2,706.2 1421.9,712.5 1424.4,717.5 1428.8,720.6 1433.8,718.1 1438.8,715.0 1440.0,710.0 1443.8,706.2 1447.5,702.5 1443.8,698.8ZM1425.0,747.5 1427.5,752.5 1432.5,757.5 1437.5,755.0 1442.5,750.0 1446.2,743.8 1443.8,738.8 1432.5,738.8 1423.8,741.2ZM1533.5,746.2 1530.2,742.5 1526.5,752.5 1525.2,761.2 1527.8,762.5 1531.5,755.0ZM1550.2,771.2 1550.8,778.8 1552.8,786.2 1559.0,782.5 1565.2,776.2 1570.2,768.8 1571.5,761.2 1566.5,756.2 1557.8,757.5 1551.5,765.0ZM1497.8,792.0 1494.5,792.5 1499.0,798.0 1501.5,797.0ZM1565.2,802.5 1566.5,807.5 1569.0,812.5 1567.0,820.0 1565.2,827.5 1570.2,826.2 1574.0,821.2 1579.0,815.0 1582.8,808.8 1576.5,802.5 1574.0,795.0ZM1438.8,822.5 1447.5,817.5 1446.2,815.0 1435.0,818.8 1425.0,822.5 1416.2,827.5 1418.8,830.0 1428.8,826.2ZM1591.0,853.8 1589.0,846.2 1580.2,846.2 1574.0,852.5 1574.0,860.0 1581.5,862.5 1587.8,862.5ZM1595.2,913.8 1589.0,917.5 1589.5,922.5 1592.8,926.2 1599.0,925.0 1601.5,917.5ZM1544.0,926.2 1546.5,928.0 1549.5,925.0 1547.8,921.2 1543.5,922.5ZM1574.0,928.8 1579.0,933.8 1580.2,941.2 1575.2,942.5 1571.5,937.5 1564.0,933.8 1560.2,938.8 1559.0,951.2 1566.5,950.0 1574.0,948.8 1584.0,947.5 1591.5,945.0 1593.5,937.5 1591.5,928.8 1584.0,933.8 1579.0,931.2ZM1687.8,342.5 1691.5,340.0 1690.2,346.2 1694.0,350.0 1699.0,357.5 1705.2,360.0 1709.0,352.5 1707.8,342.5 1711.5,332.5 1719.5,323.8 1719.0,312.5 1710.2,316.2 1704.0,322.5 1696.5,327.5 1692.8,321.2 1684.0,320.0 1674.0,318.8 1667.8,321.2 1660.2,322.5 1662.8,328.8 1665.2,335.0 1662.8,342.5 1664.0,351.2 1671.5,348.8 1677.8,348.8 1676.5,353.8 1681.5,358.0 1689.0,357.5 1685.2,350.0ZM1664.0,408.0 1656.5,402.0 1652.8,407.5 1651.5,413.8 1653.5,421.2 1659.0,416.2ZM1749.0,583.8 1744.0,580.5 1736.5,582.5 1739.0,588.8 1742.8,594.5 1749.0,593.8ZM1735.2,591.2 1731.5,592.5 1732.0,596.2 1735.2,596.2ZM1657.8,735.0 1652.8,726.2 1652.8,715.0 1644.0,715.0 1639.0,711.2 1631.5,705.0 1627.8,697.0 1619.0,698.8 1612.8,703.8 1615.2,712.5 1620.2,717.5 1626.5,722.5 1632.8,728.8 1637.8,735.0 1642.8,740.0 1646.5,747.5 1651.5,755.0 1655.2,752.5 1659.0,743.8ZM1609.0,770.5 1615.2,772.5 1622.8,773.8 1621.5,767.5 1616.5,766.2ZM1681.5,761.2 1671.5,761.2 1664.0,756.2 1656.5,757.5 1659.0,762.5 1664.0,766.2 1670.2,771.2 1676.5,776.2 1681.5,781.2 1687.8,785.0 1694.0,783.8 1697.8,777.5 1697.8,770.0 1691.5,765.0ZM1707.8,797.5 1706.0,802.5 1710.2,806.2 1716.5,806.2 1724.0,802.5 1730.2,798.8 1729.0,793.8 1720.2,790.0 1712.8,789.5 1707.8,792.5ZM1642.8,796.2 1640.2,802.5 1639.0,808.8 1642.8,815.0 1650.2,811.2 1654.0,805.0 1652.8,796.2 1649.0,790.0 1642.8,788.8ZM1695.2,805.0 1690.2,802.5 1691.5,808.0 1694.0,813.8 1700.2,812.5 1701.5,806.2ZM1601.5,835.0 1597.8,835.5 1598.2,838.0 1602.0,837.5ZM1779.0,858.8 1779.5,863.8 1782.8,865.5 1787.0,862.5 1785.2,857.0ZM1749.0,877.5 1751.0,866.2 1749.0,856.2 1745.2,850.0 1740.2,845.0 1734.0,848.8 1729.0,856.2 1724.0,857.5 1717.8,861.2 1712.8,867.5 1715.2,871.2 1716.5,878.8 1721.5,885.0 1725.2,892.5 1730.2,897.5 1739.0,893.8 1745.2,887.5ZM1684.0,861.2 1677.8,868.8 1676.5,873.8 1677.0,880.0 1681.5,886.2 1687.8,888.0 1694.0,885.0 1699.0,880.0 1702.8,871.2 1703.5,862.5 1701.5,855.0 1692.8,856.2ZM1670.2,876.2 1664.0,882.5 1662.8,887.5 1657.8,890.0 1656.5,893.8 1664.0,891.2 1667.8,892.5 1671.5,893.8 1670.2,887.5 1673.5,881.2 1674.0,873.8ZM1611.5,890.0 1614.0,897.5 1618.5,903.0 1622.8,898.8 1626.0,892.5 1620.2,886.2 1614.0,880.0 1607.0,877.5 1609.0,883.8ZM1754.5,891.2 1751.0,892.5 1751.5,896.2 1755.2,894.5ZM1754.0,902.5 1754.0,905.5 1760.2,906.2 1764.0,903.8 1760.2,899.5ZM1741.5,902.5 1737.8,903.8 1739.0,910.5 1742.0,908.8ZM1810.2,893.8 1805.2,900.0 1797.8,905.0 1789.0,911.2 1781.5,916.2 1774.0,917.5 1775.2,925.0 1780.2,926.2 1786.5,922.5 1794.0,918.8 1799.0,912.5 1806.5,907.5 1811.5,902.5 1817.8,902.0 1824.0,900.0 1816.5,895.0ZM1724.0,913.8 1725.2,917.0 1730.2,917.0 1734.5,912.5 1732.8,907.5ZM1602.8,931.2 1607.8,932.5 1611.5,928.8 1607.8,924.5 1602.2,926.2ZM1700.2,933.8 1705.2,938.8 1710.2,943.8 1715.2,949.5 1720.2,945.0 1721.5,937.5 1716.5,932.5 1711.5,927.5 1706.5,922.5 1700.2,926.2ZM1685.2,943.8 1689.0,937.0 1684.0,937.5 1676.5,942.5 1670.2,951.2 1674.0,952.5 1679.0,948.8ZM1650.2,960.0 1655.2,959.5 1654.0,955.0 1647.8,952.5 1641.5,947.0 1637.8,948.8 1639.0,952.5 1644.0,956.2ZM1864.0,511.2 1874.0,510.0 1881.5,507.5 1882.8,501.2 1889.0,502.5 1894.0,500.0 1892.8,492.5 1886.5,482.5 1881.5,472.5 1875.2,467.5 1869.0,457.5 1861.5,450.0 1864.0,440.0 1856.5,436.2 1851.5,431.2 1846.5,433.8 1836.5,432.5 1826.5,435.0 1827.8,442.5 1819.0,445.0 1811.5,447.5 1801.5,451.2 1790.2,451.2 1782.8,456.2 1779.0,465.0 1782.8,473.8 1789.0,478.8 1796.5,485.0 1806.5,486.2 1814.0,490.0 1819.0,492.5 1826.5,500.0 1834.0,502.5 1844.0,503.8 1854.0,508.8ZM1839.0,466.2 1845.2,470.0 1841.5,476.2 1834.0,478.8 1827.8,485.0 1822.8,488.8 1820.2,487.5 1822.8,475.0 1829.0,468.8ZM1879.0,486.2 1879.0,493.8 1875.2,492.5 1870.2,490.0 1869.0,485.0 1874.0,482.5ZM1847.8,596.2 1839.0,592.5 1832.8,591.2 1834.0,595.0 1841.5,598.8 1849.0,600.0ZM1789.0,650.8 1791.5,655.0 1791.7,653.0 1797.8,655.0 1804.0,661.2 1810.2,665.0 1812.8,658.8 1819.0,652.5 1824.8,646.7 1824.0,640.0 1829.0,632.5 1826.5,620.0 1825.2,610.0 1826.5,600.0 1827.8,593.8 1824.0,588.8 1816.5,585.0 1809.0,580.0 1796.5,582.5 1785.2,585.0 1781.0,591.2 1785.2,600.0 1791.5,605.0 1800.2,608.8 1801.5,617.5 1807.8,627.5 1801.5,636.2 1794.0,640.0 1792.6,642.0 1792.8,640.0 1786.5,647.5ZM1960.2,745.0 1968.5,743.8 1965.2,737.5 1967.8,731.2 1957.8,728.8 1950.2,732.5 1941.5,728.8 1931.5,727.0 1919.0,726.2 1909.0,730.0 1900.2,735.0 1894.0,741.2 1894.5,746.2 1897.8,751.2 1905.2,750.0 1914.0,746.2 1921.5,747.5 1925.2,752.5 1929.0,758.8 1937.8,757.5 1946.5,752.5 1954.0,747.5ZM1880.2,770.0 1875.2,766.2 1870.2,768.8 1875.2,773.8 1880.2,775.0 1882.8,780.0 1886.5,777.5 1889.0,770.0 1892.8,766.2 1890.2,762.5 1887.8,756.2 1884.0,761.2ZM1850.2,753.8 1841.5,760.0 1831.5,761.2 1822.8,762.5 1816.5,767.5 1810.2,775.0 1806.5,783.8 1807.8,786.2 1814.0,785.0 1821.5,781.2 1829.0,776.2 1837.8,775.0 1846.5,772.5 1854.0,766.2 1860.2,758.8 1863.2,751.2 1859.0,751.2ZM1952.8,793.8 1959.0,793.8 1960.2,788.8 1955.2,786.2 1950.2,788.8ZM1916.5,802.5 1917.8,807.5 1921.5,811.2 1925.2,810.0 1920.2,803.8ZM1899.0,820.0 1901.5,815.0 1896.5,808.8 1890.2,810.0 1890.2,820.0 1891.5,827.5 1896.5,827.5ZM1921.5,825.0 1927.8,826.2 1930.2,822.5 1924.0,818.8 1917.8,817.5ZM1976.0,825.0 1975.2,819.5 1972.8,820.0 1973.2,825.5ZM1939.0,858.8 1944.0,857.5 1942.8,850.0 1939.0,843.8 1932.8,838.8 1926.5,840.0 1929.0,847.5 1934.0,853.8ZM1951.5,865.0 1945.2,863.8 1946.5,868.8 1951.5,873.8 1950.2,880.0 1951.5,888.8 1957.8,891.2 1964.0,890.0 1970.2,886.2 1967.8,877.5 1962.8,873.8 1957.8,870.0ZM1875.2,877.5 1876.0,880.5 1881.5,881.2 1886.0,878.8 1881.5,876.2ZM1857.8,882.0 1851.5,883.8 1853.5,886.8 1859.0,885.0ZM1981.0,890.5 1985.2,892.0 1989.0,888.8 1985.2,884.5 1980.2,886.2ZM2007.8,906.2 2016.5,901.2 2012.8,896.2 2005.2,892.0 1996.5,895.0 1985.2,898.8 1975.2,905.0 1967.8,912.5 1961.5,920.0 1952.8,922.5 1951.5,928.8 1955.2,935.0 1959.0,938.8 1960.2,930.0 1966.5,925.0 1975.2,922.5 1985.2,920.0 1991.5,913.8 1999.0,908.8ZM2086.5,955.0 2091.5,960.0 2096.5,963.8 2097.8,955.0 2098.5,945.0 2096.5,936.2 2089.0,938.8 2081.5,947.5 2082.0,952.5ZM1997.8,956.2 1996.5,951.2 1990.2,947.5 1984.0,950.0 1983.5,955.0 1986.5,958.8 1992.8,960.0ZM1885.2,958.8 1880.2,952.5 1874.0,947.5 1869.0,948.8 1870.2,957.5 1874.0,963.8 1879.0,960.0ZM1861.5,972.5 1867.8,972.5 1867.8,967.5 1865.2,960.0 1860.2,956.2 1852.8,957.5 1854.0,962.5 1856.5,967.5ZM2138.0,980.0 2138.0,983.0 2153.8,983.0 2154.2,976.2 2150.5,973.0 2146.8,977.5ZM2011.5,975.0 2010.2,980.0 2010.2,983.0 2024.0,983.0 2024.0,980.0 2020.2,973.8Z" fill="none" stroke="#686868" stroke-width="1.8" stroke-linejoin="round"/></svg>
<svg style="left:13px;top:13px" width="27" height="25" viewBox="0 0 27 25"><path d="M8 6.5 V3.8 H15 V6.5" fill="none" stroke="#3fa9e8" stroke-width="1.7"/>
<rect x="0.6" y="6.3" width="25" height="17.8" fill="#3fa9e8"/><rect x="2.3" y="8" width="21.6" height="4.2" fill="#353535"/>
<path d="M9 24.1 Q14 15 25.6 18.5 V24.1 Z" fill="#1f6fb0"/><path d="M15 24.1 Q18 14.5 25.6 13.5 V20 Q20 20 18.5 24.1 Z" fill="#2e8b2e"/>
<circle cx="18.3" cy="6.3" r="5.6" fill="#e8c52a" stroke="#333" stroke-width="1"/><path d="M18.3 0.2 V12.4 M12.2 6.3 H24.4 M14 2 L22.6 10.6 M22.6 2 L14 10.6" stroke="#e8c52a" stroke-width="2.2"/><circle cx="18.3" cy="6.3" r="2.5" fill="#8a6a12"/></svg>
<svg style="left:60px;top:15px" width="27" height="23" viewBox="0 0 27 23"><path d="M8 4.5 V1.8 H15.5 V4.5" fill="none" stroke="#3fa9e8" stroke-width="1.7"/>
<path d="M0.8 4.3 H23.2 V10 H0.8 Z" fill="#353535" stroke="#3fa9e8" stroke-width="1.6"/>
<path d="M0.8 9 V22.2 H21.6" fill="none" stroke="#3fa9e8" stroke-width="1.6"/>
<path d="M5.5 10.5 H26.6 L21.8 22.3 H0.8 Z" fill="#3fa9e8"/><path d="M9 22.3 Q14 14.5 23.5 17.8 L21.8 22.3 Z" fill="#1f6fb0"/><path d="M15 22.3 Q18 14 24.8 14.5 L22.8 19.6 Q19 19.5 18 22.3 Z" fill="#2e8b2e"/></svg>
<svg style="left:106px;top:15px" width="29" height="24" viewBox="0 0 29 24"><path d="M9.5 4.5 V1.8 H17 V4.5" fill="none" stroke="#3fa9e8" stroke-width="1.7"/>
<rect x="2.6" y="4.3" width="24.6" height="17.8" fill="#3fa9e8"/><rect x="4.3" y="6" width="21.2" height="4" fill="#353535"/>
<path d="M14 22.1 Q19 13 27.2 16.5 V22.1 Z" fill="#1f6fb0"/><path d="M19 22.1 Q21 13.5 27.2 12.5 V18.5 Q23 18.5 22 22.1 Z" fill="#2e8b2e"/>
<path d="M0.8 9.6 H13.2 L15.6 12 V23.3 H0.8 Z" fill="#333" stroke="#8a63c4" stroke-width="1.7"/><rect x="1.6" y="10.4" width="13.2" height="7.2" fill="#7a55b5"/><rect x="4" y="10.4" width="8.2" height="4.6" fill="#333"/><rect x="3.5" y="18" width="9.5" height="5" fill="#e4e4e4"/><rect x="5" y="19.2" width="2.4" height="3.8" fill="#333"/><rect x="1.6" y="17.6" width="1.9" height="5.5" fill="#7a55b5"/><rect x="13" y="17.6" width="1.9" height="5.5" fill="#7a55b5"/></svg>
<svg style="left:151px;top:16px" width="24" height="22" viewBox="0 0 24 22"><path d="M9.5 1.5 L2.2 8 L9.5 14.5 M3 8 Q13 7 18.5 10 Q24.5 14 20.5 18.5 Q18 21 13.5 21" fill="none" stroke="#3f7396" stroke-width="2.7"/></svg>
<svg style="left:188.5px;top:24px" width="8.5" height="5.5" viewBox="0 0 8.5 5.5"><path d="M0 0 L4.25 5.5 L8.5 0" fill="none" stroke="#cfcfcf" stroke-width="2.2"/></svg>
<svg style="left:211px;top:16px" width="24" height="22" viewBox="0 0 24 22"><path d="M14.5 1.5 L21.8 8 L14.5 14.5 M21 8 Q11 7 5.5 10 Q-0.5 14 3.5 18.5 Q6 21 10.5 21" fill="none" stroke="#3f7396" stroke-width="2.7"/></svg>
<svg style="left:250px;top:24px" width="8.5" height="5.5" viewBox="0 0 8.5 5.5"><path d="M0 0 L4.25 5.5 L8.5 0" fill="none" stroke="#cfcfcf" stroke-width="2.2"/></svg>
<svg style="left:286px;top:19px" width="14" height="16" viewBox="0 0 14 16"><path d="M0.5 1.2 H13.5" stroke="#cfcfcf" stroke-width="2"/><path d="M0.8 7 L7 13.5 L13.2 7" fill="none" stroke="#cfcfcf" stroke-width="2.2"/></svg>
<svg style="left:1584px;top:19.5px" width="19" height="19" viewBox="0 0 19 19"><circle cx="11.78" cy="7.22" r="5.7" fill="none" stroke="#cfcfcf" stroke-width="2.6"/><path d="M7.6000000000000005 11.4 L1.14 17.86" stroke="#cfcfcf" stroke-width="3.4" stroke-linecap="round"/></svg>
<svg style="left:2808px;top:15px" width="28" height="26" viewBox="0 0 28 26"><rect x="1.5" y="1.5" width="25" height="23" rx="3" fill="#3d3f43" stroke="#55585e" stroke-width="2"/><path d="M3 17 H25" stroke="#686c74" stroke-width="2.5"/><path d="M3 21.5 H25" stroke="#55585e" stroke-width="2"/></svg>
<svg style="left:2868px;top:13px" width="23" height="27" viewBox="0 0 23 27"><path d="M2 20.5 H21 M4 20 Q6 17 6 12 Q6 5.5 11.5 5 Q17 5.5 17 12 Q17 17 19 20" fill="none" stroke="#e0e0e0" stroke-width="2"/><circle cx="11.5" cy="3" r="1.6" fill="none" stroke="#e0e0e0" stroke-width="1.6"/><path d="M9 23.5 Q11.5 26.5 14 23.5" fill="none" stroke="#e0e0e0" stroke-width="2"/></svg>
<svg style="left:2937px;top:18px" width="14" height="20" viewBox="0 0 14 20"><path d="M1.5 5.5 Q2 1.2 6.8 1.2 Q11.5 1.5 11.5 5.5 Q11.5 8 8.5 10 Q6.5 11.5 6.5 14" fill="none" stroke="#dcdcdc" stroke-width="1.9"/><circle cx="6.5" cy="18" r="1.3" fill="#dcdcdc"/></svg>
<svg style="left:3008px;top:26px" width="18" height="2" viewBox="0 0 18 2"><rect width="18" height="2" fill="#e0e0e0"/></svg>
<svg style="left:3081px;top:18px" width="18" height="18" viewBox="0 0 18 18"><rect x="1" y="5" width="12" height="12" fill="none" stroke="#e0e0e0" stroke-width="1.8"/><path d="M5 5 V1 H17 V13 H13" fill="none" stroke="#e0e0e0" stroke-width="1.8"/></svg>
<svg style="left:3154.5px;top:18.5px" width="17" height="17" viewBox="0 0 17 17"><path d="M0 0 L17.0 17.0 M17.0 0 L0 17.0" fill="none" stroke="#e0e0e0" stroke-width="1.9"/></svg>
<svg style="left:3174px;top:237px" width="15" height="8.5" viewBox="0 0 15 8.5"><path d="M0 8.5 L7.5 0 L15 8.5" fill="none" stroke="#f0f0f0" stroke-width="2.6"/></svg>
<svg style="left:20px;top:105px" width="47" height="53" viewBox="0 0 47 53"><rect x="0" y="5" width="40" height="43" rx="3" fill="#4f4f4f"/><rect x="9" y="1.5" width="22" height="8" rx="2" fill="#5d5d5d"/><circle cx="20" cy="3" r="2.6" fill="none" stroke="#5d5d5d" stroke-width="1.6"/>
<path d="M16 20 H36 L46.5 30.5 V52.5 H16 Z" fill="#3d3d3d" stroke="#6a6a6a" stroke-width="1.6"/><path d="M36 20 V30.5 H46.5" fill="none" stroke="#6a6a6a" stroke-width="1.6"/>
<path d="M21 30 H33 M21 35 H42 M21 39.5 H42 M21 44 H42 M21 48.5 H42" stroke="#6a6a6a" stroke-width="1.6"/></svg>
<svg style="left:82px;top:106px" width="24" height="28" viewBox="0 0 24 28"><path d="M4 1 L15 17 M14 1 L8.5 12" stroke="#8c8c8c" stroke-width="3.4" stroke-linecap="round"/><path d="M3 2 L10 13" stroke="#b5b5b5" stroke-width="1.2"/>
<circle cx="9.5" cy="23.5" r="3.2" fill="none" stroke="#35a0e6" stroke-width="2.2"/><circle cx="19" cy="19.5" r="3.2" fill="none" stroke="#35a0e6" stroke-width="2.2"/></svg>
<svg style="left:81px;top:146px" width="25" height="28" viewBox="0 0 25 28"><path d="M8 1 H17 L23.5 7.5 V20 H8 Z" fill="#3a3a3a" stroke="#c0c0c0" stroke-width="1.6"/><path d="M17 1 V7.5 H23.5" fill="none" stroke="#c0c0c0" stroke-width="1.4"/>
<path d="M1 8 H10.5 L16.5 14 V27 H1 Z" fill="#3a3a3a" stroke="#c0c0c0" stroke-width="1.6"/><path d="M10.5 8 V14 H16.5" fill="none" stroke="#c0c0c0" stroke-width="1.4"/>
<path d="M3.5 13 H8.5 M3.5 16.5 H13.5 M3.5 20 H13.5 M3.5 23.5 H13.5" stroke="#35a0e6" stroke-width="1.7"/></svg>
<svg style="left:212px;top:105px" width="54" height="54" viewBox="0 0 54 54"><rect x="0.8" y="0.8" width="35" height="35" fill="#9a9a9a" stroke="#c4c4c4" stroke-width="1.6"/><rect x="1.5" y="1.5" width="33.6" height="4.5" fill="#d98324"/><rect x="1.5" y="6" width="33.6" height="10" fill="#1f6db5"/><path d="M12.7 6 V35 M23.9 6 V35 M1.5 15.6667 H35.1 M1.5 25.3333 H35.1 " stroke="#3c3c3c" stroke-width="1.4" fill="none"/><rect x="25.5" y="28.5" width="27" height="24" fill="#333" stroke="#c4c4c4" stroke-width="1.8"/>
<rect x="36.5" y="32" width="5" height="4.5" fill="#35a0e6"/><path d="M39 36.5 V40.5 M30.5 44 V40.5 H47.5 V44 M39 40.5 V44" stroke="#35a0e6" stroke-width="1.5" fill="none"/><rect x="28" y="44" width="5" height="5" fill="#35a0e6"/><rect x="36.5" y="44" width="5" height="5" fill="#35a0e6"/><rect x="45" y="44" width="5" height="5" fill="#35a0e6"/></svg>
<svg style="left:303px;top:105px" width="55" height="54" viewBox="0 0 55 54"><rect x="0.8" y="0.8" width="35" height="35" fill="#9a9a9a" stroke="#c4c4c4" stroke-width="1.6"/><rect x="1.5" y="1.5" width="33.6" height="4.5" fill="#35a0e6"/><rect x="1.5" y="6" width="11" height="29" fill="#2d6b2f"/><rect x="12.7" y="6" width="22.4" height="10" fill="#d98324"/><path d="M12.7 6 V35 M23.9 6 V35 M1.5 15.6667 H35.1 M1.5 25.3333 H35.1 " stroke="#3c3c3c" stroke-width="1.4" fill="none"/><rect x="19.5" y="22.5" width="34" height="30" fill="#333" stroke="#c4c4c4" stroke-width="1.8"/>
<path d="M29 28 H24.5 V47 H29 M44 28 H48.5 V47 H44" fill="none" stroke="#35a0e6" stroke-width="1.8"/><path d="M29 31.5 H44 M29 35.5 H44 M29 39.5 H44 M29 43.5 H40" stroke="#d0d0d0" stroke-width="1.6"/></svg>
<svg style="left:402px;top:106px" width="37" height="50" viewBox="0 0 37 50"><rect x="1" y="1" width="35" height="47" rx="3" fill="#333" stroke="#bdbdbd" stroke-width="2"/>
<path d="M4.5 9.5 L8.5 13.5 L16 4.5" fill="none" stroke="#4caf50" stroke-width="2.6"/><path d="M19 8 H32 M19 16.5 H32 M19 25 H32 M6 33 H32 M6 41 H32" stroke="#bdbdbd" stroke-width="1.8"/>
<path d="M13 14 Q7 15 8 24 M5 21 L8.3 25 L11.5 21" fill="none" stroke="#bdbdbd" stroke-width="1.7"/></svg>
<svg style="left:495px;top:107px" width="51" height="48" viewBox="0 0 51 48"><rect x="0.8" y="0.8" width="30" height="21" fill="#9a9a9a" stroke="#c4c4c4" stroke-width="1.6"/><rect x="1.6" y="1.6" width="28.4" height="10" fill="#d98324"/><path d="M15.8 1.6 V21 M1.6 11.6 H30" stroke="#3c3c3c" stroke-width="1.5"/>
<rect x="19.8" y="25.8" width="30" height="21" fill="#9a9a9a" stroke="#c4c4c4" stroke-width="1.6"/><rect x="20.6" y="26.6" width="28.4" height="10" fill="#d98324"/><path d="M34.8 26.6 V46 M20.6 36.6 H49" stroke="#3c3c3c" stroke-width="1.5"/>
<path d="M35 6 Q46 6 45.5 18 M41 15 L45.5 20 L50 15" fill="none" stroke="#bdbdbd" stroke-width="2"/><path d="M16 42 Q5 42 5.5 30 M1 33 L5.5 28 L10 33" fill="none" stroke="#bdbdbd" stroke-width="2"/></svg>
<svg style="left:608px;top:110px" width="50" height="48" viewBox="0 0 50 48"><path d="M1 1 H30 L37 8 V37 H1 Z" fill="#4c4c4c"/><rect x="7" y="1" width="22" height="13" fill="#3a3a3a"/><rect x="6" y="22" width="25" height="15" fill="#5e5e5e"/><rect x="10" y="25" width="6" height="10" fill="#3a3a3a"/>
<path d="M43 14 L49 20 L22 47 L13 50 L16 41 Z" fill="#6a6a6a" stroke="#333" stroke-width="1.5"/></svg>
<svg style="left:679px;top:105px" width="50" height="53" viewBox="0 0 50 53"><path d="M13 5 V2 H22 V5" fill="none" stroke="#5e5e5e" stroke-width="2.4"/><rect x="0" y="6" width="36" height="5" fill="#5e5e5e"/><path d="M3 12 H33 L31 50 H5 Z" fill="#4c4c4c"/><path d="M10 16 V46 M18 16 V46 M26 16 V46" stroke="#444" stroke-width="2"/>
<path d="M43 20 L49 26 L24 50 L15 53 L18 44 Z" fill="#6a6a6a" stroke="#333" stroke-width="1.5"/></svg>
<svg style="left:755px;top:107px" width="48" height="48" viewBox="0 0 48 48"><path d="M8.08 21.76 A16.08 16.08 0 0 1 38.91 17.98" fill="none" stroke="#36a1e8" stroke-width="6.72"/><path d="M39.92 26.24 A16.08 16.08 0 0 1 9.09 30.02" fill="none" stroke="#36a1e8" stroke-width="6.72"/><path d="M48.00 1.44 V20.64 H28.80 Z" fill="#36a1e8"/><path d="M0 46.56 V27.36 H19.20 Z" fill="#36a1e8"/></svg>
<svg style="left:847px;top:107px" width="52" height="52" viewBox="0 0 52 52"><rect x="1" y="1" width="49" height="45" rx="3" fill="#333" stroke="#c4c4c4" stroke-width="2"/><rect x="5" y="5" width="41" height="4.5" fill="#35a0e6"/>
<g fill="#8c8c8c"><rect x="5" y="12.5" width="8.5" height="5"/><rect x="15.5" y="12.5" width="8.5" height="5"/><rect x="26" y="12.5" width="8.5" height="5"/><rect x="36.5" y="12.5" width="9.5" height="5"/>
<rect x="5" y="19.5" width="8.5" height="5"/><rect x="15.5" y="19.5" width="8.5" height="5"/><rect x="26" y="19.5" width="8.5" height="5"/><rect x="36.5" y="19.5" width="9.5" height="5"/>
<rect x="5" y="26.5" width="8.5" height="5"/><rect x="15.5" y="26.5" width="8.5" height="5"/><rect x="26" y="26.5" width="8.5" height="5"/><rect x="36.5" y="26.5" width="9.5" height="5"/>
<rect x="5" y="38" width="8.5" height="5"/><rect x="26" y="38" width="8.5" height="5"/><rect x="36.5" y="38" width="9.5" height="5"/></g>
<g fill="#a98be0"><rect x="5" y="32.5" width="8.5" height="4.5"/><rect x="15.5" y="32.5" width="8.5" height="4.5"/><rect x="26" y="32.5" width="8.5" height="4.5"/><rect x="36.5" y="32.5" width="9.5" height="4.5"/></g>
<path d="M20 31 V51 M10 41 H30" stroke="#333" stroke-width="5.5"/><path d="M20 32 V51 M11 41 H29" stroke="#d0d0d0" stroke-width="2.6"/></svg>
<svg style="left:924px;top:116px" width="32" height="32" viewBox="0 0 32 32"><path d="M3 3 L29 29 M29 3 L3 29" stroke="#c8502a" stroke-width="7"/></svg>
<svg style="left:1416px;top:107px" width="28" height="26" viewBox="0 0 28 26"><path d="M7 25 V3 M1 9 L7 2.5 L13 9" fill="none" stroke="#36a1e8" stroke-width="3"/><path d="M12 13 H15 M12 17 H19 M12 21 H23 M12 25 H27" stroke="#bdbdbd" stroke-width="1.6"/></svg>
<svg style="left:1416px;top:147px" width="28" height="26" viewBox="0 0 28 26"><path d="M7 1 V23 M1 17 L7 23.5 L13 17" fill="none" stroke="#36a1e8" stroke-width="3"/><path d="M12 1.5 H27 M12 5.5 H23 M12 9.5 H19 M12 13.5 H15" stroke="#bdbdbd" stroke-width="1.6"/></svg>
<svg style="left:1416px;top:187px" width="28" height="26" viewBox="0 0 28 26"><path d="M6.5 11 A9.5 9.5 0 1 1 11 21.5" fill="none" stroke="#36a1e8" stroke-width="3"/><path d="M0.5 9 L6.5 15.5 L13 9.5" fill="none" stroke="#36a1e8" stroke-width="3"/></svg>
<svg style="left:1664px;top:105px" width="54" height="54" viewBox="0 0 54 54"><rect x="1" y="1" width="52" height="47" rx="3" fill="#4a4a4a" stroke="#6a6a6a" stroke-width="2"/>
<g stroke="#6e6e6e" stroke-width="1.4" fill="none"><path d="M4 12 H50 M4 20 H50 M4 28 H50 M4 36 H50 M4 43 H50 M14 5 V46 M26 5 V46 M38 5 V46"/></g>
<path d="M12 5 H49 V34 L36 46 Z" fill="#555"/>
<rect x="15" y="5" width="34" height="4.5" fill="#35a0e6"/>
<g><rect x="27" y="12" width="9" height="5" fill="#e3b822"/><rect x="38" y="12" width="10" height="5" fill="#909090"/><rect x="27" y="19" width="9" height="5" fill="#909090"/><rect x="38" y="19" width="10" height="5" fill="#d4502a"/><rect x="27" y="26" width="9" height="5" fill="#4caf50"/><rect x="38" y="26" width="10" height="5" fill="#909090"/><rect x="38" y="33" width="8" height="5" fill="#909090"/></g>
<path d="M8 8 L44 44" stroke="#2e2e2e" stroke-width="9"/><path d="M9 9 L43 43" stroke="#d9d9d9" stroke-width="3.5"/><path d="M12 6 L46 40" stroke="#8a8a8a" stroke-width="2.5"/>
<path d="M22 32 L6 50" stroke="#2e2e2e" stroke-width="9" stroke-linecap="round"/><path d="M22 32 L6 50" stroke="#b0b0b0" stroke-width="5.5" stroke-linecap="round"/></svg>
<svg style="left:505px;top:289px" width="12.5" height="6.5" viewBox="0 0 12.5 6.5"><path d="M0 0 L6.25 6.5 L12.5 0" fill="none" stroke="#d0d0d0" stroke-width="2.2"/></svg>
<svg style="left:535.5px;top:284px" width="11" height="16" viewBox="0 0 11 16"><path d="M2.5 1 H8.5 M3.5 1 V8 M7.5 1 V8 M0.5 9 H10.5 M5.5 9 V15.5" fill="none" stroke="#d0d0d0" stroke-width="2"/><rect x="5.5" y="1" width="2.5" height="7.5" fill="#d0d0d0"/></svg>
<svg style="left:563.5px;top:284.5px" width="16" height="15" viewBox="0 0 16 15"><path d="M0 0 L16.0 15.0 M16.0 0 L0 15.0" fill="none" stroke="#d0d0d0" stroke-width="2.2"/></svg>
<svg style="left:18px;top:329px" width="23" height="26" viewBox="0 0 23 26"><path d="M1 2 H22 L13.799999999999999 13.0 V24 H9.200000000000001 V13.0 Z M1.5 5.5 H21.5" fill="none" stroke="#b4b4b4" stroke-width="2" stroke-linejoin="round"/></svg>
<svg style="left:523px;top:331.5px" width="20" height="20" viewBox="0 0 20 20"><circle cx="12.4" cy="7.6" r="6.0" fill="none" stroke="#c8c8c8" stroke-width="2.6"/><path d="M8.0 12.0 L1.2 18.799999999999997" stroke="#c8c8c8" stroke-width="3.4" stroke-linecap="round"/></svg>
<svg style="left:562.5px;top:339.5px" width="13" height="6.5" viewBox="0 0 13 6.5"><path d="M0 0 L6.5 6.5 L13.0 0" fill="none" stroke="#c8c8c8" stroke-width="2.2"/></svg>
<svg style="left:45px;top:378px" width="38" height="38" viewBox="0 0 38 38"><path d="M3 0 H13 L15 5 H1 Z" fill="#e8cf3a"/><rect x="0" y="6" width="16" height="3.5" fill="#c9ad1f"/>
<path d="M8 10 V34.5 H22 M8 22 H22" fill="none" stroke="#bdbdbd" stroke-width="1.8"/>
<path d="M25 12.5 H35 L37 17.5 H23 Z" fill="#e8cf3a"/><rect x="22" y="18.5" width="16" height="4" fill="#c9ad1f"/>
<path d="M25 26 H35 L37 31 H23 Z" fill="#e8cf3a"/><rect x="22" y="32" width="16" height="4.5" fill="#c9ad1f"/></svg>
<svg style="left:99px;top:380px" width="35" height="34" viewBox="0 0 35 34"><path d="M1.5 8 V26 A16 6.5 0 0 0 33.5 26 V8" fill="#4a4a4a" stroke="#9a9a9a" stroke-width="1.8"/><ellipse cx="17.5" cy="8" rx="16" ry="6.5" fill="#3e3e3e" stroke="#9a9a9a" stroke-width="1.8"/></svg>
<svg style="left:153px;top:379px" width="35" height="35" viewBox="0 0 35 35"><rect x="1" y="1" width="33" height="33" rx="3" fill="#8d8d8d" stroke="#c4c4c4" stroke-width="1.8"/><path d="M2 2 H11 Q10 9 15 15 Q21 22 20 33 H2 Z" fill="#12b5e8"/><path d="M11 2 Q10 9 15 15 Q21 22 20 33 M16 16 Q22 5 33 6" fill="none" stroke="#1d4a5c" stroke-width="1.3"/></svg>
<svg style="left:207px;top:379px" width="34" height="37" viewBox="0 0 34 37"><path d="M27 2 L32 7 L8 32 L2 35.5 L4.5 28.5 Z" fill="#e3c62d" stroke="#8a7a18" stroke-width="0.8"/><path d="M27 2 L32 7 L29.5 9.5 L24.5 4.5 Z" fill="#e0733a"/><path d="M2 35.5 L3.5 31.5 L6 33.5 Z" fill="#444"/><path d="M26 6 L6 28" stroke="#f5e17a" stroke-width="1.2"/></svg>
<svg style="left:258px;top:378px" width="40" height="39" viewBox="0 0 40 39"><rect x="1" y="1" width="26" height="26" fill="none" stroke="#8f8f8f" stroke-width="1.7"/><path d="M14 1 V27 M1 14 H27" stroke="#8f8f8f" stroke-width="1.7"/><path d="M28 18 V39 M17.5 28.5 H38.5" stroke="#333" stroke-width="7"/><path d="M28 19 V38 M18.5 28.5 H37.5" stroke="#2b7fd4" stroke-width="3.2"/></svg>
<svg style="left:312px;top:378px" width="38" height="38" viewBox="0 0 38 38"><path d="M19 1 L36 12 L36 17 L16 35 L3 35 L1 32 L2 17 Z" fill="#d98b2b" stroke="#f0a63a" stroke-width="1.5" stroke-linejoin="round"/><circle cx="9" cy="27" r="3.6" fill="#3a3a3a" stroke="#f4c9a0" stroke-width="1.4"/><path d="M16 13 L28 21 M13 17 L25 25 M19.5 9.5 L31 17" stroke="#8a5a18" stroke-width="1.4"/><path d="M8 28 Q5 33 3 37 Q1.5 38 0.5 36" fill="none" stroke="#9a9a9a" stroke-width="1.5"/></svg>
<svg style="left:16px;top:506px" width="11" height="11" viewBox="0 0 11 11"><path d="M11 0 V11 H0 Z" fill="#9c9c9c"/></svg>
<svg style="left:34px;top:499px" width="26.5" height="26.5" viewBox="0 0 26 26"><rect x="0.8" y="0.8" width="24.4" height="24.4" fill="#222" stroke="#c4c4c4" stroke-width="1.6"/><rect x="3" y="3" width="20" height="20" fill="#3fa044"/><path d="M18 3 H23 V15 L20 17 L18 21 L12 23 L10 20 L7 19.5 L6 16.5 L9 15 L11 12 L14.5 10.5 L16 6.5 Z" fill="#2469ad"/></svg>
<svg style="left:34.5px;top:546px" width="11" height="11" viewBox="0 0 11 11"><path d="M11 0 V11 H0 Z" fill="#9c9c9c"/></svg>
<svg style="left:612.9px;top:271.6px" width="26.7" height="26.7" viewBox="0 0 26 26"><rect x="0.8" y="0.8" width="24.4" height="24.4" fill="#222" stroke="#c4c4c4" stroke-width="1.6"/><rect x="3" y="3" width="20" height="20" fill="#3fa044"/><path d="M18 3 H23 V15 L20 17 L18 21 L12 23 L10 20 L7 19.5 L6 16.5 L9 15 L11 12 L14.5 10.5 L16 6.5 Z" fill="#2469ad"/></svg>
<svg style="left:795px;top:272px" width="26.5" height="26.5" viewBox="0 0 26 26"><rect x="0.8" y="0.8" width="24.4" height="24.4" fill="#222" stroke="#c4c4c4" stroke-width="1.6"/><rect x="3" y="3" width="20" height="20" fill="#3fa044"/><path d="M18 3 H23 V15 L20 17 L18 21 L12 23 L10 20 L7 19.5 L6 16.5 L9 15 L11 12 L14.5 10.5 L16 6.5 Z" fill="#2469ad"/></svg>
<svg style="left:907.5px;top:277.5px" width="15" height="15" viewBox="0 0 15 15"><path d="M0 0 L15.0 15.0 M15.0 0 L0 15.0" fill="none" stroke="#e0e0e0" stroke-width="2"/></svg>
<svg style="left:2587px;top:281.5px" width="12.5" height="7" viewBox="0 0 12.5 7"><path d="M0 0 L6.25 7.0 L12.5 0" fill="none" stroke="#d0d0d0" stroke-width="2.6"/></svg>
<svg style="left:764px;top:998px" width="8" height="5" viewBox="0 0 8 5"><path d="M0 0 H8 L4 5 Z" fill="#cfcfcf"/></svg>
<svg style="left:798px;top:985px" width="27" height="29" viewBox="0 0 27 29"><rect x="1" y="1" width="18" height="18" fill="none" stroke="#8f8f8f" stroke-width="1.5"/><path d="M10 1 V19 M1 10 H19" stroke="#8f8f8f" stroke-width="1.5"/><path d="M19.5 13 V28 M12 20.5 H27" stroke="#333" stroke-width="5.5"/><path d="M19.5 14 V27 M13 20.5 H26" stroke="#2b7fd4" stroke-width="2.6"/></svg>
<svg style="left:833px;top:987px" width="23" height="23" viewBox="0 0 23 23"><rect x="0.8" y="0.8" width="21.4" height="21.4" fill="none" stroke="#9a9a9a" stroke-width="1.5"/><path d="M6.2 1 V22 M11.5 1 V22 M16.8 1 V22 M1 6.2 H22 M1 11.5 H22 M1 16.8 H22" stroke="#9a9a9a" stroke-width="1.5"/></svg>
<svg style="left:865px;top:986px" width="28" height="28" viewBox="0 0 28 28"><path d="M5 25 L23 12 V25 Z" fill="#1f5a88"/><path d="M4 25 L18 8" stroke="#2b9fe6" stroke-width="1.5" stroke-dasharray="3 2"/><path d="M3 25.5 H26" stroke="#2b7fd4" stroke-width="2.2"/><path d="M10 12 L4.5 18 M16 5 L21.5 0.5 M16 5 V9 M16 5 H12" stroke="#2b9fe6" stroke-width="1.6" fill="none"/>
<rect x="0.8" y="2.8" width="6" height="3.4" fill="none" stroke="#cfcfcf" stroke-width="1.4"/><rect x="20" y="14.8" width="6" height="3.4" fill="none" stroke="#cfcfcf" stroke-width="1.4"/><path d="M22 2 V8 M19 5 H25" stroke="#cfcfcf" stroke-width="1.4"/><rect x="0.5" y="23" width="4.5" height="4.5" fill="#53c24a"/></svg>
<svg style="left:898px;top:984px" width="28" height="29" viewBox="0 0 28 29"><rect x="0" y="1" width="12.5" height="13" fill="#2e6b2e"/><path d="M0 14.5 H14 M17 14.5 H28 M15.2 0 V12 M15.2 17 V29" stroke="#9a9a9a" stroke-width="1.5" stroke-dasharray="2 2"/><rect x="13" y="12.3" width="4.4" height="4.4" fill="none" stroke="#bdbdbd" stroke-width="1.3"/></svg>
<svg style="left:931px;top:984px" width="28" height="30" viewBox="0 0 28 30"><path d="M2 22 V9 L9 22 V9" fill="none" stroke="#2b9fe6" stroke-width="3"/><path d="M14.5 1 V29 L26 12" fill="none" stroke="#bdbdbd" stroke-width="1.6"/><path d="M18 2 Q24 4 23 11 M19.5 8.5 L23 12 L26.5 8" fill="none" stroke="#2b9fe6" stroke-width="1.8"/></svg>
<svg style="left:969.5px;top:997px" width="12.5" height="7.5" viewBox="0 0 12.5 7.5"><path d="M0 0 L6.25 7.5 L12.5 0" fill="none" stroke="#e6e6e6" stroke-width="2.4"/></svg>
<svg style="left:1743px;top:1002px" width="13.5" height="8" viewBox="0 0 13.5 8"><path d="M0 0 L6.75 8 L13.5 0" fill="none" stroke="#c4c4c4" stroke-width="2.8"/></svg>
<svg style="left:2237px;top:986px" width="28" height="29" viewBox="0 0 28 29"><rect x="13" y="1" width="14" height="15" fill="#7a7a7a" stroke="#9a9a9a" stroke-width="1"/><path d="M14 2 H19 Q19 8 23 15 H14 Z" fill="#12a6d8"/><path d="M20 9 Q23 4 27 4" stroke="#333" stroke-width="1" fill="none"/>
<circle cx="8.5" cy="15.5" r="7" fill="#2d2d2d" stroke="#2b8fd0" stroke-width="1.8"/><path d="M5 15.5 H12 M8.5 12 V19" stroke="#bdbdbd" stroke-width="1.5"/><path d="M13.5 20.5 L21 28" stroke="#a06a3a" stroke-width="2.6"/></svg>
<svg style="left:2476px;top:992px" width="22" height="22" viewBox="0 0 22 22"><rect x="0.5" y="0.5" width="21" height="21" rx="2" fill="#4d4d4d" stroke="#5a5a5a"/><path d="M7 1 Q8 8 12 11 Q12 16 11 21 M12 11 Q15 6 21 6" fill="none" stroke="#3a3a3a" stroke-width="1.3"/></svg>
<svg style="left:2526px;top:988.5px" width="20" height="23" viewBox="0 0 20 23"><rect x="0" y="0" width="7.5" height="23" fill="#a8a8a8"/><rect x="12" y="0" width="7.5" height="23" fill="#a8a8a8"/></svg>
<svg style="left:2571px;top:985.5px" width="28" height="28" viewBox="0 0 28 28"><path d="M4.71 12.69 A9.38 9.38 0 0 1 22.70 10.49" fill="none" stroke="#36a1e8" stroke-width="3.92"/><path d="M23.29 15.31 A9.38 9.38 0 0 1 5.30 17.51" fill="none" stroke="#36a1e8" stroke-width="3.92"/><path d="M28.00 0.84 V12.04 H16.80 Z" fill="#36a1e8"/><path d="M0 27.16 V15.96 H11.20 Z" fill="#36a1e8"/></svg>
<svg style="left:613px;top:1039px" width="28" height="26" viewBox="0 0 28 26"><rect x="0.5" y="0.5" width="15" height="13" fill="#555" stroke="#c4c4c4" stroke-width="1.2"/><rect x="2" y="2" width="5.5" height="4" fill="#2d7a32"/><rect x="8.5" y="2" width="5.5" height="4" fill="#d98324"/><rect x="2" y="7" width="5.5" height="5" fill="#2d7a32"/><rect x="8.5" y="7" width="5.5" height="5" fill="#9a9a9a"/>
<rect x="9.5" y="11.5" width="18" height="14" fill="#9a9a9a" stroke="#c4c4c4" stroke-width="1.2"/><rect x="10.5" y="12.5" width="16" height="6" fill="#d98324"/><path d="M18.5 12 V25.5 M10 18.8 H27" stroke="#333" stroke-width="1.4"/></svg>
<svg style="left:970.5px;top:1044.5px" width="15" height="15" viewBox="0 0 15 15"><path d="M0 0 L15.0 15.0 M15.0 0 L0 15.0" fill="none" stroke="#e8f2fb" stroke-width="2.1"/></svg>
<svg style="left:2587px;top:1048.5px" width="13" height="7" viewBox="0 0 13 7"><path d="M0 0 L6.5 7.0 L13 0" fill="none" stroke="#d0d0d0" stroke-width="2.2"/></svg>
<svg style="left:1121px;top:1110px" width="9" height="5.5" viewBox="0 0 9 5.5"><path d="M0 0 H9 L4.5 5.5 Z" fill="#cfcfcf"/></svg>
<svg style="left:3101.5px;top:289px" width="13.5" height="6.5" viewBox="0 0 13.5 6.5"><path d="M0 0 L6.75 6.5 L13.5 0" fill="none" stroke="#d0d0d0" stroke-width="2.2"/></svg>
<svg style="left:3133px;top:284px" width="11" height="16" viewBox="0 0 11 16"><path d="M2.5 1 H8.5 M3.5 1 V8 M7.5 1 V8 M0.5 9 H10.5 M5.5 9 V15.5" fill="none" stroke="#d0d0d0" stroke-width="2"/><rect x="5.5" y="1" width="2.5" height="7.5" fill="#d0d0d0"/></svg>
<svg style="left:3160.5px;top:284.5px" width="15.5" height="15" viewBox="0 0 15.5 15"><path d="M0 0 L15.5 15.0 M15.5 0 L0 15.0" fill="none" stroke="#d0d0d0" stroke-width="2.2"/></svg>
<svg style="left:3152px;top:330px" width="24" height="21" viewBox="0 0 24 21"><rect x="0" y="0" width="24" height="4.6" rx="2.3" fill="#b4b4b4"/><rect x="0" y="8" width="24" height="4.6" rx="2.3" fill="#b4b4b4"/><rect x="0" y="16" width="24" height="4.6" rx="2.3" fill="#b4b4b4"/></svg>
<svg style="left:2634px;top:385px" width="19" height="17" viewBox="0 0 19 17"><path d="M18 8.5 H2 M8.5 1.5 L1.5 8.5 L8.5 15.5" fill="none" stroke="#565656" stroke-width="2.6"/></svg>
<svg style="left:2672px;top:384px" width="23" height="21" viewBox="0 0 23 21"><path d="M2 10 L11.5 1.5 L21 10 M5 8 V19 H18 V8 M9.5 19 V12 H13.5 V19" fill="none" stroke="#6a6a6a" stroke-width="1.5"/><rect x="10" y="12.5" width="3" height="6" fill="#7a5a3a"/><path d="M1 20 H22" stroke="#3d7a3d" stroke-width="1.4"/></svg>
<svg style="left:2705px;top:380px" width="26" height="27" viewBox="0 0 26 27"><path d="M1 2 H25 L15.6 13.5 V25 H10.4 V13.5 Z M1.5 5.5 H24.5" fill="none" stroke="#c8c8c8" stroke-width="2" stroke-linejoin="round"/></svg>
<svg style="left:3116px;top:383px" width="20" height="20" viewBox="0 0 20 20"><circle cx="12.4" cy="7.6" r="6.0" fill="none" stroke="#c8c8c8" stroke-width="2.6"/><path d="M8.0 12.0 L1.2 18.799999999999997" stroke="#c8c8c8" stroke-width="3.4" stroke-linecap="round"/></svg>
<svg style="left:3156px;top:390.5px" width="13" height="6.5" viewBox="0 0 13 6.5"><path d="M0 0 L6.5 6.5 L13 0" fill="none" stroke="#c8c8c8" stroke-width="2.2"/></svg>
<svg style="left:2663px;top:434px" width="27" height="25" viewBox="0 0 27 25"><path d="M1.5 8 V2.5 Q1.5 1.2 2.8 1.2 H10 L12 3.5 H24 Q25.5 3.5 25.5 5 V8" fill="#3a3a2a" stroke="#e3c62d" stroke-width="1.8"/><path d="M0.8 7.5 H26.2 V20.5 H0.8 Z" fill="#e3c62d"/><rect x="6" y="9" width="15" height="15" fill="#3c9a45" stroke="#bdbdbd" stroke-width="1.4"/><path d="M15 10 L12 15 L14 18 L10 22 L15 23 L17 17 L19 13 Z" fill="#2564a8"/></svg>
<svg style="left:2663px;top:554px" width="27" height="25" viewBox="0 0 27 25"><path d="M1.5 8 V2.5 Q1.5 1.2 2.8 1.2 H10 L12 3.5 H24 Q25.5 3.5 25.5 5 V8" fill="#3a3a2a" stroke="#e3c62d" stroke-width="1.8"/><path d="M0.8 7.5 H26.2 V20.5 H0.8 Z" fill="#e3c62d"/><rect x="6" y="13" width="16" height="11" fill="#c8402a"/><path d="M11 13 V10.5 H17 V13" fill="none" stroke="#c8402a" stroke-width="1.6"/><path d="M6 17.5 H22" stroke="#333" stroke-width="1"/><rect x="12.5" y="16" width="3" height="3" fill="#999"/></svg>
<svg style="left:2663px;top:594px" width="27" height="25" viewBox="0 0 27 25"><path d="M1.5 8 V2.5 Q1.5 1.2 2.8 1.2 H10 L12 3.5 H24 Q25.5 3.5 25.5 5 V8" fill="#3a3a2a" stroke="#e3c62d" stroke-width="1.8"/><path d="M0.8 7.5 H26.2 V20.5 H0.8 Z" fill="#e3c62d"/><path d="M6 13 V21 A7 3 0 0 0 20 21 V13" fill="#4a4a4a" stroke="#bdbdbd" stroke-width="1.4"/><ellipse cx="13" cy="13" rx="7" ry="3" fill="#3e3e3e" stroke="#bdbdbd" stroke-width="1.4"/></svg>
<svg style="left:2663px;top:754px" width="27" height="25" viewBox="0 0 27 25"><path d="M1.5 8 V2.5 Q1.5 1.2 2.8 1.2 H10 L12 3.5 H24 Q25.5 3.5 25.5 5 V8" fill="#3a3a2a" stroke="#e3c62d" stroke-width="1.8"/><path d="M0.8 7.5 H26.2 V20.5 H0.8 Z" fill="#e3c62d"/><ellipse cx="12" cy="17" rx="8" ry="6" fill="#555" stroke="#bdbdbd" stroke-width="1.3"/><circle cx="8" cy="15" r="1.3" fill="#36a1e8"/><circle cx="12" cy="13.5" r="1.3" fill="#4caf50"/><circle cx="15.5" cy="15.5" r="1.3" fill="#e3c62d"/><path d="M14 22 L25 12" stroke="#bdbdbd" stroke-width="2.2"/><path d="M11.5 24.5 L14.5 21.5" stroke="#d9772b" stroke-width="2.6"/></svg>
<svg style="left:2663px;top:794px" width="27" height="25" viewBox="0 0 27 25"><path d="M1.5 8 V2.5 Q1.5 1.2 2.8 1.2 H10 L12 3.5 H24 Q25.5 3.5 25.5 5 V8" fill="#3a3a2a" stroke="#e3c62d" stroke-width="1.8"/><path d="M0.8 7.5 H26.2 V20.5 H0.8 Z" fill="#e3c62d"/><path d="M12 14 L20 19 L12 24 Z" fill="#777" stroke="#444" stroke-width="1"/></svg>
<svg style="left:2663px;top:834px" width="27" height="25" viewBox="0 0 27 25"><path d="M1.5 8 V2.5 Q1.5 1.2 2.8 1.2 H10 L12 3.5 H24 Q25.5 3.5 25.5 5 V8" fill="#3a3a2a" stroke="#e3c62d" stroke-width="1.8"/><path d="M0.8 7.5 H26.2 V20.5 H0.8 Z" fill="#e3c62d"/><path d="M4 16 L11.5 7 L19 16 Z" fill="#d8502a"/><rect x="7" y="16" width="9" height="7.5" fill="#f0f0f0"/><rect x="9.5" y="18" width="4" height="4" fill="#36a1e8"/><path d="M4 24.5 H19" stroke="#4caf50" stroke-width="1.6"/></svg>
<svg style="left:2690px;top:470px" width="27" height="27" viewBox="0 0 26 26"><rect x="0.8" y="0.8" width="24.4" height="24.4" fill="#222" stroke="#c4c4c4" stroke-width="1.6"/><rect x="3" y="3" width="20" height="20" fill="#3fa044"/><path d="M18 3 H23 V15 L20 17 L18 21 L12 23 L10 20 L7 19.5 L6 16.5 L9 15 L11 12 L14.5 10.5 L16 6.5 Z" fill="#2469ad"/></svg>
<svg style="left:2690px;top:510px" width="27" height="27" viewBox="0 0 26 26"><rect x="0.8" y="0.8" width="24.4" height="24.4" fill="#222" stroke="#c4c4c4" stroke-width="1.6"/><rect x="3" y="3" width="20" height="20" fill="#3fa044"/><path d="M18 3 H23 V15 L20 17 L18 21 L12 23 L10 20 L7 19.5 L6 16.5 L9 15 L11 12 L14.5 10.5 L16 6.5 Z" fill="#2469ad"/></svg>
<svg style="left:2693px;top:633px" width="30" height="30" viewBox="0 0 30 30"><path d="M1.5 5 V19 A9.5 4 0 0 0 20.5 19 V5" fill="#444" stroke="#9a9a9a" stroke-width="1.6"/><ellipse cx="11" cy="5" rx="9.5" ry="4" fill="#3a3a3a" stroke="#9a9a9a" stroke-width="1.6"/>
<path d="M9 20 L19 10.5 L29 20 V29.5 H9 Z" fill="#333" stroke="#333" stroke-width="3"/><path d="M8.5 20 L19 10.5 L29.5 20" fill="none" stroke="#f0f0f0" stroke-width="2.4"/><path d="M11 19 V28.5 H27 V19" fill="#f4f4f4" stroke="#f0f0f0" stroke-width="1.5"/><rect x="14" y="21" width="3.5" height="7.5" fill="#b87a3a"/><rect x="20" y="21" width="4" height="4" fill="#777"/></svg>
<svg style="left:2716px;top:672px" width="28" height="23" viewBox="0 0 28 23"><rect x="1" y="1" width="26" height="21" rx="4" fill="none" stroke="#b4b4b4" stroke-width="1.7"/><rect x="6" y="4.5" width="16" height="14" fill="#7a7a7a" stroke="#c4c4c4" stroke-width="1.3"/><path d="M21 5 L13 11 L15 18 M13 11 L7 8" fill="none" stroke="#3a3a3a" stroke-width="1.3"/></svg>
<svg style="left:2716px;top:712px" width="28" height="23" viewBox="0 0 28 23"><rect x="1" y="1" width="26" height="21" rx="4" fill="none" stroke="#b4b4b4" stroke-width="1.7"/><rect x="6" y="4.5" width="16" height="14" fill="#7a7a7a" stroke="#c4c4c4" stroke-width="1.3"/><path d="M21 5 L13 11 L15 18 M13 11 L7 8" fill="none" stroke="#3a3a3a" stroke-width="1.3"/></svg>
<svg style="left:2638.5px;top:438.5px" width="11" height="11" viewBox="0 0 11 11"><path d="M11 0 V11 H0 Z" fill="#9c9c9c"/></svg>
<svg style="left:2638.5px;top:598.5px" width="11" height="11" viewBox="0 0 11 11"><path d="M11 0 V11 H0 Z" fill="#9c9c9c"/></svg>
<svg style="left:2665px;top:639px" width="11" height="11" viewBox="0 0 11 11"><path d="M11 0 V11 H0 Z" fill="#9c9c9c"/></svg>
<svg style="left:2641px;top:557px" width="10" height="14" viewBox="0 0 10 14"><path d="M1 1 L9 7 L1 13 Z" fill="none" stroke="#a8a8a8" stroke-width="1.5"/></svg>
<svg style="left:2641px;top:757px" width="10" height="14" viewBox="0 0 10 14"><path d="M1 1 L9 7 L1 13 Z" fill="none" stroke="#a8a8a8" stroke-width="1.5"/></svg>
<svg style="left:2641px;top:797px" width="10" height="14" viewBox="0 0 10 14"><path d="M1 1 L9 7 L1 13 Z" fill="none" stroke="#a8a8a8" stroke-width="1.5"/></svg>
<svg style="left:2641px;top:837px" width="10" height="14" viewBox="0 0 10 14"><path d="M1 1 L9 7 L1 13 Z" fill="none" stroke="#a8a8a8" stroke-width="1.5"/></svg>
<span class="t" style="left:1324.0px;top:19.8px;font-size:18.5px;color:#d2d2d2;transform:scaleX(1.0273)">The_Four_Color_Theorem</span>
<span class="t" style="left:1614.0px;top:19.8px;font-size:18.5px;color:#9a9a9a;font-style:italic;transform:scaleX(0.9656)">Command Search (Alt+Q)</span>
<span class="t" style="left:2302.0px;top:19.8px;font-size:18.5px;color:#d2d2d2;transform:scaleX(1.0269)">Spyridon - STARIDAS GEOGRAPHY #MakingMapsPretty</span>
<span class="t" style="left:30.0px;top:66.1px;font-size:20.5px;color:#e4e4e4;transform:scaleX(1.0343)">Project</span>
<span class="t" style="left:266.0px;top:66.1px;font-size:20.5px;color:#e4e4e4;transform:scaleX(1.0335)">Insert</span>
<span class="t" style="left:374.0px;top:66.1px;font-size:20.5px;color:#e4e4e4;transform:scaleX(0.9955)">Analysis</span>
<span class="t" style="left:505.0px;top:66.1px;font-size:20.5px;color:#e4e4e4;transform:scaleX(1.0209)">View</span>
<span class="t" style="left:604.0px;top:66.1px;font-size:20.5px;color:#e4e4e4;transform:scaleX(0.9777)">Share</span>
<span class="t" style="left:713.0px;top:66.1px;font-size:20.5px;color:#e4e4e4;transform:scaleX(1.0196)">Help</span>
<span class="t" style="left:845.0px;top:66.1px;font-size:20.5px;color:#e4e4e4;transform:scaleX(1.0108)">Feature Layer</span>
<span class="t" style="left:1030.0px;top:66.1px;font-size:20.5px;color:#e4e4e4;transform:scaleX(1.0256)">Labeling</span>
<span class="t" style="left:1166.0px;top:66.1px;font-size:20.5px;color:#e4e4e4;transform:scaleX(1.0043)">Data</span>
<span class="t" style="left:156.5px;top:66.1px;font-size:20.5px;color:#ffffff;text-shadow:0.6px 0 0 currentColor,-0.25px 0 0 currentColor;transform:scaleX(1.0057)">Fields</span>
<span class="t" style="left:20.0px;top:167.4px;font-size:19.5px;color:#8e8e8e;transform:scaleX(0.9023)">Paste</span>
<span class="t" style="left:114.0px;top:112.4px;font-size:19.5px;color:#e4e4e4;transform:scaleX(0.9882)">Cut</span>
<span class="t" style="left:114.0px;top:152.4px;font-size:19.5px;color:#e4e4e4;transform:scaleX(0.9883)">Copy</span>
<span class="t" style="left:197.0px;top:167.4px;font-size:19.5px;color:#e4e4e4;transform:scaleX(1.0085)">Subtypes</span>
<span class="t" style="left:291.0px;top:167.4px;font-size:19.5px;color:#e4e4e4;transform:scaleX(1.0136)">Domains</span>
<span class="t" style="left:381.0px;top:167.4px;font-size:19.5px;color:#e4e4e4;transform:scaleX(1.0740)">Attribute</span>
<span class="t" style="left:397.0px;top:190.9px;font-size:19.5px;color:#e4e4e4;transform:scaleX(0.9427)">Rules</span>
<span class="t" style="left:470.0px;top:167.4px;font-size:19.5px;color:#e4e4e4;transform:scaleX(1.0601)">Contingent</span>
<span class="t" style="left:492.0px;top:190.9px;font-size:19.5px;color:#e4e4e4;transform:scaleX(0.9624)">Values</span>
<span class="t" style="left:611.5px;top:167.4px;font-size:19.5px;color:#8e8e8e;transform:scaleX(0.9111)">Save</span>
<span class="t" style="left:670.0px;top:167.4px;font-size:19.5px;color:#8e8e8e;transform:scaleX(0.9530)">Discard</span>
<span class="t" style="left:745.0px;top:167.4px;font-size:19.5px;color:#e4e4e4;transform:scaleX(0.9519)">Refresh</span>
<span class="t" style="left:854.0px;top:167.4px;font-size:19.5px;color:#e4e4e4;transform:scaleX(0.9996)">New</span>
<span class="t" style="left:911.5px;top:167.4px;font-size:19.5px;color:#e4e4e4;transform:scaleX(1.0111)">Delete</span>
<span class="t" style="left:1001.0px;top:112.4px;font-size:19.5px;color:#e4e4e4;transform:scaleX(0.9982)">Filter Name:</span>
<span class="t" style="left:1001.0px;top:152.4px;font-size:19.5px;color:#e4e4e4;transform:scaleX(1.0134)">Filter Domain:</span>
<span class="t" style="left:1450.5px;top:112.4px;font-size:19.5px;color:#e4e4e4;transform:scaleX(1.0139)">Sort Ascending</span>
<span class="t" style="left:1450.5px;top:152.4px;font-size:19.5px;color:#e4e4e4;transform:scaleX(1.0092)">Sort Descending</span>
<span class="t" style="left:1450.5px;top:192.4px;font-size:19.5px;color:#e4e4e4;transform:scaleX(0.9224)">Reset</span>
<span class="t" style="left:1670.0px;top:167.4px;font-size:19.5px;color:#e4e4e4;transform:scaleX(0.9465)">Data</span>
<span class="t" style="left:1638.0px;top:190.9px;font-size:19.5px;color:#e4e4e4;transform:scaleX(1.0135)">Engineering</span>
<span class="t" style="left:49.0px;top:231.2px;font-size:18px;color:#b2b2b2;transform:scaleX(1.0124)">Clipboard</span>
<span class="t" style="left:335.0px;top:231.2px;font-size:18px;color:#b2b2b2;transform:scaleX(0.9691)">Data Design</span>
<span class="t" style="left:654.0px;top:231.2px;font-size:18px;color:#b2b2b2;transform:scaleX(0.9720)">Manage Edits</span>
<span class="t" style="left:889.0px;top:231.2px;font-size:18px;color:#b2b2b2;transform:scaleX(0.8993)">Edits</span>
<span class="t" style="left:1174.0px;top:231.2px;font-size:18px;color:#b2b2b2;transform:scaleX(0.9750)">Filter</span>
<span class="t" style="left:1462.0px;top:231.2px;font-size:18px;color:#b2b2b2;transform:scaleX(1.0108)">Field Order</span>
<span class="t" style="left:1622.5px;top:231.2px;font-size:18px;color:#b2b2b2;transform:scaleX(0.9776)">Data Engineering</span>
<span class="t" style="left:22.0px;top:280.3px;font-size:27.5px;color:#e4e4e4;transform:scaleX(0.9539)">Contents</span>
<span class="t" style="left:64.0px;top:334.0px;font-size:20px;color:#cfcfcf;font-style:italic;transform:scaleX(0.8915)">Search</span>
<span class="t" style="left:38.0px;top:458.7px;font-size:21.5px;color:#e8e8e8;text-shadow:0.6px 0 0 currentColor,-0.25px 0 0 currentColor;transform:scaleX(1.0980)">Drawing Order</span>
<span class="t" style="left:69.5px;top:504.0px;font-size:20px;color:#e4e4e4;transform:scaleX(0.9389)">Arcade</span>
<span class="t" style="left:85.0px;top:544.0px;font-size:20px;color:#e4e4e4;transform:scaleX(1.0028)">MunicipalUnit2021</span>
<span class="t" style="left:648.5px;top:276.5px;font-size:20px;color:#e4e4e4;transform:scaleX(0.9790)">ColorTools</span>
<span class="t" style="left:830.0px;top:276.5px;font-size:20px;color:#e4e4e4;transform:scaleX(0.9467)">Arcade</span>
<span class="t" style="left:624.0px;top:992.4px;font-size:19.5px;color:#e4e4e4;transform:scaleX(0.9513)">1:3,720,450</span>
<span class="t" style="left:1466.0px;top:994.4px;font-size:19px;color:#e4e4e4;transform:scaleX(0.9984)">119,108.90E 4,049,210.25N m</span>
<span class="t" style="left:2271.0px;top:992.4px;font-size:19px;color:#9a9a9a;transform:scaleX(1.0095)">Selected Features: 0</span>
<span class="t" style="left:649.0px;top:1044.0px;font-size:20px;color:#ffffff;transform:scaleX(0.9799)">Fields: MunicipalUnit2021 (Arcade)</span>
<span class="t" style="left:622.0px;top:1104.4px;font-size:19.5px;color:#e4e4e4;transform:scaleX(0.9940)">Current Layer</span>
<span class="t" style="left:810.0px;top:1104.4px;font-size:19.5px;color:#e4e4e4;transform:scaleX(1.0203)">MunicipalUnit2021 (Arcade)</span>
<span class="t" style="left:686.5px;top:1165.3px;font-size:18.5px;color:#dcdcdc;transform:scaleX(0.9599)">Visible</span>
<span class="t" style="left:805.5px;top:1165.3px;font-size:18.5px;color:#dcdcdc;transform:scaleX(0.9324)">Read Only</span>
<span class="t" style="left:918.5px;top:1165.3px;font-size:18.5px;color:#dcdcdc;transform:scaleX(0.9567)">Field Name</span>
<span class="t" style="left:1052.0px;top:1165.3px;font-size:18.5px;color:#dcdcdc;transform:scaleX(0.8975)">Alias</span>
<span class="t" style="left:1185.5px;top:1165.3px;font-size:18.5px;color:#dcdcdc;transform:scaleX(0.9464)">Data Type</span>
<span class="t" style="left:1329.5px;top:1165.3px;font-size:18.5px;color:#dcdcdc;transform:scaleX(0.9363)">Allow NULL</span>
<span class="t" style="left:1484.5px;top:1165.3px;font-size:18.5px;color:#dcdcdc;transform:scaleX(1.0069)">Highlight</span>
<span class="t" style="left:1588.0px;top:1165.3px;font-size:18.5px;color:#dcdcdc;transform:scaleX(0.9882)">Number Format</span>
<span class="t" style="left:1747.0px;top:1165.3px;font-size:18.5px;color:#dcdcdc;transform:scaleX(0.9725)">Domain</span>
<span class="t" style="left:1839.6px;top:1165.3px;font-size:18.5px;color:#dcdcdc;transform:scaleX(0.9620)">Default</span>
<span class="t" style="left:1926.7px;top:1165.3px;font-size:18.5px;color:#dcdcdc;transform:scaleX(0.9736)">Length</span>
<span class="t" style="left:912.0px;top:1199.3px;font-size:19px;color:#9c9c9c;transform:scaleX(0.9154)">OBJECTID</span>
<span class="t" style="left:1045.0px;top:1199.3px;font-size:19px;color:#f0f0f0;transform:scaleX(0.9154)">OBJECTID</span>
<span class="t" style="left:1179.0px;top:1199.3px;font-size:19px;color:#9c9c9c;transform:scaleX(1.0416)">Object ID</span>
<span class="t" style="left:1581.0px;top:1199.3px;font-size:19px;color:#b0b0b0;transform:scaleX(1.0603)">Numeric</span>
<span class="t" style="left:912.0px;top:1239.3px;font-size:19px;color:#9c9c9c;transform:scaleX(0.9881)">Shape</span>
<span class="t" style="left:1045.0px;top:1239.3px;font-size:19px;color:#f0f0f0;transform:scaleX(0.9881)">Shape</span>
<span class="t" style="left:1179.0px;top:1239.3px;font-size:19px;color:#9c9c9c;transform:scaleX(1.0309)">Geometry</span>
<span class="t" style="left:912.0px;top:1279.3px;font-size:19px;color:#e6e6e6;transform:scaleX(1.0717)">MunUnits</span>
<span class="t" style="left:1045.0px;top:1279.3px;font-size:19px;color:#f0f0f0;transform:scaleX(1.0717)">MunUnits</span>
<span class="t" style="left:1179.0px;top:1279.3px;font-size:19px;color:#9c9c9c;transform:scaleX(1.0040)">Text</span>
<span class="t" style="left:1965.3px;top:1278.8px;font-size:19px;color:#e6e6e6;transform:scaleX(1.0000)">254</span>
<span class="t" style="left:912.0px;top:1319.3px;font-size:19px;color:#e6e6e6;transform:scaleX(0.9614)">OID_1</span>
<span class="t" style="left:1045.0px;top:1319.3px;font-size:19px;color:#f0f0f0;transform:scaleX(0.9614)">OID_1</span>
<span class="t" style="left:1179.0px;top:1319.3px;font-size:19px;color:#9c9c9c;transform:scaleX(1.0052)">Long</span>
<span class="t" style="left:1581.0px;top:1319.3px;font-size:19px;color:#e6e6e6;transform:scaleX(1.0603)">Numeric</span>
<span class="t" style="left:912.0px;top:1359.3px;font-size:19px;color:#e6e6e6;transform:scaleX(0.9216)">CODE</span>
<span class="t" style="left:1045.0px;top:1359.3px;font-size:19px;color:#f0f0f0;transform:scaleX(0.9216)">CODE</span>
<span class="t" style="left:1179.0px;top:1359.3px;font-size:19px;color:#9c9c9c;transform:scaleX(1.0040)">Text</span>
<span class="t" style="left:1986.4px;top:1358.8px;font-size:19px;color:#e6e6e6;transform:scaleX(1.0000)">6</span>
<span class="t" style="left:912.0px;top:1399.3px;font-size:19px;color:#e6e6e6;transform:scaleX(0.9471)">NAME_GR</span>
<span class="t" style="left:1045.0px;top:1399.3px;font-size:19px;color:#f0f0f0;transform:scaleX(0.9471)">NAME_GR</span>
<span class="t" style="left:1179.0px;top:1399.3px;font-size:19px;color:#9c9c9c;transform:scaleX(1.0040)">Text</span>
<span class="t" style="left:1975.9px;top:1398.8px;font-size:19px;color:#e6e6e6;transform:scaleX(1.0000)">80</span>
<span class="t" style="left:912.0px;top:1439.3px;font-size:19px;color:#e6e6e6;transform:scaleX(0.9612)">NAME_ENG</span>
<span class="t" style="left:1045.0px;top:1439.3px;font-size:19px;color:#f0f0f0;transform:scaleX(0.9612)">NAME_ENG</span>
<span class="t" style="left:1179.0px;top:1439.3px;font-size:19px;color:#9c9c9c;transform:scaleX(1.0040)">Text</span>
<span class="t" style="left:1975.9px;top:1438.8px;font-size:19px;color:#e6e6e6;transform:scaleX(1.0000)">44</span>
<span class="t" style="left:912.0px;top:1479.3px;font-size:19px;color:#e6e6e6;transform:scaleX(0.9863)">Shape_Leng</span>
<span class="t" style="left:1045.0px;top:1479.3px;font-size:19px;color:#f0f0f0;transform:scaleX(0.9863)">Shape_Leng</span>
<span class="t" style="left:1179.0px;top:1479.3px;font-size:19px;color:#9c9c9c;transform:scaleX(1.0628)">Double</span>
<span class="t" style="left:1581.0px;top:1479.3px;font-size:19px;color:#e6e6e6;transform:scaleX(1.0603)">Numeric</span>
<span class="t" style="left:912.0px;top:1519.3px;font-size:19px;color:#9c9c9c;transform:scaleX(1.0071)">Shape_Length</span>
<span class="t" style="left:1045.0px;top:1519.3px;font-size:19px;color:#f0f0f0;transform:scaleX(1.0071)">Shape_Length</span>
<span class="t" style="left:1179.0px;top:1519.3px;font-size:19px;color:#9c9c9c;transform:scaleX(1.0628)">Double</span>
<span class="t" style="left:1581.0px;top:1519.3px;font-size:19px;color:#e6e6e6;transform:scaleX(1.0603)">Numeric</span>
<span class="t" style="left:912.0px;top:1559.3px;font-size:19px;color:#9c9c9c;transform:scaleX(0.9749)">Shape_Area</span>
<span class="t" style="left:1045.0px;top:1559.3px;font-size:19px;color:#f0f0f0;transform:scaleX(0.9749)">Shape_Area</span>
<span class="t" style="left:1179.0px;top:1559.3px;font-size:19px;color:#9c9c9c;transform:scaleX(1.0628)">Double</span>
<span class="t" style="left:1581.0px;top:1559.3px;font-size:19px;color:#e6e6e6;transform:scaleX(1.0603)">Numeric</span>
<span class="t" style="left:912.0px;top:1599.3px;font-size:19px;color:#e6e6e6;transform:scaleX(1.0622)">Neighbors</span>
<span class="t" style="left:1045.0px;top:1599.3px;font-size:19px;color:#f0f0f0;transform:scaleX(1.0622)">Neighbors</span>
<span class="t" style="left:1179.0px;top:1599.3px;font-size:19px;color:#8fb2d6;transform:scaleX(1.0040)">Text</span>
<span class="t" style="left:1954.7px;top:1598.8px;font-size:19px;color:#e6e6e6;transform:scaleX(1.0000)">2550</span>
<span class="t" style="left:912.0px;top:1639.3px;font-size:19px;color:#e6e6e6;transform:scaleX(0.9793)">ColorClass</span>
<span class="t" style="left:1045.0px;top:1639.3px;font-size:19px;color:#f0f0f0;transform:scaleX(0.9793)">ColorClass</span>
<span class="t" style="left:1179.0px;top:1639.3px;font-size:19px;color:#8fb2d6;transform:scaleX(1.0052)">Long</span>
<span class="t" style="left:1581.0px;top:1639.3px;font-size:19px;color:#e6e6e6;transform:scaleX(1.0603)">Numeric</span>
<span class="t" style="left:646.6px;top:1687.4px;font-size:19.5px;color:#e4e4e4;transform:scaleX(1.0300)">Click here to add a new field.</span>
<span class="t" style="left:613.6px;top:1749.0px;font-size:19.5px;color:#e4e4e4;transform:scaleX(1.0233)">2 of 12 selected</span>
<span class="t" style="left:2630.5px;top:280.3px;font-size:27.5px;color:#e4e4e4;transform:scaleX(0.9441)">Catalog</span>
<span class="t" style="left:2631.0px;top:328.2px;font-size:21.5px;color:#f0f0f0;text-shadow:0.6px 0 0 currentColor,-0.25px 0 0 currentColor;transform:scaleX(1.0086)">Project</span>
<span class="t" style="left:2716.5px;top:328.2px;font-size:21.5px;color:#e4e4e4;transform:scaleX(0.9524)">Portal</span>
<span class="t" style="left:2788.0px;top:328.2px;font-size:21.5px;color:#e4e4e4;transform:scaleX(1.0063)">Computer</span>
<span class="t" style="left:2901.0px;top:328.2px;font-size:21.5px;color:#e4e4e4;transform:scaleX(0.9330)">Favorites</span>
<span class="t" style="left:2747.0px;top:385.0px;font-size:20px;color:#cfcfcf;font-style:italic;transform:scaleX(0.9377)">Search Project</span>
<span class="t" style="left:2704.0px;top:435.0px;font-size:20px;color:#e4e4e4;transform:scaleX(0.9610)">Maps</span>
<span class="t" style="left:2730.0px;top:475.0px;font-size:20px;color:#e4e4e4;transform:scaleX(0.9843)">ColorTools</span>
<span class="t" style="left:2730.0px;top:515.0px;font-size:20px;color:#e4e4e4;transform:scaleX(0.9467)">Arcade</span>
<span class="t" style="left:2704.0px;top:555.0px;font-size:20px;color:#e4e4e4;transform:scaleX(0.9771)">Toolboxes</span>
<span class="t" style="left:2704.0px;top:595.0px;font-size:20px;color:#e4e4e4;transform:scaleX(0.9255)">Databases</span>
<span class="t" style="left:2731.0px;top:635.0px;font-size:20px;color:#e4e4e4;transform:scaleX(0.9576)">The_Four_Color_Theorem.gdb</span>
<span class="t" style="left:2757.0px;top:675.0px;font-size:20px;color:#e4e4e4;transform:scaleX(1.0088)">MunicipalUnit2021</span>
<span class="t" style="left:2757.0px;top:715.0px;font-size:20px;color:#e4e4e4;transform:scaleX(0.9930)">MunicipalUnit2021_EliminateOverlapsTool</span>
<span class="t" style="left:2703.5px;top:755.0px;font-size:20px;color:#e4e4e4;transform:scaleX(0.9271)">Styles</span>
<span class="t" style="left:2703.5px;top:795.0px;font-size:20px;color:#e4e4e4;transform:scaleX(0.9520)">Folders</span>
<span class="t" style="left:2703.5px;top:835.0px;font-size:20px;color:#e4e4e4;transform:scaleX(0.9450)">Locators</span>
<span class="t" style="left:2628.0px;top:1762.0px;font-size:20px;color:#1ba1e2;transform:scaleX(0.9719)">Catalog</span>
<span class="t" style="left:2717.0px;top:1762.0px;font-size:20px;color:#e4e4e4;transform:scaleX(0.9905)">Symbology</span>
</body></html>
